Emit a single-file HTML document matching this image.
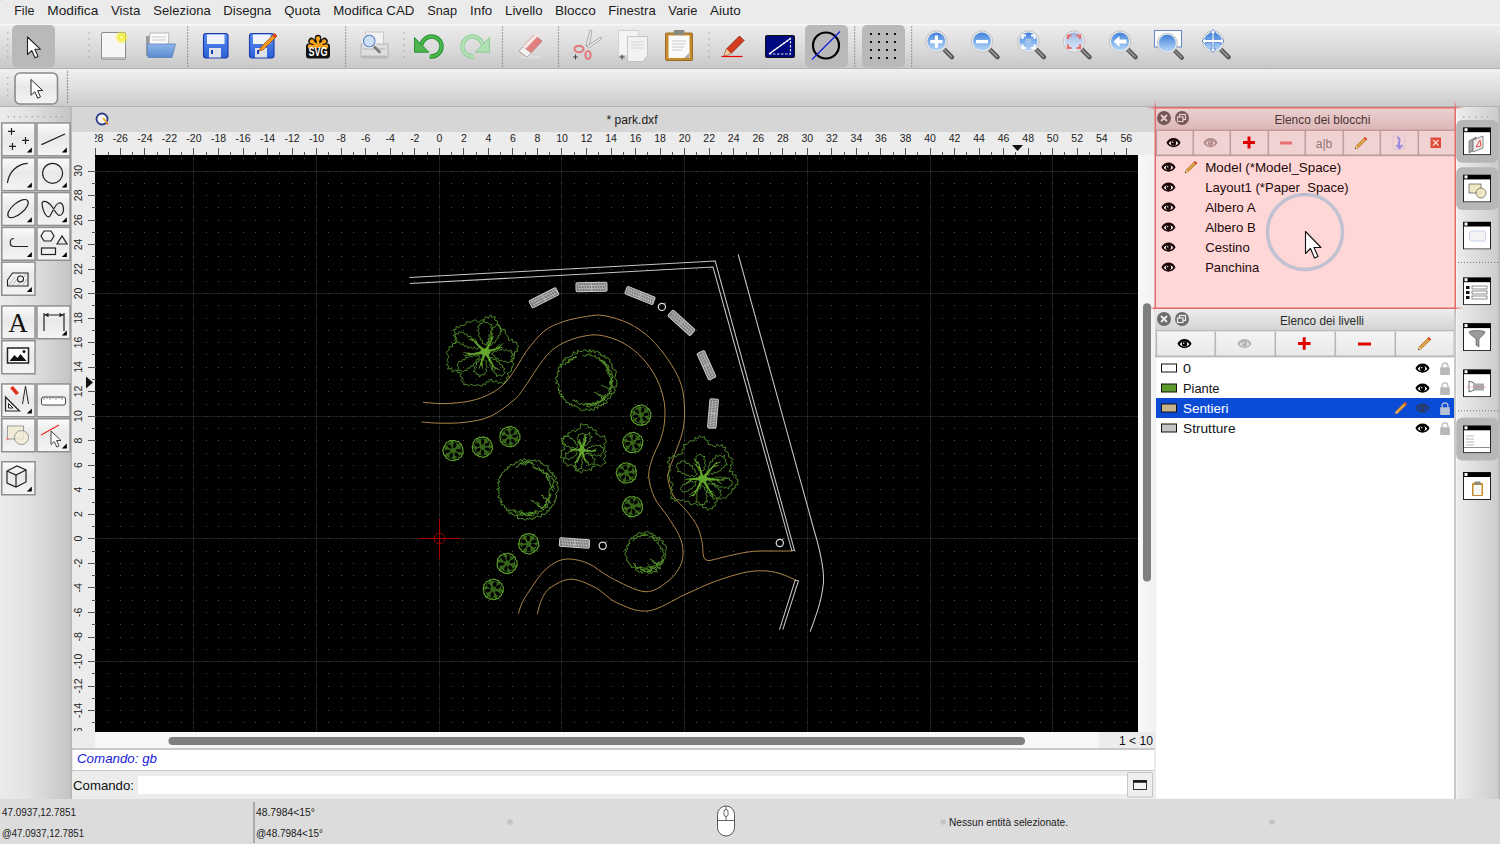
<!DOCTYPE html><html><head><meta charset="utf-8"><title>LibreCAD - park.dxf</title><style>
html,body{margin:0;padding:0;}
body{width:1500px;height:844px;position:relative;overflow:hidden;background:#ececec;font-family:"Liberation Sans",sans-serif;}
.abs{position:absolute;}
svg{position:absolute;left:0;top:0;overflow:visible}
</style></head><body>

<div class="abs" style="left:0;top:0;width:1500px;height:24px;background:#ebebeb"></div>
<div class="abs" style="left:0;top:24px;width:1500px;height:44.5px;background:linear-gradient(#f7f7f7 0,#f7f7f7 1px,#ececec 2px,#d9d9d9 60%,#c8c8c8);border-bottom:1px solid #b4b4b4;box-sizing:border-box"></div>
<div class="abs" style="left:0;top:68.5px;width:1500px;height:38.5px;background:linear-gradient(#f0f0f0,#dcdcdc 60%,#cbcbcb);border-bottom:1.5px solid #b3b3b3;box-sizing:border-box"></div>
<div class="abs" style="left:0;top:107px;width:71px;height:692px;background:linear-gradient(90deg,#ececec,#e2e2e2 40%,#c4c4c4)"></div>
<div class="abs" style="left:70px;top:107px;width:2px;height:692px;background:#b9b9b9"></div>
<div class="abs" style="left:72px;top:107px;width:1083px;height:25px;background:#d6d6d6"></div>
<div class="abs" style="left:72px;top:132px;width:1083px;height:23px;background:#ececec"></div>
<div class="abs" style="left:72px;top:155px;width:23px;height:593px;background:#ececec"></div>
<div class="abs" style="left:95px;top:155px;width:1043px;height:577px;background:#000"></div>
<div class="abs" style="left:1138px;top:155px;width:17px;height:577px;background:linear-gradient(90deg,#f8f8f8,#f2f2f2)"></div>
<div class="abs" style="left:95px;top:732px;width:1060px;height:16px;background:#f7f7f7"></div>
<div class="abs" style="left:1099px;top:732px;width:56px;height:16px;background:#ececec"></div>
<div class="abs" style="left:72px;top:748px;width:1083px;height:2px;background:#c9c9c9"></div>
<div class="abs" style="left:73px;top:750px;width:1081px;height:20px;background:#fff"></div>
<div class="abs" style="left:72px;top:770px;width:1083px;height:1px;background:#c9c9c9"></div>
<div class="abs" style="left:72px;top:771px;width:1083px;height:28px;background:#ececec"></div>
<div class="abs" style="left:138px;top:776px;width:989px;height:18px;background:#fff"></div>
<div class="abs" style="left:1155px;top:107px;width:300px;height:692px;background:#ececec"></div>
<div class="abs" style="left:1455px;top:107px;width:45px;height:692px;background:linear-gradient(90deg,#c9c9c9 0,#c9c9c9 1px,#f6f6f6 1px,#ebebeb 3px,#dcdcdc 50%,#cdcdcd 95%,#bcbcbc 95%)"></div>
<div class="abs" style="left:0;top:799px;width:1500px;height:45px;background:#dcdcdc"></div>
<svg width="1500" height="844" viewBox="0 0 1500 844" font-family='"Liberation Sans", sans-serif'>
<text x="14.3" y="10" font-size="13.5" fill="#1c1c1c" text-anchor="start" dominant-baseline="central" font-weight="normal"  textLength="20.0" lengthAdjust="spacingAndGlyphs">File</text>
<text x="47.3" y="10" font-size="13.5" fill="#1c1c1c" text-anchor="start" dominant-baseline="central" font-weight="normal"  textLength="51.0" lengthAdjust="spacingAndGlyphs">Modifica</text>
<text x="111" y="10" font-size="13.5" fill="#1c1c1c" text-anchor="start" dominant-baseline="central" font-weight="normal"  textLength="29.3" lengthAdjust="spacingAndGlyphs">Vista</text>
<text x="153.3" y="10" font-size="13.5" fill="#1c1c1c" text-anchor="start" dominant-baseline="central" font-weight="normal"  textLength="57.4" lengthAdjust="spacingAndGlyphs">Seleziona</text>
<text x="223.3" y="10" font-size="13.5" fill="#1c1c1c" text-anchor="start" dominant-baseline="central" font-weight="normal"  textLength="48.0" lengthAdjust="spacingAndGlyphs">Disegna</text>
<text x="284.3" y="10" font-size="13.5" fill="#1c1c1c" text-anchor="start" dominant-baseline="central" font-weight="normal"  textLength="36.0" lengthAdjust="spacingAndGlyphs">Quota</text>
<text x="333.3" y="10" font-size="13.5" fill="#1c1c1c" text-anchor="start" dominant-baseline="central" font-weight="normal"  textLength="81.0" lengthAdjust="spacingAndGlyphs">Modifica CAD</text>
<text x="427.3" y="10" font-size="13.5" fill="#1c1c1c" text-anchor="start" dominant-baseline="central" font-weight="normal"  textLength="29.7" lengthAdjust="spacingAndGlyphs">Snap</text>
<text x="470" y="10" font-size="13.5" fill="#1c1c1c" text-anchor="start" dominant-baseline="central" font-weight="normal"  textLength="22.3" lengthAdjust="spacingAndGlyphs">Info</text>
<text x="505" y="10" font-size="13.5" fill="#1c1c1c" text-anchor="start" dominant-baseline="central" font-weight="normal"  textLength="37.7" lengthAdjust="spacingAndGlyphs">Livello</text>
<text x="555" y="10" font-size="13.5" fill="#1c1c1c" text-anchor="start" dominant-baseline="central" font-weight="normal"  textLength="40.7" lengthAdjust="spacingAndGlyphs">Blocco</text>
<text x="608.3" y="10" font-size="13.5" fill="#1c1c1c" text-anchor="start" dominant-baseline="central" font-weight="normal"  textLength="47.4" lengthAdjust="spacingAndGlyphs">Finestra</text>
<text x="668.3" y="10" font-size="13.5" fill="#1c1c1c" text-anchor="start" dominant-baseline="central" font-weight="normal"  textLength="29.0" lengthAdjust="spacingAndGlyphs">Varie</text>
<text x="710" y="10" font-size="13.5" fill="#1c1c1c" text-anchor="start" dominant-baseline="central" font-weight="normal"  textLength="30.7" lengthAdjust="spacingAndGlyphs">Aiuto</text>
<path d="M95.5 148V155M108.5 152V155M120.5 148V155M132.5 152V155M144.5 148V155M157.5 152V155M169.5 148V155M181.5 152V155M193.5 148V155M206.5 152V155M218.5 148V155M230.5 152V155M243.5 148V155M255.5 152V155M267.5 148V155M279.5 152V155M292.5 148V155M304.5 152V155M316.5 148V155M328.5 152V155M341.5 148V155M353.5 152V155M365.5 148V155M377.5 152V155M390.5 148V155M402.5 152V155M414.5 148V155M427.5 152V155M439.5 148V155M451.5 152V155M463.5 148V155M476.5 152V155M488.5 148V155M500.5 152V155M512.5 148V155M525.5 152V155M537.5 148V155M549.5 152V155M561.5 148V155M574.5 152V155M586.5 148V155M598.5 152V155M611.5 148V155M623.5 152V155M635.5 148V155M647.5 152V155M660.5 148V155M672.5 152V155M684.5 148V155M696.5 152V155M709.5 148V155M721.5 152V155M733.5 148V155M746.5 152V155M758.5 148V155M770.5 152V155M782.5 148V155M795.5 152V155M807.5 148V155M819.5 152V155M831.5 148V155M844.5 152V155M856.5 148V155M868.5 152V155M880.5 148V155M893.5 152V155M905.5 148V155M917.5 152V155M930.5 148V155M942.5 152V155M954.5 148V155M966.5 152V155M979.5 148V155M991.5 152V155M1003.5 148V155M1015.5 152V155M1028.5 148V155M1040.5 152V155M1052.5 148V155M1064.5 152V155M1077.5 148V155M1089.5 152V155M1101.5 148V155M1114.5 152V155M1126.5 148V155M92 722.5H95M88 710.5H95M92 698.5H95M88 686.5H95M92 673.5H95M88 661.5H95M92 649.5H95M88 637.5H95M92 624.5H95M88 612.5H95M92 600.5H95M88 587.5H95M92 575.5H95M88 563.5H95M92 551.5H95M88 538.5H95M92 526.5H95M88 514.5H95M92 502.5H95M88 489.5H95M92 477.5H95M88 465.5H95M92 453.5H95M88 440.5H95M92 428.5H95M88 416.5H95M92 404.5H95M88 391.5H95M92 379.5H95M88 367.5H95M92 354.5H95M88 342.5H95M92 330.5H95M88 318.5H95M92 305.5H95M88 293.5H95M92 281.5H95M88 269.5H95M92 256.5H95M88 244.5H95M92 232.5H95M88 220.5H95M92 207.5H95M88 195.5H95M92 183.5H95M88 171.5H95" stroke="#555" stroke-width="1" fill="none"/>
<svg x="95" y="132" width="1043" height="16" viewBox="95 132 1043 16" style="position:static;overflow:hidden">
<text x="95.8" y="138" font-size="10.5" fill="#222" text-anchor="middle" dominant-baseline="central" font-weight="normal" >-28</text>
<text x="120.3" y="138" font-size="10.5" fill="#222" text-anchor="middle" dominant-baseline="central" font-weight="normal" >-26</text>
<text x="144.9" y="138" font-size="10.5" fill="#222" text-anchor="middle" dominant-baseline="central" font-weight="normal" >-24</text>
<text x="169.4" y="138" font-size="10.5" fill="#222" text-anchor="middle" dominant-baseline="central" font-weight="normal" >-22</text>
<text x="193.9" y="138" font-size="10.5" fill="#222" text-anchor="middle" dominant-baseline="central" font-weight="normal" >-20</text>
<text x="218.5" y="138" font-size="10.5" fill="#222" text-anchor="middle" dominant-baseline="central" font-weight="normal" >-18</text>
<text x="243.0" y="138" font-size="10.5" fill="#222" text-anchor="middle" dominant-baseline="central" font-weight="normal" >-16</text>
<text x="267.5" y="138" font-size="10.5" fill="#222" text-anchor="middle" dominant-baseline="central" font-weight="normal" >-14</text>
<text x="292.1" y="138" font-size="10.5" fill="#222" text-anchor="middle" dominant-baseline="central" font-weight="normal" >-12</text>
<text x="316.6" y="138" font-size="10.5" fill="#222" text-anchor="middle" dominant-baseline="central" font-weight="normal" >-10</text>
<text x="341.2" y="138" font-size="10.5" fill="#222" text-anchor="middle" dominant-baseline="central" font-weight="normal" >-8</text>
<text x="365.7" y="138" font-size="10.5" fill="#222" text-anchor="middle" dominant-baseline="central" font-weight="normal" >-6</text>
<text x="390.2" y="138" font-size="10.5" fill="#222" text-anchor="middle" dominant-baseline="central" font-weight="normal" >-4</text>
<text x="414.8" y="138" font-size="10.5" fill="#222" text-anchor="middle" dominant-baseline="central" font-weight="normal" >-2</text>
<text x="439.3" y="138" font-size="10.5" fill="#222" text-anchor="middle" dominant-baseline="central" font-weight="normal" >0</text>
<text x="463.8" y="138" font-size="10.5" fill="#222" text-anchor="middle" dominant-baseline="central" font-weight="normal" >2</text>
<text x="488.4" y="138" font-size="10.5" fill="#222" text-anchor="middle" dominant-baseline="central" font-weight="normal" >4</text>
<text x="512.9" y="138" font-size="10.5" fill="#222" text-anchor="middle" dominant-baseline="central" font-weight="normal" >6</text>
<text x="537.4" y="138" font-size="10.5" fill="#222" text-anchor="middle" dominant-baseline="central" font-weight="normal" >8</text>
<text x="562.0" y="138" font-size="10.5" fill="#222" text-anchor="middle" dominant-baseline="central" font-weight="normal" >10</text>
<text x="586.5" y="138" font-size="10.5" fill="#222" text-anchor="middle" dominant-baseline="central" font-weight="normal" >12</text>
<text x="611.1" y="138" font-size="10.5" fill="#222" text-anchor="middle" dominant-baseline="central" font-weight="normal" >14</text>
<text x="635.6" y="138" font-size="10.5" fill="#222" text-anchor="middle" dominant-baseline="central" font-weight="normal" >16</text>
<text x="660.1" y="138" font-size="10.5" fill="#222" text-anchor="middle" dominant-baseline="central" font-weight="normal" >18</text>
<text x="684.7" y="138" font-size="10.5" fill="#222" text-anchor="middle" dominant-baseline="central" font-weight="normal" >20</text>
<text x="709.2" y="138" font-size="10.5" fill="#222" text-anchor="middle" dominant-baseline="central" font-weight="normal" >22</text>
<text x="733.7" y="138" font-size="10.5" fill="#222" text-anchor="middle" dominant-baseline="central" font-weight="normal" >24</text>
<text x="758.3" y="138" font-size="10.5" fill="#222" text-anchor="middle" dominant-baseline="central" font-weight="normal" >26</text>
<text x="782.8" y="138" font-size="10.5" fill="#222" text-anchor="middle" dominant-baseline="central" font-weight="normal" >28</text>
<text x="807.3" y="138" font-size="10.5" fill="#222" text-anchor="middle" dominant-baseline="central" font-weight="normal" >30</text>
<text x="831.9" y="138" font-size="10.5" fill="#222" text-anchor="middle" dominant-baseline="central" font-weight="normal" >32</text>
<text x="856.4" y="138" font-size="10.5" fill="#222" text-anchor="middle" dominant-baseline="central" font-weight="normal" >34</text>
<text x="880.9" y="138" font-size="10.5" fill="#222" text-anchor="middle" dominant-baseline="central" font-weight="normal" >36</text>
<text x="905.5" y="138" font-size="10.5" fill="#222" text-anchor="middle" dominant-baseline="central" font-weight="normal" >38</text>
<text x="930.0" y="138" font-size="10.5" fill="#222" text-anchor="middle" dominant-baseline="central" font-weight="normal" >40</text>
<text x="954.6" y="138" font-size="10.5" fill="#222" text-anchor="middle" dominant-baseline="central" font-weight="normal" >42</text>
<text x="979.1" y="138" font-size="10.5" fill="#222" text-anchor="middle" dominant-baseline="central" font-weight="normal" >44</text>
<text x="1003.6" y="138" font-size="10.5" fill="#222" text-anchor="middle" dominant-baseline="central" font-weight="normal" >46</text>
<text x="1028.2" y="138" font-size="10.5" fill="#222" text-anchor="middle" dominant-baseline="central" font-weight="normal" >48</text>
<text x="1052.7" y="138" font-size="10.5" fill="#222" text-anchor="middle" dominant-baseline="central" font-weight="normal" >50</text>
<text x="1077.2" y="138" font-size="10.5" fill="#222" text-anchor="middle" dominant-baseline="central" font-weight="normal" >52</text>
<text x="1101.8" y="138" font-size="10.5" fill="#222" text-anchor="middle" dominant-baseline="central" font-weight="normal" >54</text>
<text x="1126.3" y="138" font-size="10.5" fill="#222" text-anchor="middle" dominant-baseline="central" font-weight="normal" >56</text>
</svg>
<svg x="72" y="155" width="23" height="576" viewBox="72 155 23 576" style="position:static;overflow:hidden">
<text x="0" y="0" font-size="10.5" fill="#222" text-anchor="middle" dominant-baseline="central" transform="translate(78.1 734.9) rotate(-90)">-16</text>
<text x="0" y="0" font-size="10.5" fill="#222" text-anchor="middle" dominant-baseline="central" transform="translate(78.1 710.4) rotate(-90)">-14</text>
<text x="0" y="0" font-size="10.5" fill="#222" text-anchor="middle" dominant-baseline="central" transform="translate(78.1 685.9) rotate(-90)">-12</text>
<text x="0" y="0" font-size="10.5" fill="#222" text-anchor="middle" dominant-baseline="central" transform="translate(78.1 661.3) rotate(-90)">-10</text>
<text x="0" y="0" font-size="10.5" fill="#222" text-anchor="middle" dominant-baseline="central" transform="translate(78.1 636.8) rotate(-90)">-8</text>
<text x="0" y="0" font-size="10.5" fill="#222" text-anchor="middle" dominant-baseline="central" transform="translate(78.1 612.3) rotate(-90)">-6</text>
<text x="0" y="0" font-size="10.5" fill="#222" text-anchor="middle" dominant-baseline="central" transform="translate(78.1 587.8) rotate(-90)">-4</text>
<text x="0" y="0" font-size="10.5" fill="#222" text-anchor="middle" dominant-baseline="central" transform="translate(78.1 563.2) rotate(-90)">-2</text>
<text x="0" y="0" font-size="10.5" fill="#222" text-anchor="middle" dominant-baseline="central" transform="translate(78.1 538.7) rotate(-90)">0</text>
<text x="0" y="0" font-size="10.5" fill="#222" text-anchor="middle" dominant-baseline="central" transform="translate(78.1 514.2) rotate(-90)">2</text>
<text x="0" y="0" font-size="10.5" fill="#222" text-anchor="middle" dominant-baseline="central" transform="translate(78.1 489.6) rotate(-90)">4</text>
<text x="0" y="0" font-size="10.5" fill="#222" text-anchor="middle" dominant-baseline="central" transform="translate(78.1 465.1) rotate(-90)">6</text>
<text x="0" y="0" font-size="10.5" fill="#222" text-anchor="middle" dominant-baseline="central" transform="translate(78.1 440.6) rotate(-90)">8</text>
<text x="0" y="0" font-size="10.5" fill="#222" text-anchor="middle" dominant-baseline="central" transform="translate(78.1 416.1) rotate(-90)">10</text>
<text x="0" y="0" font-size="10.5" fill="#222" text-anchor="middle" dominant-baseline="central" transform="translate(78.1 391.5) rotate(-90)">12</text>
<text x="0" y="0" font-size="10.5" fill="#222" text-anchor="middle" dominant-baseline="central" transform="translate(78.1 367.0) rotate(-90)">14</text>
<text x="0" y="0" font-size="10.5" fill="#222" text-anchor="middle" dominant-baseline="central" transform="translate(78.1 342.5) rotate(-90)">16</text>
<text x="0" y="0" font-size="10.5" fill="#222" text-anchor="middle" dominant-baseline="central" transform="translate(78.1 318.0) rotate(-90)">18</text>
<text x="0" y="0" font-size="10.5" fill="#222" text-anchor="middle" dominant-baseline="central" transform="translate(78.1 293.4) rotate(-90)">20</text>
<text x="0" y="0" font-size="10.5" fill="#222" text-anchor="middle" dominant-baseline="central" transform="translate(78.1 268.9) rotate(-90)">22</text>
<text x="0" y="0" font-size="10.5" fill="#222" text-anchor="middle" dominant-baseline="central" transform="translate(78.1 244.4) rotate(-90)">24</text>
<text x="0" y="0" font-size="10.5" fill="#222" text-anchor="middle" dominant-baseline="central" transform="translate(78.1 219.9) rotate(-90)">26</text>
<text x="0" y="0" font-size="10.5" fill="#222" text-anchor="middle" dominant-baseline="central" transform="translate(78.1 195.3) rotate(-90)">28</text>
<text x="0" y="0" font-size="10.5" fill="#222" text-anchor="middle" dominant-baseline="central" transform="translate(78.1 170.8) rotate(-90)">30</text>
</svg>
<path d="M1012 145h11l-5.5 6z" fill="#111"/>
<path d="M86 376.5v12l7-6z" fill="#111"/>
<path d="M193.5 155V732M316.5 155V732M439.5 155V732M561.5 155V732M684.5 155V732M807.5 155V732M930.5 155V732M1052.5 155V732M95 661.5H1138M95 538.5H1138M95 416.5H1138M95 293.5H1138M95 171.5H1138" stroke="#1b1b1b" stroke-width="1" fill="none" shape-rendering="crispEdges"/>
<path d="M95 722h1v1h-1zM95 710h1v1h-1zM95 698h1v1h-1zM95 686h1v1h-1zM95 673h1v1h-1zM95 661h1v1h-1zM95 649h1v1h-1zM95 637h1v1h-1zM95 624h1v1h-1zM95 612h1v1h-1zM95 600h1v1h-1zM95 587h1v1h-1zM95 575h1v1h-1zM95 563h1v1h-1zM95 551h1v1h-1zM95 538h1v1h-1zM95 526h1v1h-1zM95 514h1v1h-1zM95 502h1v1h-1zM95 489h1v1h-1zM95 477h1v1h-1zM95 465h1v1h-1zM95 453h1v1h-1zM95 440h1v1h-1zM95 428h1v1h-1zM95 416h1v1h-1zM95 404h1v1h-1zM95 391h1v1h-1zM95 379h1v1h-1zM95 367h1v1h-1zM95 354h1v1h-1zM95 342h1v1h-1zM95 330h1v1h-1zM95 318h1v1h-1zM95 305h1v1h-1zM95 293h1v1h-1zM95 281h1v1h-1zM95 269h1v1h-1zM95 256h1v1h-1zM95 244h1v1h-1zM95 232h1v1h-1zM95 220h1v1h-1zM95 207h1v1h-1zM95 195h1v1h-1zM95 183h1v1h-1zM95 171h1v1h-1zM95 158h1v1h-1zM108 722h1v1h-1zM108 710h1v1h-1zM108 698h1v1h-1zM108 686h1v1h-1zM108 673h1v1h-1zM108 661h1v1h-1zM108 649h1v1h-1zM108 637h1v1h-1zM108 624h1v1h-1zM108 612h1v1h-1zM108 600h1v1h-1zM108 587h1v1h-1zM108 575h1v1h-1zM108 563h1v1h-1zM108 551h1v1h-1zM108 538h1v1h-1zM108 526h1v1h-1zM108 514h1v1h-1zM108 502h1v1h-1zM108 489h1v1h-1zM108 477h1v1h-1zM108 465h1v1h-1zM108 453h1v1h-1zM108 440h1v1h-1zM108 428h1v1h-1zM108 416h1v1h-1zM108 404h1v1h-1zM108 391h1v1h-1zM108 379h1v1h-1zM108 367h1v1h-1zM108 354h1v1h-1zM108 342h1v1h-1zM108 330h1v1h-1zM108 318h1v1h-1zM108 305h1v1h-1zM108 293h1v1h-1zM108 281h1v1h-1zM108 269h1v1h-1zM108 256h1v1h-1zM108 244h1v1h-1zM108 232h1v1h-1zM108 220h1v1h-1zM108 207h1v1h-1zM108 195h1v1h-1zM108 183h1v1h-1zM108 171h1v1h-1zM108 158h1v1h-1zM120 722h1v1h-1zM120 710h1v1h-1zM120 698h1v1h-1zM120 686h1v1h-1zM120 673h1v1h-1zM120 661h1v1h-1zM120 649h1v1h-1zM120 637h1v1h-1zM120 624h1v1h-1zM120 612h1v1h-1zM120 600h1v1h-1zM120 587h1v1h-1zM120 575h1v1h-1zM120 563h1v1h-1zM120 551h1v1h-1zM120 538h1v1h-1zM120 526h1v1h-1zM120 514h1v1h-1zM120 502h1v1h-1zM120 489h1v1h-1zM120 477h1v1h-1zM120 465h1v1h-1zM120 453h1v1h-1zM120 440h1v1h-1zM120 428h1v1h-1zM120 416h1v1h-1zM120 404h1v1h-1zM120 391h1v1h-1zM120 379h1v1h-1zM120 367h1v1h-1zM120 354h1v1h-1zM120 342h1v1h-1zM120 330h1v1h-1zM120 318h1v1h-1zM120 305h1v1h-1zM120 293h1v1h-1zM120 281h1v1h-1zM120 269h1v1h-1zM120 256h1v1h-1zM120 244h1v1h-1zM120 232h1v1h-1zM120 220h1v1h-1zM120 207h1v1h-1zM120 195h1v1h-1zM120 183h1v1h-1zM120 171h1v1h-1zM120 158h1v1h-1zM132 722h1v1h-1zM132 710h1v1h-1zM132 698h1v1h-1zM132 686h1v1h-1zM132 673h1v1h-1zM132 661h1v1h-1zM132 649h1v1h-1zM132 637h1v1h-1zM132 624h1v1h-1zM132 612h1v1h-1zM132 600h1v1h-1zM132 587h1v1h-1zM132 575h1v1h-1zM132 563h1v1h-1zM132 551h1v1h-1zM132 538h1v1h-1zM132 526h1v1h-1zM132 514h1v1h-1zM132 502h1v1h-1zM132 489h1v1h-1zM132 477h1v1h-1zM132 465h1v1h-1zM132 453h1v1h-1zM132 440h1v1h-1zM132 428h1v1h-1zM132 416h1v1h-1zM132 404h1v1h-1zM132 391h1v1h-1zM132 379h1v1h-1zM132 367h1v1h-1zM132 354h1v1h-1zM132 342h1v1h-1zM132 330h1v1h-1zM132 318h1v1h-1zM132 305h1v1h-1zM132 293h1v1h-1zM132 281h1v1h-1zM132 269h1v1h-1zM132 256h1v1h-1zM132 244h1v1h-1zM132 232h1v1h-1zM132 220h1v1h-1zM132 207h1v1h-1zM132 195h1v1h-1zM132 183h1v1h-1zM132 171h1v1h-1zM132 158h1v1h-1zM144 722h1v1h-1zM144 710h1v1h-1zM144 698h1v1h-1zM144 686h1v1h-1zM144 673h1v1h-1zM144 661h1v1h-1zM144 649h1v1h-1zM144 637h1v1h-1zM144 624h1v1h-1zM144 612h1v1h-1zM144 600h1v1h-1zM144 587h1v1h-1zM144 575h1v1h-1zM144 563h1v1h-1zM144 551h1v1h-1zM144 538h1v1h-1zM144 526h1v1h-1zM144 514h1v1h-1zM144 502h1v1h-1zM144 489h1v1h-1zM144 477h1v1h-1zM144 465h1v1h-1zM144 453h1v1h-1zM144 440h1v1h-1zM144 428h1v1h-1zM144 416h1v1h-1zM144 404h1v1h-1zM144 391h1v1h-1zM144 379h1v1h-1zM144 367h1v1h-1zM144 354h1v1h-1zM144 342h1v1h-1zM144 330h1v1h-1zM144 318h1v1h-1zM144 305h1v1h-1zM144 293h1v1h-1zM144 281h1v1h-1zM144 269h1v1h-1zM144 256h1v1h-1zM144 244h1v1h-1zM144 232h1v1h-1zM144 220h1v1h-1zM144 207h1v1h-1zM144 195h1v1h-1zM144 183h1v1h-1zM144 171h1v1h-1zM144 158h1v1h-1zM157 722h1v1h-1zM157 710h1v1h-1zM157 698h1v1h-1zM157 686h1v1h-1zM157 673h1v1h-1zM157 661h1v1h-1zM157 649h1v1h-1zM157 637h1v1h-1zM157 624h1v1h-1zM157 612h1v1h-1zM157 600h1v1h-1zM157 587h1v1h-1zM157 575h1v1h-1zM157 563h1v1h-1zM157 551h1v1h-1zM157 538h1v1h-1zM157 526h1v1h-1zM157 514h1v1h-1zM157 502h1v1h-1zM157 489h1v1h-1zM157 477h1v1h-1zM157 465h1v1h-1zM157 453h1v1h-1zM157 440h1v1h-1zM157 428h1v1h-1zM157 416h1v1h-1zM157 404h1v1h-1zM157 391h1v1h-1zM157 379h1v1h-1zM157 367h1v1h-1zM157 354h1v1h-1zM157 342h1v1h-1zM157 330h1v1h-1zM157 318h1v1h-1zM157 305h1v1h-1zM157 293h1v1h-1zM157 281h1v1h-1zM157 269h1v1h-1zM157 256h1v1h-1zM157 244h1v1h-1zM157 232h1v1h-1zM157 220h1v1h-1zM157 207h1v1h-1zM157 195h1v1h-1zM157 183h1v1h-1zM157 171h1v1h-1zM157 158h1v1h-1zM169 722h1v1h-1zM169 710h1v1h-1zM169 698h1v1h-1zM169 686h1v1h-1zM169 673h1v1h-1zM169 661h1v1h-1zM169 649h1v1h-1zM169 637h1v1h-1zM169 624h1v1h-1zM169 612h1v1h-1zM169 600h1v1h-1zM169 587h1v1h-1zM169 575h1v1h-1zM169 563h1v1h-1zM169 551h1v1h-1zM169 538h1v1h-1zM169 526h1v1h-1zM169 514h1v1h-1zM169 502h1v1h-1zM169 489h1v1h-1zM169 477h1v1h-1zM169 465h1v1h-1zM169 453h1v1h-1zM169 440h1v1h-1zM169 428h1v1h-1zM169 416h1v1h-1zM169 404h1v1h-1zM169 391h1v1h-1zM169 379h1v1h-1zM169 367h1v1h-1zM169 354h1v1h-1zM169 342h1v1h-1zM169 330h1v1h-1zM169 318h1v1h-1zM169 305h1v1h-1zM169 293h1v1h-1zM169 281h1v1h-1zM169 269h1v1h-1zM169 256h1v1h-1zM169 244h1v1h-1zM169 232h1v1h-1zM169 220h1v1h-1zM169 207h1v1h-1zM169 195h1v1h-1zM169 183h1v1h-1zM169 171h1v1h-1zM169 158h1v1h-1zM181 722h1v1h-1zM181 710h1v1h-1zM181 698h1v1h-1zM181 686h1v1h-1zM181 673h1v1h-1zM181 661h1v1h-1zM181 649h1v1h-1zM181 637h1v1h-1zM181 624h1v1h-1zM181 612h1v1h-1zM181 600h1v1h-1zM181 587h1v1h-1zM181 575h1v1h-1zM181 563h1v1h-1zM181 551h1v1h-1zM181 538h1v1h-1zM181 526h1v1h-1zM181 514h1v1h-1zM181 502h1v1h-1zM181 489h1v1h-1zM181 477h1v1h-1zM181 465h1v1h-1zM181 453h1v1h-1zM181 440h1v1h-1zM181 428h1v1h-1zM181 416h1v1h-1zM181 404h1v1h-1zM181 391h1v1h-1zM181 379h1v1h-1zM181 367h1v1h-1zM181 354h1v1h-1zM181 342h1v1h-1zM181 330h1v1h-1zM181 318h1v1h-1zM181 305h1v1h-1zM181 293h1v1h-1zM181 281h1v1h-1zM181 269h1v1h-1zM181 256h1v1h-1zM181 244h1v1h-1zM181 232h1v1h-1zM181 220h1v1h-1zM181 207h1v1h-1zM181 195h1v1h-1zM181 183h1v1h-1zM181 171h1v1h-1zM181 158h1v1h-1zM193 722h1v1h-1zM193 710h1v1h-1zM193 698h1v1h-1zM193 686h1v1h-1zM193 673h1v1h-1zM193 661h1v1h-1zM193 649h1v1h-1zM193 637h1v1h-1zM193 624h1v1h-1zM193 612h1v1h-1zM193 600h1v1h-1zM193 587h1v1h-1zM193 575h1v1h-1zM193 563h1v1h-1zM193 551h1v1h-1zM193 538h1v1h-1zM193 526h1v1h-1zM193 514h1v1h-1zM193 502h1v1h-1zM193 489h1v1h-1zM193 477h1v1h-1zM193 465h1v1h-1zM193 453h1v1h-1zM193 440h1v1h-1zM193 428h1v1h-1zM193 416h1v1h-1zM193 404h1v1h-1zM193 391h1v1h-1zM193 379h1v1h-1zM193 367h1v1h-1zM193 354h1v1h-1zM193 342h1v1h-1zM193 330h1v1h-1zM193 318h1v1h-1zM193 305h1v1h-1zM193 293h1v1h-1zM193 281h1v1h-1zM193 269h1v1h-1zM193 256h1v1h-1zM193 244h1v1h-1zM193 232h1v1h-1zM193 220h1v1h-1zM193 207h1v1h-1zM193 195h1v1h-1zM193 183h1v1h-1zM193 171h1v1h-1zM193 158h1v1h-1zM206 722h1v1h-1zM206 710h1v1h-1zM206 698h1v1h-1zM206 686h1v1h-1zM206 673h1v1h-1zM206 661h1v1h-1zM206 649h1v1h-1zM206 637h1v1h-1zM206 624h1v1h-1zM206 612h1v1h-1zM206 600h1v1h-1zM206 587h1v1h-1zM206 575h1v1h-1zM206 563h1v1h-1zM206 551h1v1h-1zM206 538h1v1h-1zM206 526h1v1h-1zM206 514h1v1h-1zM206 502h1v1h-1zM206 489h1v1h-1zM206 477h1v1h-1zM206 465h1v1h-1zM206 453h1v1h-1zM206 440h1v1h-1zM206 428h1v1h-1zM206 416h1v1h-1zM206 404h1v1h-1zM206 391h1v1h-1zM206 379h1v1h-1zM206 367h1v1h-1zM206 354h1v1h-1zM206 342h1v1h-1zM206 330h1v1h-1zM206 318h1v1h-1zM206 305h1v1h-1zM206 293h1v1h-1zM206 281h1v1h-1zM206 269h1v1h-1zM206 256h1v1h-1zM206 244h1v1h-1zM206 232h1v1h-1zM206 220h1v1h-1zM206 207h1v1h-1zM206 195h1v1h-1zM206 183h1v1h-1zM206 171h1v1h-1zM206 158h1v1h-1zM218 722h1v1h-1zM218 710h1v1h-1zM218 698h1v1h-1zM218 686h1v1h-1zM218 673h1v1h-1zM218 661h1v1h-1zM218 649h1v1h-1zM218 637h1v1h-1zM218 624h1v1h-1zM218 612h1v1h-1zM218 600h1v1h-1zM218 587h1v1h-1zM218 575h1v1h-1zM218 563h1v1h-1zM218 551h1v1h-1zM218 538h1v1h-1zM218 526h1v1h-1zM218 514h1v1h-1zM218 502h1v1h-1zM218 489h1v1h-1zM218 477h1v1h-1zM218 465h1v1h-1zM218 453h1v1h-1zM218 440h1v1h-1zM218 428h1v1h-1zM218 416h1v1h-1zM218 404h1v1h-1zM218 391h1v1h-1zM218 379h1v1h-1zM218 367h1v1h-1zM218 354h1v1h-1zM218 342h1v1h-1zM218 330h1v1h-1zM218 318h1v1h-1zM218 305h1v1h-1zM218 293h1v1h-1zM218 281h1v1h-1zM218 269h1v1h-1zM218 256h1v1h-1zM218 244h1v1h-1zM218 232h1v1h-1zM218 220h1v1h-1zM218 207h1v1h-1zM218 195h1v1h-1zM218 183h1v1h-1zM218 171h1v1h-1zM218 158h1v1h-1zM230 722h1v1h-1zM230 710h1v1h-1zM230 698h1v1h-1zM230 686h1v1h-1zM230 673h1v1h-1zM230 661h1v1h-1zM230 649h1v1h-1zM230 637h1v1h-1zM230 624h1v1h-1zM230 612h1v1h-1zM230 600h1v1h-1zM230 587h1v1h-1zM230 575h1v1h-1zM230 563h1v1h-1zM230 551h1v1h-1zM230 538h1v1h-1zM230 526h1v1h-1zM230 514h1v1h-1zM230 502h1v1h-1zM230 489h1v1h-1zM230 477h1v1h-1zM230 465h1v1h-1zM230 453h1v1h-1zM230 440h1v1h-1zM230 428h1v1h-1zM230 416h1v1h-1zM230 404h1v1h-1zM230 391h1v1h-1zM230 379h1v1h-1zM230 367h1v1h-1zM230 354h1v1h-1zM230 342h1v1h-1zM230 330h1v1h-1zM230 318h1v1h-1zM230 305h1v1h-1zM230 293h1v1h-1zM230 281h1v1h-1zM230 269h1v1h-1zM230 256h1v1h-1zM230 244h1v1h-1zM230 232h1v1h-1zM230 220h1v1h-1zM230 207h1v1h-1zM230 195h1v1h-1zM230 183h1v1h-1zM230 171h1v1h-1zM230 158h1v1h-1zM243 722h1v1h-1zM243 710h1v1h-1zM243 698h1v1h-1zM243 686h1v1h-1zM243 673h1v1h-1zM243 661h1v1h-1zM243 649h1v1h-1zM243 637h1v1h-1zM243 624h1v1h-1zM243 612h1v1h-1zM243 600h1v1h-1zM243 587h1v1h-1zM243 575h1v1h-1zM243 563h1v1h-1zM243 551h1v1h-1zM243 538h1v1h-1zM243 526h1v1h-1zM243 514h1v1h-1zM243 502h1v1h-1zM243 489h1v1h-1zM243 477h1v1h-1zM243 465h1v1h-1zM243 453h1v1h-1zM243 440h1v1h-1zM243 428h1v1h-1zM243 416h1v1h-1zM243 404h1v1h-1zM243 391h1v1h-1zM243 379h1v1h-1zM243 367h1v1h-1zM243 354h1v1h-1zM243 342h1v1h-1zM243 330h1v1h-1zM243 318h1v1h-1zM243 305h1v1h-1zM243 293h1v1h-1zM243 281h1v1h-1zM243 269h1v1h-1zM243 256h1v1h-1zM243 244h1v1h-1zM243 232h1v1h-1zM243 220h1v1h-1zM243 207h1v1h-1zM243 195h1v1h-1zM243 183h1v1h-1zM243 171h1v1h-1zM243 158h1v1h-1zM255 722h1v1h-1zM255 710h1v1h-1zM255 698h1v1h-1zM255 686h1v1h-1zM255 673h1v1h-1zM255 661h1v1h-1zM255 649h1v1h-1zM255 637h1v1h-1zM255 624h1v1h-1zM255 612h1v1h-1zM255 600h1v1h-1zM255 587h1v1h-1zM255 575h1v1h-1zM255 563h1v1h-1zM255 551h1v1h-1zM255 538h1v1h-1zM255 526h1v1h-1zM255 514h1v1h-1zM255 502h1v1h-1zM255 489h1v1h-1zM255 477h1v1h-1zM255 465h1v1h-1zM255 453h1v1h-1zM255 440h1v1h-1zM255 428h1v1h-1zM255 416h1v1h-1zM255 404h1v1h-1zM255 391h1v1h-1zM255 379h1v1h-1zM255 367h1v1h-1zM255 354h1v1h-1zM255 342h1v1h-1zM255 330h1v1h-1zM255 318h1v1h-1zM255 305h1v1h-1zM255 293h1v1h-1zM255 281h1v1h-1zM255 269h1v1h-1zM255 256h1v1h-1zM255 244h1v1h-1zM255 232h1v1h-1zM255 220h1v1h-1zM255 207h1v1h-1zM255 195h1v1h-1zM255 183h1v1h-1zM255 171h1v1h-1zM255 158h1v1h-1zM267 722h1v1h-1zM267 710h1v1h-1zM267 698h1v1h-1zM267 686h1v1h-1zM267 673h1v1h-1zM267 661h1v1h-1zM267 649h1v1h-1zM267 637h1v1h-1zM267 624h1v1h-1zM267 612h1v1h-1zM267 600h1v1h-1zM267 587h1v1h-1zM267 575h1v1h-1zM267 563h1v1h-1zM267 551h1v1h-1zM267 538h1v1h-1zM267 526h1v1h-1zM267 514h1v1h-1zM267 502h1v1h-1zM267 489h1v1h-1zM267 477h1v1h-1zM267 465h1v1h-1zM267 453h1v1h-1zM267 440h1v1h-1zM267 428h1v1h-1zM267 416h1v1h-1zM267 404h1v1h-1zM267 391h1v1h-1zM267 379h1v1h-1zM267 367h1v1h-1zM267 354h1v1h-1zM267 342h1v1h-1zM267 330h1v1h-1zM267 318h1v1h-1zM267 305h1v1h-1zM267 293h1v1h-1zM267 281h1v1h-1zM267 269h1v1h-1zM267 256h1v1h-1zM267 244h1v1h-1zM267 232h1v1h-1zM267 220h1v1h-1zM267 207h1v1h-1zM267 195h1v1h-1zM267 183h1v1h-1zM267 171h1v1h-1zM267 158h1v1h-1zM279 722h1v1h-1zM279 710h1v1h-1zM279 698h1v1h-1zM279 686h1v1h-1zM279 673h1v1h-1zM279 661h1v1h-1zM279 649h1v1h-1zM279 637h1v1h-1zM279 624h1v1h-1zM279 612h1v1h-1zM279 600h1v1h-1zM279 587h1v1h-1zM279 575h1v1h-1zM279 563h1v1h-1zM279 551h1v1h-1zM279 538h1v1h-1zM279 526h1v1h-1zM279 514h1v1h-1zM279 502h1v1h-1zM279 489h1v1h-1zM279 477h1v1h-1zM279 465h1v1h-1zM279 453h1v1h-1zM279 440h1v1h-1zM279 428h1v1h-1zM279 416h1v1h-1zM279 404h1v1h-1zM279 391h1v1h-1zM279 379h1v1h-1zM279 367h1v1h-1zM279 354h1v1h-1zM279 342h1v1h-1zM279 330h1v1h-1zM279 318h1v1h-1zM279 305h1v1h-1zM279 293h1v1h-1zM279 281h1v1h-1zM279 269h1v1h-1zM279 256h1v1h-1zM279 244h1v1h-1zM279 232h1v1h-1zM279 220h1v1h-1zM279 207h1v1h-1zM279 195h1v1h-1zM279 183h1v1h-1zM279 171h1v1h-1zM279 158h1v1h-1zM292 722h1v1h-1zM292 710h1v1h-1zM292 698h1v1h-1zM292 686h1v1h-1zM292 673h1v1h-1zM292 661h1v1h-1zM292 649h1v1h-1zM292 637h1v1h-1zM292 624h1v1h-1zM292 612h1v1h-1zM292 600h1v1h-1zM292 587h1v1h-1zM292 575h1v1h-1zM292 563h1v1h-1zM292 551h1v1h-1zM292 538h1v1h-1zM292 526h1v1h-1zM292 514h1v1h-1zM292 502h1v1h-1zM292 489h1v1h-1zM292 477h1v1h-1zM292 465h1v1h-1zM292 453h1v1h-1zM292 440h1v1h-1zM292 428h1v1h-1zM292 416h1v1h-1zM292 404h1v1h-1zM292 391h1v1h-1zM292 379h1v1h-1zM292 367h1v1h-1zM292 354h1v1h-1zM292 342h1v1h-1zM292 330h1v1h-1zM292 318h1v1h-1zM292 305h1v1h-1zM292 293h1v1h-1zM292 281h1v1h-1zM292 269h1v1h-1zM292 256h1v1h-1zM292 244h1v1h-1zM292 232h1v1h-1zM292 220h1v1h-1zM292 207h1v1h-1zM292 195h1v1h-1zM292 183h1v1h-1zM292 171h1v1h-1zM292 158h1v1h-1zM304 722h1v1h-1zM304 710h1v1h-1zM304 698h1v1h-1zM304 686h1v1h-1zM304 673h1v1h-1zM304 661h1v1h-1zM304 649h1v1h-1zM304 637h1v1h-1zM304 624h1v1h-1zM304 612h1v1h-1zM304 600h1v1h-1zM304 587h1v1h-1zM304 575h1v1h-1zM304 563h1v1h-1zM304 551h1v1h-1zM304 538h1v1h-1zM304 526h1v1h-1zM304 514h1v1h-1zM304 502h1v1h-1zM304 489h1v1h-1zM304 477h1v1h-1zM304 465h1v1h-1zM304 453h1v1h-1zM304 440h1v1h-1zM304 428h1v1h-1zM304 416h1v1h-1zM304 404h1v1h-1zM304 391h1v1h-1zM304 379h1v1h-1zM304 367h1v1h-1zM304 354h1v1h-1zM304 342h1v1h-1zM304 330h1v1h-1zM304 318h1v1h-1zM304 305h1v1h-1zM304 293h1v1h-1zM304 281h1v1h-1zM304 269h1v1h-1zM304 256h1v1h-1zM304 244h1v1h-1zM304 232h1v1h-1zM304 220h1v1h-1zM304 207h1v1h-1zM304 195h1v1h-1zM304 183h1v1h-1zM304 171h1v1h-1zM304 158h1v1h-1zM316 722h1v1h-1zM316 710h1v1h-1zM316 698h1v1h-1zM316 686h1v1h-1zM316 673h1v1h-1zM316 661h1v1h-1zM316 649h1v1h-1zM316 637h1v1h-1zM316 624h1v1h-1zM316 612h1v1h-1zM316 600h1v1h-1zM316 587h1v1h-1zM316 575h1v1h-1zM316 563h1v1h-1zM316 551h1v1h-1zM316 538h1v1h-1zM316 526h1v1h-1zM316 514h1v1h-1zM316 502h1v1h-1zM316 489h1v1h-1zM316 477h1v1h-1zM316 465h1v1h-1zM316 453h1v1h-1zM316 440h1v1h-1zM316 428h1v1h-1zM316 416h1v1h-1zM316 404h1v1h-1zM316 391h1v1h-1zM316 379h1v1h-1zM316 367h1v1h-1zM316 354h1v1h-1zM316 342h1v1h-1zM316 330h1v1h-1zM316 318h1v1h-1zM316 305h1v1h-1zM316 293h1v1h-1zM316 281h1v1h-1zM316 269h1v1h-1zM316 256h1v1h-1zM316 244h1v1h-1zM316 232h1v1h-1zM316 220h1v1h-1zM316 207h1v1h-1zM316 195h1v1h-1zM316 183h1v1h-1zM316 171h1v1h-1zM316 158h1v1h-1zM328 722h1v1h-1zM328 710h1v1h-1zM328 698h1v1h-1zM328 686h1v1h-1zM328 673h1v1h-1zM328 661h1v1h-1zM328 649h1v1h-1zM328 637h1v1h-1zM328 624h1v1h-1zM328 612h1v1h-1zM328 600h1v1h-1zM328 587h1v1h-1zM328 575h1v1h-1zM328 563h1v1h-1zM328 551h1v1h-1zM328 538h1v1h-1zM328 526h1v1h-1zM328 514h1v1h-1zM328 502h1v1h-1zM328 489h1v1h-1zM328 477h1v1h-1zM328 465h1v1h-1zM328 453h1v1h-1zM328 440h1v1h-1zM328 428h1v1h-1zM328 416h1v1h-1zM328 404h1v1h-1zM328 391h1v1h-1zM328 379h1v1h-1zM328 367h1v1h-1zM328 354h1v1h-1zM328 342h1v1h-1zM328 330h1v1h-1zM328 318h1v1h-1zM328 305h1v1h-1zM328 293h1v1h-1zM328 281h1v1h-1zM328 269h1v1h-1zM328 256h1v1h-1zM328 244h1v1h-1zM328 232h1v1h-1zM328 220h1v1h-1zM328 207h1v1h-1zM328 195h1v1h-1zM328 183h1v1h-1zM328 171h1v1h-1zM328 158h1v1h-1zM341 722h1v1h-1zM341 710h1v1h-1zM341 698h1v1h-1zM341 686h1v1h-1zM341 673h1v1h-1zM341 661h1v1h-1zM341 649h1v1h-1zM341 637h1v1h-1zM341 624h1v1h-1zM341 612h1v1h-1zM341 600h1v1h-1zM341 587h1v1h-1zM341 575h1v1h-1zM341 563h1v1h-1zM341 551h1v1h-1zM341 538h1v1h-1zM341 526h1v1h-1zM341 514h1v1h-1zM341 502h1v1h-1zM341 489h1v1h-1zM341 477h1v1h-1zM341 465h1v1h-1zM341 453h1v1h-1zM341 440h1v1h-1zM341 428h1v1h-1zM341 416h1v1h-1zM341 404h1v1h-1zM341 391h1v1h-1zM341 379h1v1h-1zM341 367h1v1h-1zM341 354h1v1h-1zM341 342h1v1h-1zM341 330h1v1h-1zM341 318h1v1h-1zM341 305h1v1h-1zM341 293h1v1h-1zM341 281h1v1h-1zM341 269h1v1h-1zM341 256h1v1h-1zM341 244h1v1h-1zM341 232h1v1h-1zM341 220h1v1h-1zM341 207h1v1h-1zM341 195h1v1h-1zM341 183h1v1h-1zM341 171h1v1h-1zM341 158h1v1h-1zM353 722h1v1h-1zM353 710h1v1h-1zM353 698h1v1h-1zM353 686h1v1h-1zM353 673h1v1h-1zM353 661h1v1h-1zM353 649h1v1h-1zM353 637h1v1h-1zM353 624h1v1h-1zM353 612h1v1h-1zM353 600h1v1h-1zM353 587h1v1h-1zM353 575h1v1h-1zM353 563h1v1h-1zM353 551h1v1h-1zM353 538h1v1h-1zM353 526h1v1h-1zM353 514h1v1h-1zM353 502h1v1h-1zM353 489h1v1h-1zM353 477h1v1h-1zM353 465h1v1h-1zM353 453h1v1h-1zM353 440h1v1h-1zM353 428h1v1h-1zM353 416h1v1h-1zM353 404h1v1h-1zM353 391h1v1h-1zM353 379h1v1h-1zM353 367h1v1h-1zM353 354h1v1h-1zM353 342h1v1h-1zM353 330h1v1h-1zM353 318h1v1h-1zM353 305h1v1h-1zM353 293h1v1h-1zM353 281h1v1h-1zM353 269h1v1h-1zM353 256h1v1h-1zM353 244h1v1h-1zM353 232h1v1h-1zM353 220h1v1h-1zM353 207h1v1h-1zM353 195h1v1h-1zM353 183h1v1h-1zM353 171h1v1h-1zM353 158h1v1h-1zM365 722h1v1h-1zM365 710h1v1h-1zM365 698h1v1h-1zM365 686h1v1h-1zM365 673h1v1h-1zM365 661h1v1h-1zM365 649h1v1h-1zM365 637h1v1h-1zM365 624h1v1h-1zM365 612h1v1h-1zM365 600h1v1h-1zM365 587h1v1h-1zM365 575h1v1h-1zM365 563h1v1h-1zM365 551h1v1h-1zM365 538h1v1h-1zM365 526h1v1h-1zM365 514h1v1h-1zM365 502h1v1h-1zM365 489h1v1h-1zM365 477h1v1h-1zM365 465h1v1h-1zM365 453h1v1h-1zM365 440h1v1h-1zM365 428h1v1h-1zM365 416h1v1h-1zM365 404h1v1h-1zM365 391h1v1h-1zM365 379h1v1h-1zM365 367h1v1h-1zM365 354h1v1h-1zM365 342h1v1h-1zM365 330h1v1h-1zM365 318h1v1h-1zM365 305h1v1h-1zM365 293h1v1h-1zM365 281h1v1h-1zM365 269h1v1h-1zM365 256h1v1h-1zM365 244h1v1h-1zM365 232h1v1h-1zM365 220h1v1h-1zM365 207h1v1h-1zM365 195h1v1h-1zM365 183h1v1h-1zM365 171h1v1h-1zM365 158h1v1h-1zM377 722h1v1h-1zM377 710h1v1h-1zM377 698h1v1h-1zM377 686h1v1h-1zM377 673h1v1h-1zM377 661h1v1h-1zM377 649h1v1h-1zM377 637h1v1h-1zM377 624h1v1h-1zM377 612h1v1h-1zM377 600h1v1h-1zM377 587h1v1h-1zM377 575h1v1h-1zM377 563h1v1h-1zM377 551h1v1h-1zM377 538h1v1h-1zM377 526h1v1h-1zM377 514h1v1h-1zM377 502h1v1h-1zM377 489h1v1h-1zM377 477h1v1h-1zM377 465h1v1h-1zM377 453h1v1h-1zM377 440h1v1h-1zM377 428h1v1h-1zM377 416h1v1h-1zM377 404h1v1h-1zM377 391h1v1h-1zM377 379h1v1h-1zM377 367h1v1h-1zM377 354h1v1h-1zM377 342h1v1h-1zM377 330h1v1h-1zM377 318h1v1h-1zM377 305h1v1h-1zM377 293h1v1h-1zM377 281h1v1h-1zM377 269h1v1h-1zM377 256h1v1h-1zM377 244h1v1h-1zM377 232h1v1h-1zM377 220h1v1h-1zM377 207h1v1h-1zM377 195h1v1h-1zM377 183h1v1h-1zM377 171h1v1h-1zM377 158h1v1h-1zM390 722h1v1h-1zM390 710h1v1h-1zM390 698h1v1h-1zM390 686h1v1h-1zM390 673h1v1h-1zM390 661h1v1h-1zM390 649h1v1h-1zM390 637h1v1h-1zM390 624h1v1h-1zM390 612h1v1h-1zM390 600h1v1h-1zM390 587h1v1h-1zM390 575h1v1h-1zM390 563h1v1h-1zM390 551h1v1h-1zM390 538h1v1h-1zM390 526h1v1h-1zM390 514h1v1h-1zM390 502h1v1h-1zM390 489h1v1h-1zM390 477h1v1h-1zM390 465h1v1h-1zM390 453h1v1h-1zM390 440h1v1h-1zM390 428h1v1h-1zM390 416h1v1h-1zM390 404h1v1h-1zM390 391h1v1h-1zM390 379h1v1h-1zM390 367h1v1h-1zM390 354h1v1h-1zM390 342h1v1h-1zM390 330h1v1h-1zM390 318h1v1h-1zM390 305h1v1h-1zM390 293h1v1h-1zM390 281h1v1h-1zM390 269h1v1h-1zM390 256h1v1h-1zM390 244h1v1h-1zM390 232h1v1h-1zM390 220h1v1h-1zM390 207h1v1h-1zM390 195h1v1h-1zM390 183h1v1h-1zM390 171h1v1h-1zM390 158h1v1h-1zM402 722h1v1h-1zM402 710h1v1h-1zM402 698h1v1h-1zM402 686h1v1h-1zM402 673h1v1h-1zM402 661h1v1h-1zM402 649h1v1h-1zM402 637h1v1h-1zM402 624h1v1h-1zM402 612h1v1h-1zM402 600h1v1h-1zM402 587h1v1h-1zM402 575h1v1h-1zM402 563h1v1h-1zM402 551h1v1h-1zM402 538h1v1h-1zM402 526h1v1h-1zM402 514h1v1h-1zM402 502h1v1h-1zM402 489h1v1h-1zM402 477h1v1h-1zM402 465h1v1h-1zM402 453h1v1h-1zM402 440h1v1h-1zM402 428h1v1h-1zM402 416h1v1h-1zM402 404h1v1h-1zM402 391h1v1h-1zM402 379h1v1h-1zM402 367h1v1h-1zM402 354h1v1h-1zM402 342h1v1h-1zM402 330h1v1h-1zM402 318h1v1h-1zM402 305h1v1h-1zM402 293h1v1h-1zM402 281h1v1h-1zM402 269h1v1h-1zM402 256h1v1h-1zM402 244h1v1h-1zM402 232h1v1h-1zM402 220h1v1h-1zM402 207h1v1h-1zM402 195h1v1h-1zM402 183h1v1h-1zM402 171h1v1h-1zM402 158h1v1h-1zM414 722h1v1h-1zM414 710h1v1h-1zM414 698h1v1h-1zM414 686h1v1h-1zM414 673h1v1h-1zM414 661h1v1h-1zM414 649h1v1h-1zM414 637h1v1h-1zM414 624h1v1h-1zM414 612h1v1h-1zM414 600h1v1h-1zM414 587h1v1h-1zM414 575h1v1h-1zM414 563h1v1h-1zM414 551h1v1h-1zM414 538h1v1h-1zM414 526h1v1h-1zM414 514h1v1h-1zM414 502h1v1h-1zM414 489h1v1h-1zM414 477h1v1h-1zM414 465h1v1h-1zM414 453h1v1h-1zM414 440h1v1h-1zM414 428h1v1h-1zM414 416h1v1h-1zM414 404h1v1h-1zM414 391h1v1h-1zM414 379h1v1h-1zM414 367h1v1h-1zM414 354h1v1h-1zM414 342h1v1h-1zM414 330h1v1h-1zM414 318h1v1h-1zM414 305h1v1h-1zM414 293h1v1h-1zM414 281h1v1h-1zM414 269h1v1h-1zM414 256h1v1h-1zM414 244h1v1h-1zM414 232h1v1h-1zM414 220h1v1h-1zM414 207h1v1h-1zM414 195h1v1h-1zM414 183h1v1h-1zM414 171h1v1h-1zM414 158h1v1h-1zM427 722h1v1h-1zM427 710h1v1h-1zM427 698h1v1h-1zM427 686h1v1h-1zM427 673h1v1h-1zM427 661h1v1h-1zM427 649h1v1h-1zM427 637h1v1h-1zM427 624h1v1h-1zM427 612h1v1h-1zM427 600h1v1h-1zM427 587h1v1h-1zM427 575h1v1h-1zM427 563h1v1h-1zM427 551h1v1h-1zM427 538h1v1h-1zM427 526h1v1h-1zM427 514h1v1h-1zM427 502h1v1h-1zM427 489h1v1h-1zM427 477h1v1h-1zM427 465h1v1h-1zM427 453h1v1h-1zM427 440h1v1h-1zM427 428h1v1h-1zM427 416h1v1h-1zM427 404h1v1h-1zM427 391h1v1h-1zM427 379h1v1h-1zM427 367h1v1h-1zM427 354h1v1h-1zM427 342h1v1h-1zM427 330h1v1h-1zM427 318h1v1h-1zM427 305h1v1h-1zM427 293h1v1h-1zM427 281h1v1h-1zM427 269h1v1h-1zM427 256h1v1h-1zM427 244h1v1h-1zM427 232h1v1h-1zM427 220h1v1h-1zM427 207h1v1h-1zM427 195h1v1h-1zM427 183h1v1h-1zM427 171h1v1h-1zM427 158h1v1h-1zM439 722h1v1h-1zM439 710h1v1h-1zM439 698h1v1h-1zM439 686h1v1h-1zM439 673h1v1h-1zM439 661h1v1h-1zM439 649h1v1h-1zM439 637h1v1h-1zM439 624h1v1h-1zM439 612h1v1h-1zM439 600h1v1h-1zM439 587h1v1h-1zM439 575h1v1h-1zM439 563h1v1h-1zM439 551h1v1h-1zM439 538h1v1h-1zM439 526h1v1h-1zM439 514h1v1h-1zM439 502h1v1h-1zM439 489h1v1h-1zM439 477h1v1h-1zM439 465h1v1h-1zM439 453h1v1h-1zM439 440h1v1h-1zM439 428h1v1h-1zM439 416h1v1h-1zM439 404h1v1h-1zM439 391h1v1h-1zM439 379h1v1h-1zM439 367h1v1h-1zM439 354h1v1h-1zM439 342h1v1h-1zM439 330h1v1h-1zM439 318h1v1h-1zM439 305h1v1h-1zM439 293h1v1h-1zM439 281h1v1h-1zM439 269h1v1h-1zM439 256h1v1h-1zM439 244h1v1h-1zM439 232h1v1h-1zM439 220h1v1h-1zM439 207h1v1h-1zM439 195h1v1h-1zM439 183h1v1h-1zM439 171h1v1h-1zM439 158h1v1h-1zM451 722h1v1h-1zM451 710h1v1h-1zM451 698h1v1h-1zM451 686h1v1h-1zM451 673h1v1h-1zM451 661h1v1h-1zM451 649h1v1h-1zM451 637h1v1h-1zM451 624h1v1h-1zM451 612h1v1h-1zM451 600h1v1h-1zM451 587h1v1h-1zM451 575h1v1h-1zM451 563h1v1h-1zM451 551h1v1h-1zM451 538h1v1h-1zM451 526h1v1h-1zM451 514h1v1h-1zM451 502h1v1h-1zM451 489h1v1h-1zM451 477h1v1h-1zM451 465h1v1h-1zM451 453h1v1h-1zM451 440h1v1h-1zM451 428h1v1h-1zM451 416h1v1h-1zM451 404h1v1h-1zM451 391h1v1h-1zM451 379h1v1h-1zM451 367h1v1h-1zM451 354h1v1h-1zM451 342h1v1h-1zM451 330h1v1h-1zM451 318h1v1h-1zM451 305h1v1h-1zM451 293h1v1h-1zM451 281h1v1h-1zM451 269h1v1h-1zM451 256h1v1h-1zM451 244h1v1h-1zM451 232h1v1h-1zM451 220h1v1h-1zM451 207h1v1h-1zM451 195h1v1h-1zM451 183h1v1h-1zM451 171h1v1h-1zM451 158h1v1h-1zM463 722h1v1h-1zM463 710h1v1h-1zM463 698h1v1h-1zM463 686h1v1h-1zM463 673h1v1h-1zM463 661h1v1h-1zM463 649h1v1h-1zM463 637h1v1h-1zM463 624h1v1h-1zM463 612h1v1h-1zM463 600h1v1h-1zM463 587h1v1h-1zM463 575h1v1h-1zM463 563h1v1h-1zM463 551h1v1h-1zM463 538h1v1h-1zM463 526h1v1h-1zM463 514h1v1h-1zM463 502h1v1h-1zM463 489h1v1h-1zM463 477h1v1h-1zM463 465h1v1h-1zM463 453h1v1h-1zM463 440h1v1h-1zM463 428h1v1h-1zM463 416h1v1h-1zM463 404h1v1h-1zM463 391h1v1h-1zM463 379h1v1h-1zM463 367h1v1h-1zM463 354h1v1h-1zM463 342h1v1h-1zM463 330h1v1h-1zM463 318h1v1h-1zM463 305h1v1h-1zM463 293h1v1h-1zM463 281h1v1h-1zM463 269h1v1h-1zM463 256h1v1h-1zM463 244h1v1h-1zM463 232h1v1h-1zM463 220h1v1h-1zM463 207h1v1h-1zM463 195h1v1h-1zM463 183h1v1h-1zM463 171h1v1h-1zM463 158h1v1h-1zM476 722h1v1h-1zM476 710h1v1h-1zM476 698h1v1h-1zM476 686h1v1h-1zM476 673h1v1h-1zM476 661h1v1h-1zM476 649h1v1h-1zM476 637h1v1h-1zM476 624h1v1h-1zM476 612h1v1h-1zM476 600h1v1h-1zM476 587h1v1h-1zM476 575h1v1h-1zM476 563h1v1h-1zM476 551h1v1h-1zM476 538h1v1h-1zM476 526h1v1h-1zM476 514h1v1h-1zM476 502h1v1h-1zM476 489h1v1h-1zM476 477h1v1h-1zM476 465h1v1h-1zM476 453h1v1h-1zM476 440h1v1h-1zM476 428h1v1h-1zM476 416h1v1h-1zM476 404h1v1h-1zM476 391h1v1h-1zM476 379h1v1h-1zM476 367h1v1h-1zM476 354h1v1h-1zM476 342h1v1h-1zM476 330h1v1h-1zM476 318h1v1h-1zM476 305h1v1h-1zM476 293h1v1h-1zM476 281h1v1h-1zM476 269h1v1h-1zM476 256h1v1h-1zM476 244h1v1h-1zM476 232h1v1h-1zM476 220h1v1h-1zM476 207h1v1h-1zM476 195h1v1h-1zM476 183h1v1h-1zM476 171h1v1h-1zM476 158h1v1h-1zM488 722h1v1h-1zM488 710h1v1h-1zM488 698h1v1h-1zM488 686h1v1h-1zM488 673h1v1h-1zM488 661h1v1h-1zM488 649h1v1h-1zM488 637h1v1h-1zM488 624h1v1h-1zM488 612h1v1h-1zM488 600h1v1h-1zM488 587h1v1h-1zM488 575h1v1h-1zM488 563h1v1h-1zM488 551h1v1h-1zM488 538h1v1h-1zM488 526h1v1h-1zM488 514h1v1h-1zM488 502h1v1h-1zM488 489h1v1h-1zM488 477h1v1h-1zM488 465h1v1h-1zM488 453h1v1h-1zM488 440h1v1h-1zM488 428h1v1h-1zM488 416h1v1h-1zM488 404h1v1h-1zM488 391h1v1h-1zM488 379h1v1h-1zM488 367h1v1h-1zM488 354h1v1h-1zM488 342h1v1h-1zM488 330h1v1h-1zM488 318h1v1h-1zM488 305h1v1h-1zM488 293h1v1h-1zM488 281h1v1h-1zM488 269h1v1h-1zM488 256h1v1h-1zM488 244h1v1h-1zM488 232h1v1h-1zM488 220h1v1h-1zM488 207h1v1h-1zM488 195h1v1h-1zM488 183h1v1h-1zM488 171h1v1h-1zM488 158h1v1h-1zM500 722h1v1h-1zM500 710h1v1h-1zM500 698h1v1h-1zM500 686h1v1h-1zM500 673h1v1h-1zM500 661h1v1h-1zM500 649h1v1h-1zM500 637h1v1h-1zM500 624h1v1h-1zM500 612h1v1h-1zM500 600h1v1h-1zM500 587h1v1h-1zM500 575h1v1h-1zM500 563h1v1h-1zM500 551h1v1h-1zM500 538h1v1h-1zM500 526h1v1h-1zM500 514h1v1h-1zM500 502h1v1h-1zM500 489h1v1h-1zM500 477h1v1h-1zM500 465h1v1h-1zM500 453h1v1h-1zM500 440h1v1h-1zM500 428h1v1h-1zM500 416h1v1h-1zM500 404h1v1h-1zM500 391h1v1h-1zM500 379h1v1h-1zM500 367h1v1h-1zM500 354h1v1h-1zM500 342h1v1h-1zM500 330h1v1h-1zM500 318h1v1h-1zM500 305h1v1h-1zM500 293h1v1h-1zM500 281h1v1h-1zM500 269h1v1h-1zM500 256h1v1h-1zM500 244h1v1h-1zM500 232h1v1h-1zM500 220h1v1h-1zM500 207h1v1h-1zM500 195h1v1h-1zM500 183h1v1h-1zM500 171h1v1h-1zM500 158h1v1h-1zM512 722h1v1h-1zM512 710h1v1h-1zM512 698h1v1h-1zM512 686h1v1h-1zM512 673h1v1h-1zM512 661h1v1h-1zM512 649h1v1h-1zM512 637h1v1h-1zM512 624h1v1h-1zM512 612h1v1h-1zM512 600h1v1h-1zM512 587h1v1h-1zM512 575h1v1h-1zM512 563h1v1h-1zM512 551h1v1h-1zM512 538h1v1h-1zM512 526h1v1h-1zM512 514h1v1h-1zM512 502h1v1h-1zM512 489h1v1h-1zM512 477h1v1h-1zM512 465h1v1h-1zM512 453h1v1h-1zM512 440h1v1h-1zM512 428h1v1h-1zM512 416h1v1h-1zM512 404h1v1h-1zM512 391h1v1h-1zM512 379h1v1h-1zM512 367h1v1h-1zM512 354h1v1h-1zM512 342h1v1h-1zM512 330h1v1h-1zM512 318h1v1h-1zM512 305h1v1h-1zM512 293h1v1h-1zM512 281h1v1h-1zM512 269h1v1h-1zM512 256h1v1h-1zM512 244h1v1h-1zM512 232h1v1h-1zM512 220h1v1h-1zM512 207h1v1h-1zM512 195h1v1h-1zM512 183h1v1h-1zM512 171h1v1h-1zM512 158h1v1h-1zM525 722h1v1h-1zM525 710h1v1h-1zM525 698h1v1h-1zM525 686h1v1h-1zM525 673h1v1h-1zM525 661h1v1h-1zM525 649h1v1h-1zM525 637h1v1h-1zM525 624h1v1h-1zM525 612h1v1h-1zM525 600h1v1h-1zM525 587h1v1h-1zM525 575h1v1h-1zM525 563h1v1h-1zM525 551h1v1h-1zM525 538h1v1h-1zM525 526h1v1h-1zM525 514h1v1h-1zM525 502h1v1h-1zM525 489h1v1h-1zM525 477h1v1h-1zM525 465h1v1h-1zM525 453h1v1h-1zM525 440h1v1h-1zM525 428h1v1h-1zM525 416h1v1h-1zM525 404h1v1h-1zM525 391h1v1h-1zM525 379h1v1h-1zM525 367h1v1h-1zM525 354h1v1h-1zM525 342h1v1h-1zM525 330h1v1h-1zM525 318h1v1h-1zM525 305h1v1h-1zM525 293h1v1h-1zM525 281h1v1h-1zM525 269h1v1h-1zM525 256h1v1h-1zM525 244h1v1h-1zM525 232h1v1h-1zM525 220h1v1h-1zM525 207h1v1h-1zM525 195h1v1h-1zM525 183h1v1h-1zM525 171h1v1h-1zM525 158h1v1h-1zM537 722h1v1h-1zM537 710h1v1h-1zM537 698h1v1h-1zM537 686h1v1h-1zM537 673h1v1h-1zM537 661h1v1h-1zM537 649h1v1h-1zM537 637h1v1h-1zM537 624h1v1h-1zM537 612h1v1h-1zM537 600h1v1h-1zM537 587h1v1h-1zM537 575h1v1h-1zM537 563h1v1h-1zM537 551h1v1h-1zM537 538h1v1h-1zM537 526h1v1h-1zM537 514h1v1h-1zM537 502h1v1h-1zM537 489h1v1h-1zM537 477h1v1h-1zM537 465h1v1h-1zM537 453h1v1h-1zM537 440h1v1h-1zM537 428h1v1h-1zM537 416h1v1h-1zM537 404h1v1h-1zM537 391h1v1h-1zM537 379h1v1h-1zM537 367h1v1h-1zM537 354h1v1h-1zM537 342h1v1h-1zM537 330h1v1h-1zM537 318h1v1h-1zM537 305h1v1h-1zM537 293h1v1h-1zM537 281h1v1h-1zM537 269h1v1h-1zM537 256h1v1h-1zM537 244h1v1h-1zM537 232h1v1h-1zM537 220h1v1h-1zM537 207h1v1h-1zM537 195h1v1h-1zM537 183h1v1h-1zM537 171h1v1h-1zM537 158h1v1h-1zM549 722h1v1h-1zM549 710h1v1h-1zM549 698h1v1h-1zM549 686h1v1h-1zM549 673h1v1h-1zM549 661h1v1h-1zM549 649h1v1h-1zM549 637h1v1h-1zM549 624h1v1h-1zM549 612h1v1h-1zM549 600h1v1h-1zM549 587h1v1h-1zM549 575h1v1h-1zM549 563h1v1h-1zM549 551h1v1h-1zM549 538h1v1h-1zM549 526h1v1h-1zM549 514h1v1h-1zM549 502h1v1h-1zM549 489h1v1h-1zM549 477h1v1h-1zM549 465h1v1h-1zM549 453h1v1h-1zM549 440h1v1h-1zM549 428h1v1h-1zM549 416h1v1h-1zM549 404h1v1h-1zM549 391h1v1h-1zM549 379h1v1h-1zM549 367h1v1h-1zM549 354h1v1h-1zM549 342h1v1h-1zM549 330h1v1h-1zM549 318h1v1h-1zM549 305h1v1h-1zM549 293h1v1h-1zM549 281h1v1h-1zM549 269h1v1h-1zM549 256h1v1h-1zM549 244h1v1h-1zM549 232h1v1h-1zM549 220h1v1h-1zM549 207h1v1h-1zM549 195h1v1h-1zM549 183h1v1h-1zM549 171h1v1h-1zM549 158h1v1h-1zM561 722h1v1h-1zM561 710h1v1h-1zM561 698h1v1h-1zM561 686h1v1h-1zM561 673h1v1h-1zM561 661h1v1h-1zM561 649h1v1h-1zM561 637h1v1h-1zM561 624h1v1h-1zM561 612h1v1h-1zM561 600h1v1h-1zM561 587h1v1h-1zM561 575h1v1h-1zM561 563h1v1h-1zM561 551h1v1h-1zM561 538h1v1h-1zM561 526h1v1h-1zM561 514h1v1h-1zM561 502h1v1h-1zM561 489h1v1h-1zM561 477h1v1h-1zM561 465h1v1h-1zM561 453h1v1h-1zM561 440h1v1h-1zM561 428h1v1h-1zM561 416h1v1h-1zM561 404h1v1h-1zM561 391h1v1h-1zM561 379h1v1h-1zM561 367h1v1h-1zM561 354h1v1h-1zM561 342h1v1h-1zM561 330h1v1h-1zM561 318h1v1h-1zM561 305h1v1h-1zM561 293h1v1h-1zM561 281h1v1h-1zM561 269h1v1h-1zM561 256h1v1h-1zM561 244h1v1h-1zM561 232h1v1h-1zM561 220h1v1h-1zM561 207h1v1h-1zM561 195h1v1h-1zM561 183h1v1h-1zM561 171h1v1h-1zM561 158h1v1h-1zM574 722h1v1h-1zM574 710h1v1h-1zM574 698h1v1h-1zM574 686h1v1h-1zM574 673h1v1h-1zM574 661h1v1h-1zM574 649h1v1h-1zM574 637h1v1h-1zM574 624h1v1h-1zM574 612h1v1h-1zM574 600h1v1h-1zM574 587h1v1h-1zM574 575h1v1h-1zM574 563h1v1h-1zM574 551h1v1h-1zM574 538h1v1h-1zM574 526h1v1h-1zM574 514h1v1h-1zM574 502h1v1h-1zM574 489h1v1h-1zM574 477h1v1h-1zM574 465h1v1h-1zM574 453h1v1h-1zM574 440h1v1h-1zM574 428h1v1h-1zM574 416h1v1h-1zM574 404h1v1h-1zM574 391h1v1h-1zM574 379h1v1h-1zM574 367h1v1h-1zM574 354h1v1h-1zM574 342h1v1h-1zM574 330h1v1h-1zM574 318h1v1h-1zM574 305h1v1h-1zM574 293h1v1h-1zM574 281h1v1h-1zM574 269h1v1h-1zM574 256h1v1h-1zM574 244h1v1h-1zM574 232h1v1h-1zM574 220h1v1h-1zM574 207h1v1h-1zM574 195h1v1h-1zM574 183h1v1h-1zM574 171h1v1h-1zM574 158h1v1h-1zM586 722h1v1h-1zM586 710h1v1h-1zM586 698h1v1h-1zM586 686h1v1h-1zM586 673h1v1h-1zM586 661h1v1h-1zM586 649h1v1h-1zM586 637h1v1h-1zM586 624h1v1h-1zM586 612h1v1h-1zM586 600h1v1h-1zM586 587h1v1h-1zM586 575h1v1h-1zM586 563h1v1h-1zM586 551h1v1h-1zM586 538h1v1h-1zM586 526h1v1h-1zM586 514h1v1h-1zM586 502h1v1h-1zM586 489h1v1h-1zM586 477h1v1h-1zM586 465h1v1h-1zM586 453h1v1h-1zM586 440h1v1h-1zM586 428h1v1h-1zM586 416h1v1h-1zM586 404h1v1h-1zM586 391h1v1h-1zM586 379h1v1h-1zM586 367h1v1h-1zM586 354h1v1h-1zM586 342h1v1h-1zM586 330h1v1h-1zM586 318h1v1h-1zM586 305h1v1h-1zM586 293h1v1h-1zM586 281h1v1h-1zM586 269h1v1h-1zM586 256h1v1h-1zM586 244h1v1h-1zM586 232h1v1h-1zM586 220h1v1h-1zM586 207h1v1h-1zM586 195h1v1h-1zM586 183h1v1h-1zM586 171h1v1h-1zM586 158h1v1h-1zM598 722h1v1h-1zM598 710h1v1h-1zM598 698h1v1h-1zM598 686h1v1h-1zM598 673h1v1h-1zM598 661h1v1h-1zM598 649h1v1h-1zM598 637h1v1h-1zM598 624h1v1h-1zM598 612h1v1h-1zM598 600h1v1h-1zM598 587h1v1h-1zM598 575h1v1h-1zM598 563h1v1h-1zM598 551h1v1h-1zM598 538h1v1h-1zM598 526h1v1h-1zM598 514h1v1h-1zM598 502h1v1h-1zM598 489h1v1h-1zM598 477h1v1h-1zM598 465h1v1h-1zM598 453h1v1h-1zM598 440h1v1h-1zM598 428h1v1h-1zM598 416h1v1h-1zM598 404h1v1h-1zM598 391h1v1h-1zM598 379h1v1h-1zM598 367h1v1h-1zM598 354h1v1h-1zM598 342h1v1h-1zM598 330h1v1h-1zM598 318h1v1h-1zM598 305h1v1h-1zM598 293h1v1h-1zM598 281h1v1h-1zM598 269h1v1h-1zM598 256h1v1h-1zM598 244h1v1h-1zM598 232h1v1h-1zM598 220h1v1h-1zM598 207h1v1h-1zM598 195h1v1h-1zM598 183h1v1h-1zM598 171h1v1h-1zM598 158h1v1h-1zM611 722h1v1h-1zM611 710h1v1h-1zM611 698h1v1h-1zM611 686h1v1h-1zM611 673h1v1h-1zM611 661h1v1h-1zM611 649h1v1h-1zM611 637h1v1h-1zM611 624h1v1h-1zM611 612h1v1h-1zM611 600h1v1h-1zM611 587h1v1h-1zM611 575h1v1h-1zM611 563h1v1h-1zM611 551h1v1h-1zM611 538h1v1h-1zM611 526h1v1h-1zM611 514h1v1h-1zM611 502h1v1h-1zM611 489h1v1h-1zM611 477h1v1h-1zM611 465h1v1h-1zM611 453h1v1h-1zM611 440h1v1h-1zM611 428h1v1h-1zM611 416h1v1h-1zM611 404h1v1h-1zM611 391h1v1h-1zM611 379h1v1h-1zM611 367h1v1h-1zM611 354h1v1h-1zM611 342h1v1h-1zM611 330h1v1h-1zM611 318h1v1h-1zM611 305h1v1h-1zM611 293h1v1h-1zM611 281h1v1h-1zM611 269h1v1h-1zM611 256h1v1h-1zM611 244h1v1h-1zM611 232h1v1h-1zM611 220h1v1h-1zM611 207h1v1h-1zM611 195h1v1h-1zM611 183h1v1h-1zM611 171h1v1h-1zM611 158h1v1h-1zM623 722h1v1h-1zM623 710h1v1h-1zM623 698h1v1h-1zM623 686h1v1h-1zM623 673h1v1h-1zM623 661h1v1h-1zM623 649h1v1h-1zM623 637h1v1h-1zM623 624h1v1h-1zM623 612h1v1h-1zM623 600h1v1h-1zM623 587h1v1h-1zM623 575h1v1h-1zM623 563h1v1h-1zM623 551h1v1h-1zM623 538h1v1h-1zM623 526h1v1h-1zM623 514h1v1h-1zM623 502h1v1h-1zM623 489h1v1h-1zM623 477h1v1h-1zM623 465h1v1h-1zM623 453h1v1h-1zM623 440h1v1h-1zM623 428h1v1h-1zM623 416h1v1h-1zM623 404h1v1h-1zM623 391h1v1h-1zM623 379h1v1h-1zM623 367h1v1h-1zM623 354h1v1h-1zM623 342h1v1h-1zM623 330h1v1h-1zM623 318h1v1h-1zM623 305h1v1h-1zM623 293h1v1h-1zM623 281h1v1h-1zM623 269h1v1h-1zM623 256h1v1h-1zM623 244h1v1h-1zM623 232h1v1h-1zM623 220h1v1h-1zM623 207h1v1h-1zM623 195h1v1h-1zM623 183h1v1h-1zM623 171h1v1h-1zM623 158h1v1h-1zM635 722h1v1h-1zM635 710h1v1h-1zM635 698h1v1h-1zM635 686h1v1h-1zM635 673h1v1h-1zM635 661h1v1h-1zM635 649h1v1h-1zM635 637h1v1h-1zM635 624h1v1h-1zM635 612h1v1h-1zM635 600h1v1h-1zM635 587h1v1h-1zM635 575h1v1h-1zM635 563h1v1h-1zM635 551h1v1h-1zM635 538h1v1h-1zM635 526h1v1h-1zM635 514h1v1h-1zM635 502h1v1h-1zM635 489h1v1h-1zM635 477h1v1h-1zM635 465h1v1h-1zM635 453h1v1h-1zM635 440h1v1h-1zM635 428h1v1h-1zM635 416h1v1h-1zM635 404h1v1h-1zM635 391h1v1h-1zM635 379h1v1h-1zM635 367h1v1h-1zM635 354h1v1h-1zM635 342h1v1h-1zM635 330h1v1h-1zM635 318h1v1h-1zM635 305h1v1h-1zM635 293h1v1h-1zM635 281h1v1h-1zM635 269h1v1h-1zM635 256h1v1h-1zM635 244h1v1h-1zM635 232h1v1h-1zM635 220h1v1h-1zM635 207h1v1h-1zM635 195h1v1h-1zM635 183h1v1h-1zM635 171h1v1h-1zM635 158h1v1h-1zM647 722h1v1h-1zM647 710h1v1h-1zM647 698h1v1h-1zM647 686h1v1h-1zM647 673h1v1h-1zM647 661h1v1h-1zM647 649h1v1h-1zM647 637h1v1h-1zM647 624h1v1h-1zM647 612h1v1h-1zM647 600h1v1h-1zM647 587h1v1h-1zM647 575h1v1h-1zM647 563h1v1h-1zM647 551h1v1h-1zM647 538h1v1h-1zM647 526h1v1h-1zM647 514h1v1h-1zM647 502h1v1h-1zM647 489h1v1h-1zM647 477h1v1h-1zM647 465h1v1h-1zM647 453h1v1h-1zM647 440h1v1h-1zM647 428h1v1h-1zM647 416h1v1h-1zM647 404h1v1h-1zM647 391h1v1h-1zM647 379h1v1h-1zM647 367h1v1h-1zM647 354h1v1h-1zM647 342h1v1h-1zM647 330h1v1h-1zM647 318h1v1h-1zM647 305h1v1h-1zM647 293h1v1h-1zM647 281h1v1h-1zM647 269h1v1h-1zM647 256h1v1h-1zM647 244h1v1h-1zM647 232h1v1h-1zM647 220h1v1h-1zM647 207h1v1h-1zM647 195h1v1h-1zM647 183h1v1h-1zM647 171h1v1h-1zM647 158h1v1h-1zM660 722h1v1h-1zM660 710h1v1h-1zM660 698h1v1h-1zM660 686h1v1h-1zM660 673h1v1h-1zM660 661h1v1h-1zM660 649h1v1h-1zM660 637h1v1h-1zM660 624h1v1h-1zM660 612h1v1h-1zM660 600h1v1h-1zM660 587h1v1h-1zM660 575h1v1h-1zM660 563h1v1h-1zM660 551h1v1h-1zM660 538h1v1h-1zM660 526h1v1h-1zM660 514h1v1h-1zM660 502h1v1h-1zM660 489h1v1h-1zM660 477h1v1h-1zM660 465h1v1h-1zM660 453h1v1h-1zM660 440h1v1h-1zM660 428h1v1h-1zM660 416h1v1h-1zM660 404h1v1h-1zM660 391h1v1h-1zM660 379h1v1h-1zM660 367h1v1h-1zM660 354h1v1h-1zM660 342h1v1h-1zM660 330h1v1h-1zM660 318h1v1h-1zM660 305h1v1h-1zM660 293h1v1h-1zM660 281h1v1h-1zM660 269h1v1h-1zM660 256h1v1h-1zM660 244h1v1h-1zM660 232h1v1h-1zM660 220h1v1h-1zM660 207h1v1h-1zM660 195h1v1h-1zM660 183h1v1h-1zM660 171h1v1h-1zM660 158h1v1h-1zM672 722h1v1h-1zM672 710h1v1h-1zM672 698h1v1h-1zM672 686h1v1h-1zM672 673h1v1h-1zM672 661h1v1h-1zM672 649h1v1h-1zM672 637h1v1h-1zM672 624h1v1h-1zM672 612h1v1h-1zM672 600h1v1h-1zM672 587h1v1h-1zM672 575h1v1h-1zM672 563h1v1h-1zM672 551h1v1h-1zM672 538h1v1h-1zM672 526h1v1h-1zM672 514h1v1h-1zM672 502h1v1h-1zM672 489h1v1h-1zM672 477h1v1h-1zM672 465h1v1h-1zM672 453h1v1h-1zM672 440h1v1h-1zM672 428h1v1h-1zM672 416h1v1h-1zM672 404h1v1h-1zM672 391h1v1h-1zM672 379h1v1h-1zM672 367h1v1h-1zM672 354h1v1h-1zM672 342h1v1h-1zM672 330h1v1h-1zM672 318h1v1h-1zM672 305h1v1h-1zM672 293h1v1h-1zM672 281h1v1h-1zM672 269h1v1h-1zM672 256h1v1h-1zM672 244h1v1h-1zM672 232h1v1h-1zM672 220h1v1h-1zM672 207h1v1h-1zM672 195h1v1h-1zM672 183h1v1h-1zM672 171h1v1h-1zM672 158h1v1h-1zM684 722h1v1h-1zM684 710h1v1h-1zM684 698h1v1h-1zM684 686h1v1h-1zM684 673h1v1h-1zM684 661h1v1h-1zM684 649h1v1h-1zM684 637h1v1h-1zM684 624h1v1h-1zM684 612h1v1h-1zM684 600h1v1h-1zM684 587h1v1h-1zM684 575h1v1h-1zM684 563h1v1h-1zM684 551h1v1h-1zM684 538h1v1h-1zM684 526h1v1h-1zM684 514h1v1h-1zM684 502h1v1h-1zM684 489h1v1h-1zM684 477h1v1h-1zM684 465h1v1h-1zM684 453h1v1h-1zM684 440h1v1h-1zM684 428h1v1h-1zM684 416h1v1h-1zM684 404h1v1h-1zM684 391h1v1h-1zM684 379h1v1h-1zM684 367h1v1h-1zM684 354h1v1h-1zM684 342h1v1h-1zM684 330h1v1h-1zM684 318h1v1h-1zM684 305h1v1h-1zM684 293h1v1h-1zM684 281h1v1h-1zM684 269h1v1h-1zM684 256h1v1h-1zM684 244h1v1h-1zM684 232h1v1h-1zM684 220h1v1h-1zM684 207h1v1h-1zM684 195h1v1h-1zM684 183h1v1h-1zM684 171h1v1h-1zM684 158h1v1h-1zM696 722h1v1h-1zM696 710h1v1h-1zM696 698h1v1h-1zM696 686h1v1h-1zM696 673h1v1h-1zM696 661h1v1h-1zM696 649h1v1h-1zM696 637h1v1h-1zM696 624h1v1h-1zM696 612h1v1h-1zM696 600h1v1h-1zM696 587h1v1h-1zM696 575h1v1h-1zM696 563h1v1h-1zM696 551h1v1h-1zM696 538h1v1h-1zM696 526h1v1h-1zM696 514h1v1h-1zM696 502h1v1h-1zM696 489h1v1h-1zM696 477h1v1h-1zM696 465h1v1h-1zM696 453h1v1h-1zM696 440h1v1h-1zM696 428h1v1h-1zM696 416h1v1h-1zM696 404h1v1h-1zM696 391h1v1h-1zM696 379h1v1h-1zM696 367h1v1h-1zM696 354h1v1h-1zM696 342h1v1h-1zM696 330h1v1h-1zM696 318h1v1h-1zM696 305h1v1h-1zM696 293h1v1h-1zM696 281h1v1h-1zM696 269h1v1h-1zM696 256h1v1h-1zM696 244h1v1h-1zM696 232h1v1h-1zM696 220h1v1h-1zM696 207h1v1h-1zM696 195h1v1h-1zM696 183h1v1h-1zM696 171h1v1h-1zM696 158h1v1h-1zM709 722h1v1h-1zM709 710h1v1h-1zM709 698h1v1h-1zM709 686h1v1h-1zM709 673h1v1h-1zM709 661h1v1h-1zM709 649h1v1h-1zM709 637h1v1h-1zM709 624h1v1h-1zM709 612h1v1h-1zM709 600h1v1h-1zM709 587h1v1h-1zM709 575h1v1h-1zM709 563h1v1h-1zM709 551h1v1h-1zM709 538h1v1h-1zM709 526h1v1h-1zM709 514h1v1h-1zM709 502h1v1h-1zM709 489h1v1h-1zM709 477h1v1h-1zM709 465h1v1h-1zM709 453h1v1h-1zM709 440h1v1h-1zM709 428h1v1h-1zM709 416h1v1h-1zM709 404h1v1h-1zM709 391h1v1h-1zM709 379h1v1h-1zM709 367h1v1h-1zM709 354h1v1h-1zM709 342h1v1h-1zM709 330h1v1h-1zM709 318h1v1h-1zM709 305h1v1h-1zM709 293h1v1h-1zM709 281h1v1h-1zM709 269h1v1h-1zM709 256h1v1h-1zM709 244h1v1h-1zM709 232h1v1h-1zM709 220h1v1h-1zM709 207h1v1h-1zM709 195h1v1h-1zM709 183h1v1h-1zM709 171h1v1h-1zM709 158h1v1h-1zM721 722h1v1h-1zM721 710h1v1h-1zM721 698h1v1h-1zM721 686h1v1h-1zM721 673h1v1h-1zM721 661h1v1h-1zM721 649h1v1h-1zM721 637h1v1h-1zM721 624h1v1h-1zM721 612h1v1h-1zM721 600h1v1h-1zM721 587h1v1h-1zM721 575h1v1h-1zM721 563h1v1h-1zM721 551h1v1h-1zM721 538h1v1h-1zM721 526h1v1h-1zM721 514h1v1h-1zM721 502h1v1h-1zM721 489h1v1h-1zM721 477h1v1h-1zM721 465h1v1h-1zM721 453h1v1h-1zM721 440h1v1h-1zM721 428h1v1h-1zM721 416h1v1h-1zM721 404h1v1h-1zM721 391h1v1h-1zM721 379h1v1h-1zM721 367h1v1h-1zM721 354h1v1h-1zM721 342h1v1h-1zM721 330h1v1h-1zM721 318h1v1h-1zM721 305h1v1h-1zM721 293h1v1h-1zM721 281h1v1h-1zM721 269h1v1h-1zM721 256h1v1h-1zM721 244h1v1h-1zM721 232h1v1h-1zM721 220h1v1h-1zM721 207h1v1h-1zM721 195h1v1h-1zM721 183h1v1h-1zM721 171h1v1h-1zM721 158h1v1h-1zM733 722h1v1h-1zM733 710h1v1h-1zM733 698h1v1h-1zM733 686h1v1h-1zM733 673h1v1h-1zM733 661h1v1h-1zM733 649h1v1h-1zM733 637h1v1h-1zM733 624h1v1h-1zM733 612h1v1h-1zM733 600h1v1h-1zM733 587h1v1h-1zM733 575h1v1h-1zM733 563h1v1h-1zM733 551h1v1h-1zM733 538h1v1h-1zM733 526h1v1h-1zM733 514h1v1h-1zM733 502h1v1h-1zM733 489h1v1h-1zM733 477h1v1h-1zM733 465h1v1h-1zM733 453h1v1h-1zM733 440h1v1h-1zM733 428h1v1h-1zM733 416h1v1h-1zM733 404h1v1h-1zM733 391h1v1h-1zM733 379h1v1h-1zM733 367h1v1h-1zM733 354h1v1h-1zM733 342h1v1h-1zM733 330h1v1h-1zM733 318h1v1h-1zM733 305h1v1h-1zM733 293h1v1h-1zM733 281h1v1h-1zM733 269h1v1h-1zM733 256h1v1h-1zM733 244h1v1h-1zM733 232h1v1h-1zM733 220h1v1h-1zM733 207h1v1h-1zM733 195h1v1h-1zM733 183h1v1h-1zM733 171h1v1h-1zM733 158h1v1h-1zM746 722h1v1h-1zM746 710h1v1h-1zM746 698h1v1h-1zM746 686h1v1h-1zM746 673h1v1h-1zM746 661h1v1h-1zM746 649h1v1h-1zM746 637h1v1h-1zM746 624h1v1h-1zM746 612h1v1h-1zM746 600h1v1h-1zM746 587h1v1h-1zM746 575h1v1h-1zM746 563h1v1h-1zM746 551h1v1h-1zM746 538h1v1h-1zM746 526h1v1h-1zM746 514h1v1h-1zM746 502h1v1h-1zM746 489h1v1h-1zM746 477h1v1h-1zM746 465h1v1h-1zM746 453h1v1h-1zM746 440h1v1h-1zM746 428h1v1h-1zM746 416h1v1h-1zM746 404h1v1h-1zM746 391h1v1h-1zM746 379h1v1h-1zM746 367h1v1h-1zM746 354h1v1h-1zM746 342h1v1h-1zM746 330h1v1h-1zM746 318h1v1h-1zM746 305h1v1h-1zM746 293h1v1h-1zM746 281h1v1h-1zM746 269h1v1h-1zM746 256h1v1h-1zM746 244h1v1h-1zM746 232h1v1h-1zM746 220h1v1h-1zM746 207h1v1h-1zM746 195h1v1h-1zM746 183h1v1h-1zM746 171h1v1h-1zM746 158h1v1h-1zM758 722h1v1h-1zM758 710h1v1h-1zM758 698h1v1h-1zM758 686h1v1h-1zM758 673h1v1h-1zM758 661h1v1h-1zM758 649h1v1h-1zM758 637h1v1h-1zM758 624h1v1h-1zM758 612h1v1h-1zM758 600h1v1h-1zM758 587h1v1h-1zM758 575h1v1h-1zM758 563h1v1h-1zM758 551h1v1h-1zM758 538h1v1h-1zM758 526h1v1h-1zM758 514h1v1h-1zM758 502h1v1h-1zM758 489h1v1h-1zM758 477h1v1h-1zM758 465h1v1h-1zM758 453h1v1h-1zM758 440h1v1h-1zM758 428h1v1h-1zM758 416h1v1h-1zM758 404h1v1h-1zM758 391h1v1h-1zM758 379h1v1h-1zM758 367h1v1h-1zM758 354h1v1h-1zM758 342h1v1h-1zM758 330h1v1h-1zM758 318h1v1h-1zM758 305h1v1h-1zM758 293h1v1h-1zM758 281h1v1h-1zM758 269h1v1h-1zM758 256h1v1h-1zM758 244h1v1h-1zM758 232h1v1h-1zM758 220h1v1h-1zM758 207h1v1h-1zM758 195h1v1h-1zM758 183h1v1h-1zM758 171h1v1h-1zM758 158h1v1h-1zM770 722h1v1h-1zM770 710h1v1h-1zM770 698h1v1h-1zM770 686h1v1h-1zM770 673h1v1h-1zM770 661h1v1h-1zM770 649h1v1h-1zM770 637h1v1h-1zM770 624h1v1h-1zM770 612h1v1h-1zM770 600h1v1h-1zM770 587h1v1h-1zM770 575h1v1h-1zM770 563h1v1h-1zM770 551h1v1h-1zM770 538h1v1h-1zM770 526h1v1h-1zM770 514h1v1h-1zM770 502h1v1h-1zM770 489h1v1h-1zM770 477h1v1h-1zM770 465h1v1h-1zM770 453h1v1h-1zM770 440h1v1h-1zM770 428h1v1h-1zM770 416h1v1h-1zM770 404h1v1h-1zM770 391h1v1h-1zM770 379h1v1h-1zM770 367h1v1h-1zM770 354h1v1h-1zM770 342h1v1h-1zM770 330h1v1h-1zM770 318h1v1h-1zM770 305h1v1h-1zM770 293h1v1h-1zM770 281h1v1h-1zM770 269h1v1h-1zM770 256h1v1h-1zM770 244h1v1h-1zM770 232h1v1h-1zM770 220h1v1h-1zM770 207h1v1h-1zM770 195h1v1h-1zM770 183h1v1h-1zM770 171h1v1h-1zM770 158h1v1h-1zM782 722h1v1h-1zM782 710h1v1h-1zM782 698h1v1h-1zM782 686h1v1h-1zM782 673h1v1h-1zM782 661h1v1h-1zM782 649h1v1h-1zM782 637h1v1h-1zM782 624h1v1h-1zM782 612h1v1h-1zM782 600h1v1h-1zM782 587h1v1h-1zM782 575h1v1h-1zM782 563h1v1h-1zM782 551h1v1h-1zM782 538h1v1h-1zM782 526h1v1h-1zM782 514h1v1h-1zM782 502h1v1h-1zM782 489h1v1h-1zM782 477h1v1h-1zM782 465h1v1h-1zM782 453h1v1h-1zM782 440h1v1h-1zM782 428h1v1h-1zM782 416h1v1h-1zM782 404h1v1h-1zM782 391h1v1h-1zM782 379h1v1h-1zM782 367h1v1h-1zM782 354h1v1h-1zM782 342h1v1h-1zM782 330h1v1h-1zM782 318h1v1h-1zM782 305h1v1h-1zM782 293h1v1h-1zM782 281h1v1h-1zM782 269h1v1h-1zM782 256h1v1h-1zM782 244h1v1h-1zM782 232h1v1h-1zM782 220h1v1h-1zM782 207h1v1h-1zM782 195h1v1h-1zM782 183h1v1h-1zM782 171h1v1h-1zM782 158h1v1h-1zM795 722h1v1h-1zM795 710h1v1h-1zM795 698h1v1h-1zM795 686h1v1h-1zM795 673h1v1h-1zM795 661h1v1h-1zM795 649h1v1h-1zM795 637h1v1h-1zM795 624h1v1h-1zM795 612h1v1h-1zM795 600h1v1h-1zM795 587h1v1h-1zM795 575h1v1h-1zM795 563h1v1h-1zM795 551h1v1h-1zM795 538h1v1h-1zM795 526h1v1h-1zM795 514h1v1h-1zM795 502h1v1h-1zM795 489h1v1h-1zM795 477h1v1h-1zM795 465h1v1h-1zM795 453h1v1h-1zM795 440h1v1h-1zM795 428h1v1h-1zM795 416h1v1h-1zM795 404h1v1h-1zM795 391h1v1h-1zM795 379h1v1h-1zM795 367h1v1h-1zM795 354h1v1h-1zM795 342h1v1h-1zM795 330h1v1h-1zM795 318h1v1h-1zM795 305h1v1h-1zM795 293h1v1h-1zM795 281h1v1h-1zM795 269h1v1h-1zM795 256h1v1h-1zM795 244h1v1h-1zM795 232h1v1h-1zM795 220h1v1h-1zM795 207h1v1h-1zM795 195h1v1h-1zM795 183h1v1h-1zM795 171h1v1h-1zM795 158h1v1h-1zM807 722h1v1h-1zM807 710h1v1h-1zM807 698h1v1h-1zM807 686h1v1h-1zM807 673h1v1h-1zM807 661h1v1h-1zM807 649h1v1h-1zM807 637h1v1h-1zM807 624h1v1h-1zM807 612h1v1h-1zM807 600h1v1h-1zM807 587h1v1h-1zM807 575h1v1h-1zM807 563h1v1h-1zM807 551h1v1h-1zM807 538h1v1h-1zM807 526h1v1h-1zM807 514h1v1h-1zM807 502h1v1h-1zM807 489h1v1h-1zM807 477h1v1h-1zM807 465h1v1h-1zM807 453h1v1h-1zM807 440h1v1h-1zM807 428h1v1h-1zM807 416h1v1h-1zM807 404h1v1h-1zM807 391h1v1h-1zM807 379h1v1h-1zM807 367h1v1h-1zM807 354h1v1h-1zM807 342h1v1h-1zM807 330h1v1h-1zM807 318h1v1h-1zM807 305h1v1h-1zM807 293h1v1h-1zM807 281h1v1h-1zM807 269h1v1h-1zM807 256h1v1h-1zM807 244h1v1h-1zM807 232h1v1h-1zM807 220h1v1h-1zM807 207h1v1h-1zM807 195h1v1h-1zM807 183h1v1h-1zM807 171h1v1h-1zM807 158h1v1h-1zM819 722h1v1h-1zM819 710h1v1h-1zM819 698h1v1h-1zM819 686h1v1h-1zM819 673h1v1h-1zM819 661h1v1h-1zM819 649h1v1h-1zM819 637h1v1h-1zM819 624h1v1h-1zM819 612h1v1h-1zM819 600h1v1h-1zM819 587h1v1h-1zM819 575h1v1h-1zM819 563h1v1h-1zM819 551h1v1h-1zM819 538h1v1h-1zM819 526h1v1h-1zM819 514h1v1h-1zM819 502h1v1h-1zM819 489h1v1h-1zM819 477h1v1h-1zM819 465h1v1h-1zM819 453h1v1h-1zM819 440h1v1h-1zM819 428h1v1h-1zM819 416h1v1h-1zM819 404h1v1h-1zM819 391h1v1h-1zM819 379h1v1h-1zM819 367h1v1h-1zM819 354h1v1h-1zM819 342h1v1h-1zM819 330h1v1h-1zM819 318h1v1h-1zM819 305h1v1h-1zM819 293h1v1h-1zM819 281h1v1h-1zM819 269h1v1h-1zM819 256h1v1h-1zM819 244h1v1h-1zM819 232h1v1h-1zM819 220h1v1h-1zM819 207h1v1h-1zM819 195h1v1h-1zM819 183h1v1h-1zM819 171h1v1h-1zM819 158h1v1h-1zM831 722h1v1h-1zM831 710h1v1h-1zM831 698h1v1h-1zM831 686h1v1h-1zM831 673h1v1h-1zM831 661h1v1h-1zM831 649h1v1h-1zM831 637h1v1h-1zM831 624h1v1h-1zM831 612h1v1h-1zM831 600h1v1h-1zM831 587h1v1h-1zM831 575h1v1h-1zM831 563h1v1h-1zM831 551h1v1h-1zM831 538h1v1h-1zM831 526h1v1h-1zM831 514h1v1h-1zM831 502h1v1h-1zM831 489h1v1h-1zM831 477h1v1h-1zM831 465h1v1h-1zM831 453h1v1h-1zM831 440h1v1h-1zM831 428h1v1h-1zM831 416h1v1h-1zM831 404h1v1h-1zM831 391h1v1h-1zM831 379h1v1h-1zM831 367h1v1h-1zM831 354h1v1h-1zM831 342h1v1h-1zM831 330h1v1h-1zM831 318h1v1h-1zM831 305h1v1h-1zM831 293h1v1h-1zM831 281h1v1h-1zM831 269h1v1h-1zM831 256h1v1h-1zM831 244h1v1h-1zM831 232h1v1h-1zM831 220h1v1h-1zM831 207h1v1h-1zM831 195h1v1h-1zM831 183h1v1h-1zM831 171h1v1h-1zM831 158h1v1h-1zM844 722h1v1h-1zM844 710h1v1h-1zM844 698h1v1h-1zM844 686h1v1h-1zM844 673h1v1h-1zM844 661h1v1h-1zM844 649h1v1h-1zM844 637h1v1h-1zM844 624h1v1h-1zM844 612h1v1h-1zM844 600h1v1h-1zM844 587h1v1h-1zM844 575h1v1h-1zM844 563h1v1h-1zM844 551h1v1h-1zM844 538h1v1h-1zM844 526h1v1h-1zM844 514h1v1h-1zM844 502h1v1h-1zM844 489h1v1h-1zM844 477h1v1h-1zM844 465h1v1h-1zM844 453h1v1h-1zM844 440h1v1h-1zM844 428h1v1h-1zM844 416h1v1h-1zM844 404h1v1h-1zM844 391h1v1h-1zM844 379h1v1h-1zM844 367h1v1h-1zM844 354h1v1h-1zM844 342h1v1h-1zM844 330h1v1h-1zM844 318h1v1h-1zM844 305h1v1h-1zM844 293h1v1h-1zM844 281h1v1h-1zM844 269h1v1h-1zM844 256h1v1h-1zM844 244h1v1h-1zM844 232h1v1h-1zM844 220h1v1h-1zM844 207h1v1h-1zM844 195h1v1h-1zM844 183h1v1h-1zM844 171h1v1h-1zM844 158h1v1h-1zM856 722h1v1h-1zM856 710h1v1h-1zM856 698h1v1h-1zM856 686h1v1h-1zM856 673h1v1h-1zM856 661h1v1h-1zM856 649h1v1h-1zM856 637h1v1h-1zM856 624h1v1h-1zM856 612h1v1h-1zM856 600h1v1h-1zM856 587h1v1h-1zM856 575h1v1h-1zM856 563h1v1h-1zM856 551h1v1h-1zM856 538h1v1h-1zM856 526h1v1h-1zM856 514h1v1h-1zM856 502h1v1h-1zM856 489h1v1h-1zM856 477h1v1h-1zM856 465h1v1h-1zM856 453h1v1h-1zM856 440h1v1h-1zM856 428h1v1h-1zM856 416h1v1h-1zM856 404h1v1h-1zM856 391h1v1h-1zM856 379h1v1h-1zM856 367h1v1h-1zM856 354h1v1h-1zM856 342h1v1h-1zM856 330h1v1h-1zM856 318h1v1h-1zM856 305h1v1h-1zM856 293h1v1h-1zM856 281h1v1h-1zM856 269h1v1h-1zM856 256h1v1h-1zM856 244h1v1h-1zM856 232h1v1h-1zM856 220h1v1h-1zM856 207h1v1h-1zM856 195h1v1h-1zM856 183h1v1h-1zM856 171h1v1h-1zM856 158h1v1h-1zM868 722h1v1h-1zM868 710h1v1h-1zM868 698h1v1h-1zM868 686h1v1h-1zM868 673h1v1h-1zM868 661h1v1h-1zM868 649h1v1h-1zM868 637h1v1h-1zM868 624h1v1h-1zM868 612h1v1h-1zM868 600h1v1h-1zM868 587h1v1h-1zM868 575h1v1h-1zM868 563h1v1h-1zM868 551h1v1h-1zM868 538h1v1h-1zM868 526h1v1h-1zM868 514h1v1h-1zM868 502h1v1h-1zM868 489h1v1h-1zM868 477h1v1h-1zM868 465h1v1h-1zM868 453h1v1h-1zM868 440h1v1h-1zM868 428h1v1h-1zM868 416h1v1h-1zM868 404h1v1h-1zM868 391h1v1h-1zM868 379h1v1h-1zM868 367h1v1h-1zM868 354h1v1h-1zM868 342h1v1h-1zM868 330h1v1h-1zM868 318h1v1h-1zM868 305h1v1h-1zM868 293h1v1h-1zM868 281h1v1h-1zM868 269h1v1h-1zM868 256h1v1h-1zM868 244h1v1h-1zM868 232h1v1h-1zM868 220h1v1h-1zM868 207h1v1h-1zM868 195h1v1h-1zM868 183h1v1h-1zM868 171h1v1h-1zM868 158h1v1h-1zM880 722h1v1h-1zM880 710h1v1h-1zM880 698h1v1h-1zM880 686h1v1h-1zM880 673h1v1h-1zM880 661h1v1h-1zM880 649h1v1h-1zM880 637h1v1h-1zM880 624h1v1h-1zM880 612h1v1h-1zM880 600h1v1h-1zM880 587h1v1h-1zM880 575h1v1h-1zM880 563h1v1h-1zM880 551h1v1h-1zM880 538h1v1h-1zM880 526h1v1h-1zM880 514h1v1h-1zM880 502h1v1h-1zM880 489h1v1h-1zM880 477h1v1h-1zM880 465h1v1h-1zM880 453h1v1h-1zM880 440h1v1h-1zM880 428h1v1h-1zM880 416h1v1h-1zM880 404h1v1h-1zM880 391h1v1h-1zM880 379h1v1h-1zM880 367h1v1h-1zM880 354h1v1h-1zM880 342h1v1h-1zM880 330h1v1h-1zM880 318h1v1h-1zM880 305h1v1h-1zM880 293h1v1h-1zM880 281h1v1h-1zM880 269h1v1h-1zM880 256h1v1h-1zM880 244h1v1h-1zM880 232h1v1h-1zM880 220h1v1h-1zM880 207h1v1h-1zM880 195h1v1h-1zM880 183h1v1h-1zM880 171h1v1h-1zM880 158h1v1h-1zM893 722h1v1h-1zM893 710h1v1h-1zM893 698h1v1h-1zM893 686h1v1h-1zM893 673h1v1h-1zM893 661h1v1h-1zM893 649h1v1h-1zM893 637h1v1h-1zM893 624h1v1h-1zM893 612h1v1h-1zM893 600h1v1h-1zM893 587h1v1h-1zM893 575h1v1h-1zM893 563h1v1h-1zM893 551h1v1h-1zM893 538h1v1h-1zM893 526h1v1h-1zM893 514h1v1h-1zM893 502h1v1h-1zM893 489h1v1h-1zM893 477h1v1h-1zM893 465h1v1h-1zM893 453h1v1h-1zM893 440h1v1h-1zM893 428h1v1h-1zM893 416h1v1h-1zM893 404h1v1h-1zM893 391h1v1h-1zM893 379h1v1h-1zM893 367h1v1h-1zM893 354h1v1h-1zM893 342h1v1h-1zM893 330h1v1h-1zM893 318h1v1h-1zM893 305h1v1h-1zM893 293h1v1h-1zM893 281h1v1h-1zM893 269h1v1h-1zM893 256h1v1h-1zM893 244h1v1h-1zM893 232h1v1h-1zM893 220h1v1h-1zM893 207h1v1h-1zM893 195h1v1h-1zM893 183h1v1h-1zM893 171h1v1h-1zM893 158h1v1h-1zM905 722h1v1h-1zM905 710h1v1h-1zM905 698h1v1h-1zM905 686h1v1h-1zM905 673h1v1h-1zM905 661h1v1h-1zM905 649h1v1h-1zM905 637h1v1h-1zM905 624h1v1h-1zM905 612h1v1h-1zM905 600h1v1h-1zM905 587h1v1h-1zM905 575h1v1h-1zM905 563h1v1h-1zM905 551h1v1h-1zM905 538h1v1h-1zM905 526h1v1h-1zM905 514h1v1h-1zM905 502h1v1h-1zM905 489h1v1h-1zM905 477h1v1h-1zM905 465h1v1h-1zM905 453h1v1h-1zM905 440h1v1h-1zM905 428h1v1h-1zM905 416h1v1h-1zM905 404h1v1h-1zM905 391h1v1h-1zM905 379h1v1h-1zM905 367h1v1h-1zM905 354h1v1h-1zM905 342h1v1h-1zM905 330h1v1h-1zM905 318h1v1h-1zM905 305h1v1h-1zM905 293h1v1h-1zM905 281h1v1h-1zM905 269h1v1h-1zM905 256h1v1h-1zM905 244h1v1h-1zM905 232h1v1h-1zM905 220h1v1h-1zM905 207h1v1h-1zM905 195h1v1h-1zM905 183h1v1h-1zM905 171h1v1h-1zM905 158h1v1h-1zM917 722h1v1h-1zM917 710h1v1h-1zM917 698h1v1h-1zM917 686h1v1h-1zM917 673h1v1h-1zM917 661h1v1h-1zM917 649h1v1h-1zM917 637h1v1h-1zM917 624h1v1h-1zM917 612h1v1h-1zM917 600h1v1h-1zM917 587h1v1h-1zM917 575h1v1h-1zM917 563h1v1h-1zM917 551h1v1h-1zM917 538h1v1h-1zM917 526h1v1h-1zM917 514h1v1h-1zM917 502h1v1h-1zM917 489h1v1h-1zM917 477h1v1h-1zM917 465h1v1h-1zM917 453h1v1h-1zM917 440h1v1h-1zM917 428h1v1h-1zM917 416h1v1h-1zM917 404h1v1h-1zM917 391h1v1h-1zM917 379h1v1h-1zM917 367h1v1h-1zM917 354h1v1h-1zM917 342h1v1h-1zM917 330h1v1h-1zM917 318h1v1h-1zM917 305h1v1h-1zM917 293h1v1h-1zM917 281h1v1h-1zM917 269h1v1h-1zM917 256h1v1h-1zM917 244h1v1h-1zM917 232h1v1h-1zM917 220h1v1h-1zM917 207h1v1h-1zM917 195h1v1h-1zM917 183h1v1h-1zM917 171h1v1h-1zM917 158h1v1h-1zM930 722h1v1h-1zM930 710h1v1h-1zM930 698h1v1h-1zM930 686h1v1h-1zM930 673h1v1h-1zM930 661h1v1h-1zM930 649h1v1h-1zM930 637h1v1h-1zM930 624h1v1h-1zM930 612h1v1h-1zM930 600h1v1h-1zM930 587h1v1h-1zM930 575h1v1h-1zM930 563h1v1h-1zM930 551h1v1h-1zM930 538h1v1h-1zM930 526h1v1h-1zM930 514h1v1h-1zM930 502h1v1h-1zM930 489h1v1h-1zM930 477h1v1h-1zM930 465h1v1h-1zM930 453h1v1h-1zM930 440h1v1h-1zM930 428h1v1h-1zM930 416h1v1h-1zM930 404h1v1h-1zM930 391h1v1h-1zM930 379h1v1h-1zM930 367h1v1h-1zM930 354h1v1h-1zM930 342h1v1h-1zM930 330h1v1h-1zM930 318h1v1h-1zM930 305h1v1h-1zM930 293h1v1h-1zM930 281h1v1h-1zM930 269h1v1h-1zM930 256h1v1h-1zM930 244h1v1h-1zM930 232h1v1h-1zM930 220h1v1h-1zM930 207h1v1h-1zM930 195h1v1h-1zM930 183h1v1h-1zM930 171h1v1h-1zM930 158h1v1h-1zM942 722h1v1h-1zM942 710h1v1h-1zM942 698h1v1h-1zM942 686h1v1h-1zM942 673h1v1h-1zM942 661h1v1h-1zM942 649h1v1h-1zM942 637h1v1h-1zM942 624h1v1h-1zM942 612h1v1h-1zM942 600h1v1h-1zM942 587h1v1h-1zM942 575h1v1h-1zM942 563h1v1h-1zM942 551h1v1h-1zM942 538h1v1h-1zM942 526h1v1h-1zM942 514h1v1h-1zM942 502h1v1h-1zM942 489h1v1h-1zM942 477h1v1h-1zM942 465h1v1h-1zM942 453h1v1h-1zM942 440h1v1h-1zM942 428h1v1h-1zM942 416h1v1h-1zM942 404h1v1h-1zM942 391h1v1h-1zM942 379h1v1h-1zM942 367h1v1h-1zM942 354h1v1h-1zM942 342h1v1h-1zM942 330h1v1h-1zM942 318h1v1h-1zM942 305h1v1h-1zM942 293h1v1h-1zM942 281h1v1h-1zM942 269h1v1h-1zM942 256h1v1h-1zM942 244h1v1h-1zM942 232h1v1h-1zM942 220h1v1h-1zM942 207h1v1h-1zM942 195h1v1h-1zM942 183h1v1h-1zM942 171h1v1h-1zM942 158h1v1h-1zM954 722h1v1h-1zM954 710h1v1h-1zM954 698h1v1h-1zM954 686h1v1h-1zM954 673h1v1h-1zM954 661h1v1h-1zM954 649h1v1h-1zM954 637h1v1h-1zM954 624h1v1h-1zM954 612h1v1h-1zM954 600h1v1h-1zM954 587h1v1h-1zM954 575h1v1h-1zM954 563h1v1h-1zM954 551h1v1h-1zM954 538h1v1h-1zM954 526h1v1h-1zM954 514h1v1h-1zM954 502h1v1h-1zM954 489h1v1h-1zM954 477h1v1h-1zM954 465h1v1h-1zM954 453h1v1h-1zM954 440h1v1h-1zM954 428h1v1h-1zM954 416h1v1h-1zM954 404h1v1h-1zM954 391h1v1h-1zM954 379h1v1h-1zM954 367h1v1h-1zM954 354h1v1h-1zM954 342h1v1h-1zM954 330h1v1h-1zM954 318h1v1h-1zM954 305h1v1h-1zM954 293h1v1h-1zM954 281h1v1h-1zM954 269h1v1h-1zM954 256h1v1h-1zM954 244h1v1h-1zM954 232h1v1h-1zM954 220h1v1h-1zM954 207h1v1h-1zM954 195h1v1h-1zM954 183h1v1h-1zM954 171h1v1h-1zM954 158h1v1h-1zM966 722h1v1h-1zM966 710h1v1h-1zM966 698h1v1h-1zM966 686h1v1h-1zM966 673h1v1h-1zM966 661h1v1h-1zM966 649h1v1h-1zM966 637h1v1h-1zM966 624h1v1h-1zM966 612h1v1h-1zM966 600h1v1h-1zM966 587h1v1h-1zM966 575h1v1h-1zM966 563h1v1h-1zM966 551h1v1h-1zM966 538h1v1h-1zM966 526h1v1h-1zM966 514h1v1h-1zM966 502h1v1h-1zM966 489h1v1h-1zM966 477h1v1h-1zM966 465h1v1h-1zM966 453h1v1h-1zM966 440h1v1h-1zM966 428h1v1h-1zM966 416h1v1h-1zM966 404h1v1h-1zM966 391h1v1h-1zM966 379h1v1h-1zM966 367h1v1h-1zM966 354h1v1h-1zM966 342h1v1h-1zM966 330h1v1h-1zM966 318h1v1h-1zM966 305h1v1h-1zM966 293h1v1h-1zM966 281h1v1h-1zM966 269h1v1h-1zM966 256h1v1h-1zM966 244h1v1h-1zM966 232h1v1h-1zM966 220h1v1h-1zM966 207h1v1h-1zM966 195h1v1h-1zM966 183h1v1h-1zM966 171h1v1h-1zM966 158h1v1h-1zM979 722h1v1h-1zM979 710h1v1h-1zM979 698h1v1h-1zM979 686h1v1h-1zM979 673h1v1h-1zM979 661h1v1h-1zM979 649h1v1h-1zM979 637h1v1h-1zM979 624h1v1h-1zM979 612h1v1h-1zM979 600h1v1h-1zM979 587h1v1h-1zM979 575h1v1h-1zM979 563h1v1h-1zM979 551h1v1h-1zM979 538h1v1h-1zM979 526h1v1h-1zM979 514h1v1h-1zM979 502h1v1h-1zM979 489h1v1h-1zM979 477h1v1h-1zM979 465h1v1h-1zM979 453h1v1h-1zM979 440h1v1h-1zM979 428h1v1h-1zM979 416h1v1h-1zM979 404h1v1h-1zM979 391h1v1h-1zM979 379h1v1h-1zM979 367h1v1h-1zM979 354h1v1h-1zM979 342h1v1h-1zM979 330h1v1h-1zM979 318h1v1h-1zM979 305h1v1h-1zM979 293h1v1h-1zM979 281h1v1h-1zM979 269h1v1h-1zM979 256h1v1h-1zM979 244h1v1h-1zM979 232h1v1h-1zM979 220h1v1h-1zM979 207h1v1h-1zM979 195h1v1h-1zM979 183h1v1h-1zM979 171h1v1h-1zM979 158h1v1h-1zM991 722h1v1h-1zM991 710h1v1h-1zM991 698h1v1h-1zM991 686h1v1h-1zM991 673h1v1h-1zM991 661h1v1h-1zM991 649h1v1h-1zM991 637h1v1h-1zM991 624h1v1h-1zM991 612h1v1h-1zM991 600h1v1h-1zM991 587h1v1h-1zM991 575h1v1h-1zM991 563h1v1h-1zM991 551h1v1h-1zM991 538h1v1h-1zM991 526h1v1h-1zM991 514h1v1h-1zM991 502h1v1h-1zM991 489h1v1h-1zM991 477h1v1h-1zM991 465h1v1h-1zM991 453h1v1h-1zM991 440h1v1h-1zM991 428h1v1h-1zM991 416h1v1h-1zM991 404h1v1h-1zM991 391h1v1h-1zM991 379h1v1h-1zM991 367h1v1h-1zM991 354h1v1h-1zM991 342h1v1h-1zM991 330h1v1h-1zM991 318h1v1h-1zM991 305h1v1h-1zM991 293h1v1h-1zM991 281h1v1h-1zM991 269h1v1h-1zM991 256h1v1h-1zM991 244h1v1h-1zM991 232h1v1h-1zM991 220h1v1h-1zM991 207h1v1h-1zM991 195h1v1h-1zM991 183h1v1h-1zM991 171h1v1h-1zM991 158h1v1h-1zM1003 722h1v1h-1zM1003 710h1v1h-1zM1003 698h1v1h-1zM1003 686h1v1h-1zM1003 673h1v1h-1zM1003 661h1v1h-1zM1003 649h1v1h-1zM1003 637h1v1h-1zM1003 624h1v1h-1zM1003 612h1v1h-1zM1003 600h1v1h-1zM1003 587h1v1h-1zM1003 575h1v1h-1zM1003 563h1v1h-1zM1003 551h1v1h-1zM1003 538h1v1h-1zM1003 526h1v1h-1zM1003 514h1v1h-1zM1003 502h1v1h-1zM1003 489h1v1h-1zM1003 477h1v1h-1zM1003 465h1v1h-1zM1003 453h1v1h-1zM1003 440h1v1h-1zM1003 428h1v1h-1zM1003 416h1v1h-1zM1003 404h1v1h-1zM1003 391h1v1h-1zM1003 379h1v1h-1zM1003 367h1v1h-1zM1003 354h1v1h-1zM1003 342h1v1h-1zM1003 330h1v1h-1zM1003 318h1v1h-1zM1003 305h1v1h-1zM1003 293h1v1h-1zM1003 281h1v1h-1zM1003 269h1v1h-1zM1003 256h1v1h-1zM1003 244h1v1h-1zM1003 232h1v1h-1zM1003 220h1v1h-1zM1003 207h1v1h-1zM1003 195h1v1h-1zM1003 183h1v1h-1zM1003 171h1v1h-1zM1003 158h1v1h-1zM1015 722h1v1h-1zM1015 710h1v1h-1zM1015 698h1v1h-1zM1015 686h1v1h-1zM1015 673h1v1h-1zM1015 661h1v1h-1zM1015 649h1v1h-1zM1015 637h1v1h-1zM1015 624h1v1h-1zM1015 612h1v1h-1zM1015 600h1v1h-1zM1015 587h1v1h-1zM1015 575h1v1h-1zM1015 563h1v1h-1zM1015 551h1v1h-1zM1015 538h1v1h-1zM1015 526h1v1h-1zM1015 514h1v1h-1zM1015 502h1v1h-1zM1015 489h1v1h-1zM1015 477h1v1h-1zM1015 465h1v1h-1zM1015 453h1v1h-1zM1015 440h1v1h-1zM1015 428h1v1h-1zM1015 416h1v1h-1zM1015 404h1v1h-1zM1015 391h1v1h-1zM1015 379h1v1h-1zM1015 367h1v1h-1zM1015 354h1v1h-1zM1015 342h1v1h-1zM1015 330h1v1h-1zM1015 318h1v1h-1zM1015 305h1v1h-1zM1015 293h1v1h-1zM1015 281h1v1h-1zM1015 269h1v1h-1zM1015 256h1v1h-1zM1015 244h1v1h-1zM1015 232h1v1h-1zM1015 220h1v1h-1zM1015 207h1v1h-1zM1015 195h1v1h-1zM1015 183h1v1h-1zM1015 171h1v1h-1zM1015 158h1v1h-1zM1028 722h1v1h-1zM1028 710h1v1h-1zM1028 698h1v1h-1zM1028 686h1v1h-1zM1028 673h1v1h-1zM1028 661h1v1h-1zM1028 649h1v1h-1zM1028 637h1v1h-1zM1028 624h1v1h-1zM1028 612h1v1h-1zM1028 600h1v1h-1zM1028 587h1v1h-1zM1028 575h1v1h-1zM1028 563h1v1h-1zM1028 551h1v1h-1zM1028 538h1v1h-1zM1028 526h1v1h-1zM1028 514h1v1h-1zM1028 502h1v1h-1zM1028 489h1v1h-1zM1028 477h1v1h-1zM1028 465h1v1h-1zM1028 453h1v1h-1zM1028 440h1v1h-1zM1028 428h1v1h-1zM1028 416h1v1h-1zM1028 404h1v1h-1zM1028 391h1v1h-1zM1028 379h1v1h-1zM1028 367h1v1h-1zM1028 354h1v1h-1zM1028 342h1v1h-1zM1028 330h1v1h-1zM1028 318h1v1h-1zM1028 305h1v1h-1zM1028 293h1v1h-1zM1028 281h1v1h-1zM1028 269h1v1h-1zM1028 256h1v1h-1zM1028 244h1v1h-1zM1028 232h1v1h-1zM1028 220h1v1h-1zM1028 207h1v1h-1zM1028 195h1v1h-1zM1028 183h1v1h-1zM1028 171h1v1h-1zM1028 158h1v1h-1zM1040 722h1v1h-1zM1040 710h1v1h-1zM1040 698h1v1h-1zM1040 686h1v1h-1zM1040 673h1v1h-1zM1040 661h1v1h-1zM1040 649h1v1h-1zM1040 637h1v1h-1zM1040 624h1v1h-1zM1040 612h1v1h-1zM1040 600h1v1h-1zM1040 587h1v1h-1zM1040 575h1v1h-1zM1040 563h1v1h-1zM1040 551h1v1h-1zM1040 538h1v1h-1zM1040 526h1v1h-1zM1040 514h1v1h-1zM1040 502h1v1h-1zM1040 489h1v1h-1zM1040 477h1v1h-1zM1040 465h1v1h-1zM1040 453h1v1h-1zM1040 440h1v1h-1zM1040 428h1v1h-1zM1040 416h1v1h-1zM1040 404h1v1h-1zM1040 391h1v1h-1zM1040 379h1v1h-1zM1040 367h1v1h-1zM1040 354h1v1h-1zM1040 342h1v1h-1zM1040 330h1v1h-1zM1040 318h1v1h-1zM1040 305h1v1h-1zM1040 293h1v1h-1zM1040 281h1v1h-1zM1040 269h1v1h-1zM1040 256h1v1h-1zM1040 244h1v1h-1zM1040 232h1v1h-1zM1040 220h1v1h-1zM1040 207h1v1h-1zM1040 195h1v1h-1zM1040 183h1v1h-1zM1040 171h1v1h-1zM1040 158h1v1h-1zM1052 722h1v1h-1zM1052 710h1v1h-1zM1052 698h1v1h-1zM1052 686h1v1h-1zM1052 673h1v1h-1zM1052 661h1v1h-1zM1052 649h1v1h-1zM1052 637h1v1h-1zM1052 624h1v1h-1zM1052 612h1v1h-1zM1052 600h1v1h-1zM1052 587h1v1h-1zM1052 575h1v1h-1zM1052 563h1v1h-1zM1052 551h1v1h-1zM1052 538h1v1h-1zM1052 526h1v1h-1zM1052 514h1v1h-1zM1052 502h1v1h-1zM1052 489h1v1h-1zM1052 477h1v1h-1zM1052 465h1v1h-1zM1052 453h1v1h-1zM1052 440h1v1h-1zM1052 428h1v1h-1zM1052 416h1v1h-1zM1052 404h1v1h-1zM1052 391h1v1h-1zM1052 379h1v1h-1zM1052 367h1v1h-1zM1052 354h1v1h-1zM1052 342h1v1h-1zM1052 330h1v1h-1zM1052 318h1v1h-1zM1052 305h1v1h-1zM1052 293h1v1h-1zM1052 281h1v1h-1zM1052 269h1v1h-1zM1052 256h1v1h-1zM1052 244h1v1h-1zM1052 232h1v1h-1zM1052 220h1v1h-1zM1052 207h1v1h-1zM1052 195h1v1h-1zM1052 183h1v1h-1zM1052 171h1v1h-1zM1052 158h1v1h-1zM1064 722h1v1h-1zM1064 710h1v1h-1zM1064 698h1v1h-1zM1064 686h1v1h-1zM1064 673h1v1h-1zM1064 661h1v1h-1zM1064 649h1v1h-1zM1064 637h1v1h-1zM1064 624h1v1h-1zM1064 612h1v1h-1zM1064 600h1v1h-1zM1064 587h1v1h-1zM1064 575h1v1h-1zM1064 563h1v1h-1zM1064 551h1v1h-1zM1064 538h1v1h-1zM1064 526h1v1h-1zM1064 514h1v1h-1zM1064 502h1v1h-1zM1064 489h1v1h-1zM1064 477h1v1h-1zM1064 465h1v1h-1zM1064 453h1v1h-1zM1064 440h1v1h-1zM1064 428h1v1h-1zM1064 416h1v1h-1zM1064 404h1v1h-1zM1064 391h1v1h-1zM1064 379h1v1h-1zM1064 367h1v1h-1zM1064 354h1v1h-1zM1064 342h1v1h-1zM1064 330h1v1h-1zM1064 318h1v1h-1zM1064 305h1v1h-1zM1064 293h1v1h-1zM1064 281h1v1h-1zM1064 269h1v1h-1zM1064 256h1v1h-1zM1064 244h1v1h-1zM1064 232h1v1h-1zM1064 220h1v1h-1zM1064 207h1v1h-1zM1064 195h1v1h-1zM1064 183h1v1h-1zM1064 171h1v1h-1zM1064 158h1v1h-1zM1077 722h1v1h-1zM1077 710h1v1h-1zM1077 698h1v1h-1zM1077 686h1v1h-1zM1077 673h1v1h-1zM1077 661h1v1h-1zM1077 649h1v1h-1zM1077 637h1v1h-1zM1077 624h1v1h-1zM1077 612h1v1h-1zM1077 600h1v1h-1zM1077 587h1v1h-1zM1077 575h1v1h-1zM1077 563h1v1h-1zM1077 551h1v1h-1zM1077 538h1v1h-1zM1077 526h1v1h-1zM1077 514h1v1h-1zM1077 502h1v1h-1zM1077 489h1v1h-1zM1077 477h1v1h-1zM1077 465h1v1h-1zM1077 453h1v1h-1zM1077 440h1v1h-1zM1077 428h1v1h-1zM1077 416h1v1h-1zM1077 404h1v1h-1zM1077 391h1v1h-1zM1077 379h1v1h-1zM1077 367h1v1h-1zM1077 354h1v1h-1zM1077 342h1v1h-1zM1077 330h1v1h-1zM1077 318h1v1h-1zM1077 305h1v1h-1zM1077 293h1v1h-1zM1077 281h1v1h-1zM1077 269h1v1h-1zM1077 256h1v1h-1zM1077 244h1v1h-1zM1077 232h1v1h-1zM1077 220h1v1h-1zM1077 207h1v1h-1zM1077 195h1v1h-1zM1077 183h1v1h-1zM1077 171h1v1h-1zM1077 158h1v1h-1zM1089 722h1v1h-1zM1089 710h1v1h-1zM1089 698h1v1h-1zM1089 686h1v1h-1zM1089 673h1v1h-1zM1089 661h1v1h-1zM1089 649h1v1h-1zM1089 637h1v1h-1zM1089 624h1v1h-1zM1089 612h1v1h-1zM1089 600h1v1h-1zM1089 587h1v1h-1zM1089 575h1v1h-1zM1089 563h1v1h-1zM1089 551h1v1h-1zM1089 538h1v1h-1zM1089 526h1v1h-1zM1089 514h1v1h-1zM1089 502h1v1h-1zM1089 489h1v1h-1zM1089 477h1v1h-1zM1089 465h1v1h-1zM1089 453h1v1h-1zM1089 440h1v1h-1zM1089 428h1v1h-1zM1089 416h1v1h-1zM1089 404h1v1h-1zM1089 391h1v1h-1zM1089 379h1v1h-1zM1089 367h1v1h-1zM1089 354h1v1h-1zM1089 342h1v1h-1zM1089 330h1v1h-1zM1089 318h1v1h-1zM1089 305h1v1h-1zM1089 293h1v1h-1zM1089 281h1v1h-1zM1089 269h1v1h-1zM1089 256h1v1h-1zM1089 244h1v1h-1zM1089 232h1v1h-1zM1089 220h1v1h-1zM1089 207h1v1h-1zM1089 195h1v1h-1zM1089 183h1v1h-1zM1089 171h1v1h-1zM1089 158h1v1h-1zM1101 722h1v1h-1zM1101 710h1v1h-1zM1101 698h1v1h-1zM1101 686h1v1h-1zM1101 673h1v1h-1zM1101 661h1v1h-1zM1101 649h1v1h-1zM1101 637h1v1h-1zM1101 624h1v1h-1zM1101 612h1v1h-1zM1101 600h1v1h-1zM1101 587h1v1h-1zM1101 575h1v1h-1zM1101 563h1v1h-1zM1101 551h1v1h-1zM1101 538h1v1h-1zM1101 526h1v1h-1zM1101 514h1v1h-1zM1101 502h1v1h-1zM1101 489h1v1h-1zM1101 477h1v1h-1zM1101 465h1v1h-1zM1101 453h1v1h-1zM1101 440h1v1h-1zM1101 428h1v1h-1zM1101 416h1v1h-1zM1101 404h1v1h-1zM1101 391h1v1h-1zM1101 379h1v1h-1zM1101 367h1v1h-1zM1101 354h1v1h-1zM1101 342h1v1h-1zM1101 330h1v1h-1zM1101 318h1v1h-1zM1101 305h1v1h-1zM1101 293h1v1h-1zM1101 281h1v1h-1zM1101 269h1v1h-1zM1101 256h1v1h-1zM1101 244h1v1h-1zM1101 232h1v1h-1zM1101 220h1v1h-1zM1101 207h1v1h-1zM1101 195h1v1h-1zM1101 183h1v1h-1zM1101 171h1v1h-1zM1101 158h1v1h-1zM1114 722h1v1h-1zM1114 710h1v1h-1zM1114 698h1v1h-1zM1114 686h1v1h-1zM1114 673h1v1h-1zM1114 661h1v1h-1zM1114 649h1v1h-1zM1114 637h1v1h-1zM1114 624h1v1h-1zM1114 612h1v1h-1zM1114 600h1v1h-1zM1114 587h1v1h-1zM1114 575h1v1h-1zM1114 563h1v1h-1zM1114 551h1v1h-1zM1114 538h1v1h-1zM1114 526h1v1h-1zM1114 514h1v1h-1zM1114 502h1v1h-1zM1114 489h1v1h-1zM1114 477h1v1h-1zM1114 465h1v1h-1zM1114 453h1v1h-1zM1114 440h1v1h-1zM1114 428h1v1h-1zM1114 416h1v1h-1zM1114 404h1v1h-1zM1114 391h1v1h-1zM1114 379h1v1h-1zM1114 367h1v1h-1zM1114 354h1v1h-1zM1114 342h1v1h-1zM1114 330h1v1h-1zM1114 318h1v1h-1zM1114 305h1v1h-1zM1114 293h1v1h-1zM1114 281h1v1h-1zM1114 269h1v1h-1zM1114 256h1v1h-1zM1114 244h1v1h-1zM1114 232h1v1h-1zM1114 220h1v1h-1zM1114 207h1v1h-1zM1114 195h1v1h-1zM1114 183h1v1h-1zM1114 171h1v1h-1zM1114 158h1v1h-1zM1126 722h1v1h-1zM1126 710h1v1h-1zM1126 698h1v1h-1zM1126 686h1v1h-1zM1126 673h1v1h-1zM1126 661h1v1h-1zM1126 649h1v1h-1zM1126 637h1v1h-1zM1126 624h1v1h-1zM1126 612h1v1h-1zM1126 600h1v1h-1zM1126 587h1v1h-1zM1126 575h1v1h-1zM1126 563h1v1h-1zM1126 551h1v1h-1zM1126 538h1v1h-1zM1126 526h1v1h-1zM1126 514h1v1h-1zM1126 502h1v1h-1zM1126 489h1v1h-1zM1126 477h1v1h-1zM1126 465h1v1h-1zM1126 453h1v1h-1zM1126 440h1v1h-1zM1126 428h1v1h-1zM1126 416h1v1h-1zM1126 404h1v1h-1zM1126 391h1v1h-1zM1126 379h1v1h-1zM1126 367h1v1h-1zM1126 354h1v1h-1zM1126 342h1v1h-1zM1126 330h1v1h-1zM1126 318h1v1h-1zM1126 305h1v1h-1zM1126 293h1v1h-1zM1126 281h1v1h-1zM1126 269h1v1h-1zM1126 256h1v1h-1zM1126 244h1v1h-1zM1126 232h1v1h-1zM1126 220h1v1h-1zM1126 207h1v1h-1zM1126 195h1v1h-1zM1126 183h1v1h-1zM1126 171h1v1h-1zM1126 158h1v1h-1z" fill="#4a4a4a" shape-rendering="crispEdges"/>
<defs>
<symbol id="eye" viewBox="0 0 16 12"><path d="M0.3 6.4C2.8 -0.6 13.2 -0.6 15.7 6.4C13.2 12.6 2.8 12.6 0.3 6.4z" fill="currentColor"/><path d="M2.9 6.7C5 2.9 11 2.9 13.1 6.7C11 10.2 5 10.2 2.9 6.7z" style="fill:var(--in,#fff)"/><circle cx="8" cy="6.5" r="2.9" fill="currentColor"/><circle cx="7.1" cy="5.6" r="0.8" style="fill:var(--in,#fff)"/></symbol>
<symbol id="pencil" viewBox="0 0 14 14"><path d="M1 13L2 10L11 1.2L13 3.2L4 12z" fill="#e0a040" stroke="#9a6a2a" stroke-width="0.6"/><path d="M10 2.2L11 1.2L13 3.2L12 4.2z" fill="#e03030"/><path d="M1 13L2 10L4 12z" fill="#f0d0a0"/><path d="M1 13L1.5 11.6L2.4 12.5z" fill="#333"/></symbol>
<symbol id="lock" viewBox="0 0 10 14"><path d="M2 6.5V4.5A3 3 0 0 1 8 4.5V6.5" fill="none" stroke="currentColor" stroke-width="1.3"/><rect x="0" y="6" width="10" height="8" fill="currentColor"/></symbol>
</defs>
<rect x="1155" y="108" width="300" height="23" fill="url(#ttlp)"/>
<rect x="1155" y="129.5" width="300" height="1.5" fill="#c09c9c"/>
<rect x="1155" y="131" width="300" height="25" fill="#f1d2d2"/>
<rect x="1155.5" y="131" width="1.6" height="25" fill="#c29e9e"/>
<rect x="1192.5" y="131" width="1.6" height="25" fill="#c29e9e"/>
<rect x="1229.5" y="131" width="1.6" height="25" fill="#c29e9e"/>
<rect x="1267.5" y="131" width="1.6" height="25" fill="#c29e9e"/>
<rect x="1304.5" y="131" width="1.6" height="25" fill="#c29e9e"/>
<rect x="1342.5" y="131" width="1.6" height="25" fill="#c29e9e"/>
<rect x="1379.5" y="131" width="1.6" height="25" fill="#c29e9e"/>
<rect x="1417.5" y="131" width="1.6" height="25" fill="#c29e9e"/>
<rect x="1155" y="154.5" width="300" height="2" fill="#bd9999"/>
<rect x="1155" y="156.5" width="300" height="152" fill="#ffd7d7"/>
<defs><linearGradient id="rh" x1="0" y1="0" x2="1" y2="0"><stop offset="0" stop-color="#e46a6a" stop-opacity="0"/><stop offset="0.03" stop-color="#e46a6a"/><stop offset="0.97" stop-color="#e46a6a"/><stop offset="1" stop-color="#e46a6a" stop-opacity="0"/></linearGradient><linearGradient id="rv" x1="0" y1="0" x2="0" y2="1"><stop offset="0" stop-color="#e46a6a" stop-opacity="0"/><stop offset="0.04" stop-color="#e46a6a"/><stop offset="0.96" stop-color="#e46a6a"/><stop offset="1" stop-color="#e46a6a" stop-opacity="0"/></linearGradient></defs>
<rect x="1146" y="107" width="318" height="1.5" fill="url(#rh)"/>
<rect x="1146" y="307.5" width="318" height="1.5" fill="url(#rh)"/>
<rect x="1154.5" y="100" width="1.5" height="216" fill="url(#rv)"/>
<rect x="1454.5" y="100" width="1.5" height="216" fill="url(#rv)"/>
<circle cx="1164" cy="118" r="7" fill="#745656"/><path d="M1161 115l6 6M1167 115l-6 6" stroke="#e8cccc" stroke-width="1.8"/>
<circle cx="1182" cy="118" r="7" fill="#745656"/><rect x="1179.5" y="114.5" width="6" height="5" fill="none" stroke="#e8cccc" stroke-width="1.2"/><rect x="1177.5" y="117" width="5.5" height="4.5" fill="#745656" stroke="#e8cccc" stroke-width="1.2"/>
<text x="1274.4" y="119.5" font-size="12.5" fill="#4d3434" text-anchor="start" dominant-baseline="central" font-weight="normal"  textLength="96" lengthAdjust="spacingAndGlyphs">Elenco dei blocchi</text>
<use href="#eye" x="1166" y="137" width="15" height="11" style="color:#1e0606"/>
<use href="#eye" x="1203" y="137" width="15" height="11" style="color:#b38b8b;--in:#f1d2d2"/>
<path d="M1243 142.5h12M1249 136.5v12" stroke="#e00000" stroke-width="3"/>
<path d="M1280 143h12" stroke="#e87070" stroke-width="3"/>
<text x="1324" y="143.5" font-size="12" fill="#8d7575" text-anchor="middle" dominant-baseline="central" font-weight="normal" >a|b</text>
<use href="#pencil" x="1354" y="136" width="14" height="14"/>
<rect x="1393" y="136" width="12" height="13" fill="none" stroke="#dcc0d0" stroke-width="0.8"/><path d="M1397 137.5c3 0 3 3 2 5v5M1396.5 145l3 3 3-3" stroke="#9a8ae0" stroke-width="2" fill="none"/>
<rect x="1430.5" y="137.5" width="10.5" height="10.5" fill="#e04a3a"/><path d="M1433 140l5.5 5.5M1438.5 140l-5.5 5.5" stroke="#ffe0d0" stroke-width="1.3"/>
<use href="#eye" x="1161" y="161.5" width="15" height="11" style="color:#1e0606"/>
<text x="1205.2" y="167.5" font-size="13.2" fill="#1e0a0a" text-anchor="start" dominant-baseline="central" font-weight="normal"  textLength="136" lengthAdjust="spacingAndGlyphs">Model (*Model_Space)</text>
<use href="#eye" x="1161" y="181.5" width="15" height="11" style="color:#1e0606"/>
<text x="1205.2" y="187.5" font-size="13.2" fill="#1e0a0a" text-anchor="start" dominant-baseline="central" font-weight="normal"  textLength="143.5" lengthAdjust="spacingAndGlyphs">Layout1 (*Paper_Space)</text>
<use href="#eye" x="1161" y="201.5" width="15" height="11" style="color:#1e0606"/>
<text x="1205.2" y="207.5" font-size="13.2" fill="#1e0a0a" text-anchor="start" dominant-baseline="central" font-weight="normal"  textLength="50.5" lengthAdjust="spacingAndGlyphs">Albero A</text>
<use href="#eye" x="1161" y="221.5" width="15" height="11" style="color:#1e0606"/>
<text x="1205.2" y="227.5" font-size="13.2" fill="#1e0a0a" text-anchor="start" dominant-baseline="central" font-weight="normal"  textLength="50.5" lengthAdjust="spacingAndGlyphs">Albero B</text>
<use href="#eye" x="1161" y="241.5" width="15" height="11" style="color:#1e0606"/>
<text x="1205.2" y="247.5" font-size="13.2" fill="#1e0a0a" text-anchor="start" dominant-baseline="central" font-weight="normal"  textLength="44.5" lengthAdjust="spacingAndGlyphs">Cestino</text>
<use href="#eye" x="1161" y="261.5" width="15" height="11" style="color:#1e0606"/>
<text x="1205.2" y="267.5" font-size="13.2" fill="#1e0a0a" text-anchor="start" dominant-baseline="central" font-weight="normal"  textLength="54" lengthAdjust="spacingAndGlyphs">Panchina</text>
<use href="#pencil" x="1184" y="160" width="14" height="14"/>
<circle cx="1305" cy="232" r="37.5" fill="none" stroke="#b9bfd0" stroke-width="3.5" opacity="0.9"/>
<path d="M1305.5 231.5V253.5L1310.5 248.5L1314.5 258L1318 256.5L1314 247.5H1321z" fill="#fff" stroke="#111" stroke-width="1.1" stroke-linejoin="round"/>
<defs><linearGradient id="ttl" x1="0" y1="0" x2="0" y2="1"><stop offset="0" stop-color="#ededed"/><stop offset="1" stop-color="#d3d3d3"/></linearGradient><linearGradient id="ttlp" x1="0" y1="0" x2="0" y2="1"><stop offset="0" stop-color="#ecd0d0"/><stop offset="1" stop-color="#dbb6b6"/></linearGradient><linearGradient id="tbg" x1="0" y1="0" x2="0" y2="1"><stop offset="0" stop-color="#f5f5f5"/><stop offset="1" stop-color="#e9e9e9"/></linearGradient></defs>
<rect x="1155" y="309" width="300" height="22" fill="url(#ttl)"/>
<rect x="1155" y="330" width="300" height="1.5" fill="#b9b9b9"/>
<rect x="1155" y="331.5" width="300" height="25" fill="url(#tbg)"/>
<rect x="1155.5" y="331.5" width="1.6" height="25" fill="#b7b7b7"/>
<rect x="1214.5" y="331.5" width="1.6" height="25" fill="#b7b7b7"/>
<rect x="1274.5" y="331.5" width="1.6" height="25" fill="#b7b7b7"/>
<rect x="1334.5" y="331.5" width="1.6" height="25" fill="#b7b7b7"/>
<rect x="1394.5" y="331.5" width="1.6" height="25" fill="#b7b7b7"/>
<rect x="1453.5" y="331.5" width="1.6" height="25" fill="#b7b7b7"/>
<rect x="1155" y="355.5" width="300" height="2" fill="#b5b5b5"/>
<rect x="1156" y="357.5" width="298" height="441" fill="#fff"/>
<rect x="1454" y="309" width="1.5" height="490" fill="#c9c9c9"/>
<circle cx="1164" cy="319" r="7" fill="#6c6c6c"/><path d="M1161 316l6 6M1167 316l-6 6" stroke="#eee" stroke-width="1.8"/>
<circle cx="1182" cy="319" r="7" fill="#6c6c6c"/><rect x="1179.5" y="315.5" width="6" height="5" fill="none" stroke="#eee" stroke-width="1.2"/><rect x="1177.5" y="318" width="5.5" height="4.5" fill="#6c6c6c" stroke="#eee" stroke-width="1.2"/>
<text x="1280" y="320.5" font-size="12.5" fill="#2a2a2a" text-anchor="start" dominant-baseline="central" font-weight="normal"  textLength="84" lengthAdjust="spacingAndGlyphs">Elenco dei livelli</text>
<use href="#eye" x="1177" y="338" width="15" height="11" style="color:#000"/>
<use href="#eye" x="1237" y="338" width="15" height="11" style="color:#b5b5b5;--in:#f0f0f0"/>
<path d="M1298 343.5h12.5M1304.2 337.3v12.5" stroke="#e00000" stroke-width="3"/>
<path d="M1358 344h13" stroke="#e00000" stroke-width="3"/>
<use href="#pencil" x="1417" y="336" width="15" height="15"/>
<rect x="1156" y="398" width="298" height="20" fill="#0b4cd6"/>
<rect x="1161.5" y="364" width="15" height="8" fill="#ffffff" stroke="#111" stroke-width="1"/>
<text x="1183" y="368.5" font-size="13.2" fill="#111" text-anchor="start" dominant-baseline="central" font-weight="normal"  textLength="8" lengthAdjust="spacingAndGlyphs">0</text>
<use href="#eye" x="1415" y="362.5" width="15" height="11" style="color:#000"/>
<use href="#lock" x="1440" y="361.5" width="10" height="13.5" style="color:#b8b8b8"/>
<rect x="1161.5" y="384" width="15" height="8" fill="#5c9a2c" stroke="#111" stroke-width="1"/>
<text x="1183" y="388.5" font-size="13.2" fill="#111" text-anchor="start" dominant-baseline="central" font-weight="normal"  textLength="36.5" lengthAdjust="spacingAndGlyphs">Piante</text>
<use href="#eye" x="1415" y="382.5" width="15" height="11" style="color:#000"/>
<use href="#lock" x="1440" y="381.5" width="10" height="13.5" style="color:#b8b8b8"/>
<rect x="1161.5" y="404" width="15" height="8" fill="#c8b48a" stroke="#111" stroke-width="1"/>
<text x="1183" y="408.5" font-size="13.2" fill="#fff" text-anchor="start" dominant-baseline="central" font-weight="normal"  textLength="45.5" lengthAdjust="spacingAndGlyphs">Sentieri</text>
<use href="#eye" x="1415" y="402.5" width="15" height="11" style="color:#2a3a66;--in:#0b4cd6"/>
<use href="#lock" x="1440" y="401.5" width="10" height="13.5" style="color:#b9c3d6"/>
<use href="#pencil" x="1394" y="401" width="14" height="14"/>
<rect x="1161.5" y="424" width="15" height="8" fill="#c4c4c4" stroke="#111" stroke-width="1"/>
<text x="1183" y="428.5" font-size="13.2" fill="#111" text-anchor="start" dominant-baseline="central" font-weight="normal"  textLength="52.5" lengthAdjust="spacingAndGlyphs">Strutture</text>
<use href="#eye" x="1415" y="422.5" width="15" height="11" style="color:#000"/>
<use href="#lock" x="1440" y="421.5" width="10" height="13.5" style="color:#b8b8b8"/>
<defs>
<linearGradient id="tbtn" x1="0" y1="0" x2="0" y2="1"><stop offset="0" stop-color="#fbfbfb"/><stop offset="0.45" stop-color="#e9e9e9"/><stop offset="1" stop-color="#f4f4f4"/></linearGradient>
<linearGradient id="mag" x1="0" y1="0" x2="0" y2="1"><stop offset="0" stop-color="#3f7fd8"/><stop offset="0.5" stop-color="#7fb0ec"/><stop offset="1" stop-color="#b8d6f6"/></linearGradient>
<linearGradient id="magr" x1="0" y1="0" x2="0" y2="1"><stop offset="0" stop-color="#9ab6e0"/><stop offset="0.5" stop-color="#c0d4ef"/><stop offset="1" stop-color="#dae6f6"/></linearGradient>
<linearGradient id="floppy" x1="0" y1="0" x2="0" y2="1"><stop offset="0" stop-color="#5a8ef0"/><stop offset="1" stop-color="#2a5ed8"/></linearGradient>
<linearGradient id="folder" x1="0" y1="0" x2="0" y2="1"><stop offset="0" stop-color="#8fb6e8"/><stop offset="1" stop-color="#5a8ad0"/></linearGradient>
<radialGradient id="glow"><stop offset="0" stop-color="#ffffe0"/><stop offset="0.35" stop-color="#f4ee30"/><stop offset="1" stop-color="#f4ee30" stop-opacity="0"/></radialGradient>
<symbol id="magh" viewBox="0 0 32 32"><path d="M19.5 19.5L27 27" stroke="#555" stroke-width="4.5" stroke-linecap="round"/><path d="M20 20L26.5 26.5" stroke="#999" stroke-width="1.5" stroke-linecap="round"/><circle cx="11.5" cy="11.5" r="10.8" fill="#e8e8e8" stroke="#c2c2c2" stroke-width="1"/></symbol>
<symbol id="win" viewBox="0 0 28 28"><rect x="0.5" y="0.5" width="27" height="27" fill="#fff" stroke="#222" stroke-width="1"/><rect x="0.5" y="0.5" width="27" height="4.5" fill="#000"/><rect x="1.5" y="1" width="3" height="3" fill="#fff"/></symbol>
</defs>
<rect x="7.2" y="32.4" width="1.2" height="1.2" fill="#9c9c9c"/><rect x="7.2" y="38.4" width="1.2" height="1.2" fill="#9c9c9c"/><rect x="7.2" y="44.4" width="1.2" height="1.2" fill="#9c9c9c"/><rect x="7.2" y="50.4" width="1.2" height="1.2" fill="#9c9c9c"/><rect x="7.2" y="56.4" width="1.2" height="1.2" fill="#9c9c9c"/>
<rect x="12" y="25" width="43" height="42.5" rx="5" fill="#b9b9b9"/>
<path d="M0 0V17.5L4.2 13.6L7.5 20.8L10.5 19.4L7.4 12.3H13z" transform="translate(27.5 37)" fill="#fff" stroke="#222" stroke-width="1.1" stroke-linejoin="round"/>
<rect x="187.0" y="26.4" width="1.2" height="1.2" fill="#777"/><rect x="187.0" y="29.4" width="1.2" height="1.2" fill="#777"/><rect x="187.0" y="32.4" width="1.2" height="1.2" fill="#777"/><rect x="187.0" y="35.4" width="1.2" height="1.2" fill="#777"/><rect x="187.0" y="38.4" width="1.2" height="1.2" fill="#777"/><rect x="187.0" y="41.4" width="1.2" height="1.2" fill="#777"/><rect x="187.0" y="44.4" width="1.2" height="1.2" fill="#777"/><rect x="187.0" y="47.4" width="1.2" height="1.2" fill="#777"/><rect x="187.0" y="50.4" width="1.2" height="1.2" fill="#777"/><rect x="187.0" y="53.4" width="1.2" height="1.2" fill="#777"/><rect x="187.0" y="56.4" width="1.2" height="1.2" fill="#777"/><rect x="187.0" y="59.4" width="1.2" height="1.2" fill="#777"/><rect x="187.0" y="62.4" width="1.2" height="1.2" fill="#777"/><rect x="187.0" y="65.4" width="1.2" height="1.2" fill="#777"/>
<rect x="345.0" y="26.4" width="1.2" height="1.2" fill="#777"/><rect x="345.0" y="29.4" width="1.2" height="1.2" fill="#777"/><rect x="345.0" y="32.4" width="1.2" height="1.2" fill="#777"/><rect x="345.0" y="35.4" width="1.2" height="1.2" fill="#777"/><rect x="345.0" y="38.4" width="1.2" height="1.2" fill="#777"/><rect x="345.0" y="41.4" width="1.2" height="1.2" fill="#777"/><rect x="345.0" y="44.4" width="1.2" height="1.2" fill="#777"/><rect x="345.0" y="47.4" width="1.2" height="1.2" fill="#777"/><rect x="345.0" y="50.4" width="1.2" height="1.2" fill="#777"/><rect x="345.0" y="53.4" width="1.2" height="1.2" fill="#777"/><rect x="345.0" y="56.4" width="1.2" height="1.2" fill="#777"/><rect x="345.0" y="59.4" width="1.2" height="1.2" fill="#777"/><rect x="345.0" y="62.4" width="1.2" height="1.2" fill="#777"/><rect x="345.0" y="65.4" width="1.2" height="1.2" fill="#777"/>
<rect x="854.0" y="26.4" width="1.2" height="1.2" fill="#777"/><rect x="854.0" y="29.4" width="1.2" height="1.2" fill="#777"/><rect x="854.0" y="32.4" width="1.2" height="1.2" fill="#777"/><rect x="854.0" y="35.4" width="1.2" height="1.2" fill="#777"/><rect x="854.0" y="38.4" width="1.2" height="1.2" fill="#777"/><rect x="854.0" y="41.4" width="1.2" height="1.2" fill="#777"/><rect x="854.0" y="44.4" width="1.2" height="1.2" fill="#777"/><rect x="854.0" y="47.4" width="1.2" height="1.2" fill="#777"/><rect x="854.0" y="50.4" width="1.2" height="1.2" fill="#777"/><rect x="854.0" y="53.4" width="1.2" height="1.2" fill="#777"/><rect x="854.0" y="56.4" width="1.2" height="1.2" fill="#777"/><rect x="854.0" y="59.4" width="1.2" height="1.2" fill="#777"/><rect x="854.0" y="62.4" width="1.2" height="1.2" fill="#777"/><rect x="854.0" y="65.4" width="1.2" height="1.2" fill="#777"/>
<rect x="911.0" y="26.4" width="1.2" height="1.2" fill="#777"/><rect x="911.0" y="29.4" width="1.2" height="1.2" fill="#777"/><rect x="911.0" y="32.4" width="1.2" height="1.2" fill="#777"/><rect x="911.0" y="35.4" width="1.2" height="1.2" fill="#777"/><rect x="911.0" y="38.4" width="1.2" height="1.2" fill="#777"/><rect x="911.0" y="41.4" width="1.2" height="1.2" fill="#777"/><rect x="911.0" y="44.4" width="1.2" height="1.2" fill="#777"/><rect x="911.0" y="47.4" width="1.2" height="1.2" fill="#777"/><rect x="911.0" y="50.4" width="1.2" height="1.2" fill="#777"/><rect x="911.0" y="53.4" width="1.2" height="1.2" fill="#777"/><rect x="911.0" y="56.4" width="1.2" height="1.2" fill="#777"/><rect x="911.0" y="59.4" width="1.2" height="1.2" fill="#777"/><rect x="911.0" y="62.4" width="1.2" height="1.2" fill="#777"/><rect x="911.0" y="65.4" width="1.2" height="1.2" fill="#777"/>
<rect x="501.9" y="26.4" width="1.2" height="1.2" fill="#777"/><rect x="501.9" y="29.4" width="1.2" height="1.2" fill="#777"/><rect x="501.9" y="32.4" width="1.2" height="1.2" fill="#777"/><rect x="501.9" y="35.4" width="1.2" height="1.2" fill="#777"/><rect x="501.9" y="38.4" width="1.2" height="1.2" fill="#777"/><rect x="501.9" y="41.4" width="1.2" height="1.2" fill="#777"/><rect x="501.9" y="44.4" width="1.2" height="1.2" fill="#777"/><rect x="501.9" y="47.4" width="1.2" height="1.2" fill="#777"/><rect x="501.9" y="50.4" width="1.2" height="1.2" fill="#777"/><rect x="501.9" y="53.4" width="1.2" height="1.2" fill="#777"/><rect x="501.9" y="56.4" width="1.2" height="1.2" fill="#777"/><rect x="501.9" y="59.4" width="1.2" height="1.2" fill="#777"/><rect x="501.9" y="62.4" width="1.2" height="1.2" fill="#777"/><rect x="501.9" y="65.4" width="1.2" height="1.2" fill="#777"/>
<rect x="557.9" y="26.4" width="1.2" height="1.2" fill="#777"/><rect x="557.9" y="29.4" width="1.2" height="1.2" fill="#777"/><rect x="557.9" y="32.4" width="1.2" height="1.2" fill="#777"/><rect x="557.9" y="35.4" width="1.2" height="1.2" fill="#777"/><rect x="557.9" y="38.4" width="1.2" height="1.2" fill="#777"/><rect x="557.9" y="41.4" width="1.2" height="1.2" fill="#777"/><rect x="557.9" y="44.4" width="1.2" height="1.2" fill="#777"/><rect x="557.9" y="47.4" width="1.2" height="1.2" fill="#777"/><rect x="557.9" y="50.4" width="1.2" height="1.2" fill="#777"/><rect x="557.9" y="53.4" width="1.2" height="1.2" fill="#777"/><rect x="557.9" y="56.4" width="1.2" height="1.2" fill="#777"/><rect x="557.9" y="59.4" width="1.2" height="1.2" fill="#777"/><rect x="557.9" y="62.4" width="1.2" height="1.2" fill="#777"/><rect x="557.9" y="65.4" width="1.2" height="1.2" fill="#777"/>
<rect x="88.4" y="32.4" width="1.2" height="1.2" fill="#9c9c9c"/><rect x="88.4" y="38.4" width="1.2" height="1.2" fill="#9c9c9c"/><rect x="88.4" y="44.4" width="1.2" height="1.2" fill="#9c9c9c"/><rect x="88.4" y="50.4" width="1.2" height="1.2" fill="#9c9c9c"/><rect x="88.4" y="56.4" width="1.2" height="1.2" fill="#9c9c9c"/>
<rect x="403.4" y="32.4" width="1.2" height="1.2" fill="#9c9c9c"/><rect x="403.4" y="38.4" width="1.2" height="1.2" fill="#9c9c9c"/><rect x="403.4" y="44.4" width="1.2" height="1.2" fill="#9c9c9c"/><rect x="403.4" y="50.4" width="1.2" height="1.2" fill="#9c9c9c"/><rect x="403.4" y="56.4" width="1.2" height="1.2" fill="#9c9c9c"/>
<rect x="708.4" y="32.4" width="1.2" height="1.2" fill="#9c9c9c"/><rect x="708.4" y="38.4" width="1.2" height="1.2" fill="#9c9c9c"/><rect x="708.4" y="44.4" width="1.2" height="1.2" fill="#9c9c9c"/><rect x="708.4" y="50.4" width="1.2" height="1.2" fill="#9c9c9c"/><rect x="708.4" y="56.4" width="1.2" height="1.2" fill="#9c9c9c"/>
<rect x="101.5" y="32.5" width="24" height="27" rx="1.5" fill="#f6f6f6" stroke="#8a8a8a" stroke-width="1"/><rect x="102" y="57" width="23" height="2.5" fill="#bdbdbd"/>
<circle cx="121.6" cy="37.3" r="7" fill="url(#glow)"/>
<path d="M146 36h8l2 2h12v18h-22z" fill="#9a9a9a"/><path d="M150 33h19l-1 16h-19z" fill="#fafafa" stroke="#aaa" stroke-width="0.8"/><path d="M152 37h14M152 40h14" stroke="#bbb" stroke-width="0.8"/><path d="M147 44h28.5l-3.5 13.5h-24z" fill="url(#folder)" stroke="#5b84c0" stroke-width="0.8"/>
<rect x="203.5" y="33.5" width="24.5" height="24.5" rx="2.5" fill="url(#floppy)" stroke="#1a3aa8" stroke-width="1.1"/><rect x="207" y="34.5" width="17.5" height="9.5" fill="#eef3fc"/><rect x="209" y="48" width="12" height="9.5" fill="#dde2ea"/><rect x="211" y="50" width="2" height="4" fill="#1a3ab0"/>
<rect x="249.5" y="33.5" width="24.5" height="24.5" rx="2.5" fill="url(#floppy)" stroke="#1a3aa8" stroke-width="1.1"/><rect x="253" y="34.5" width="17.5" height="9.5" fill="#eef3fc"/><rect x="255" y="48" width="12" height="9.5" fill="#dde2ea"/><rect x="257" y="50" width="2" height="4" fill="#1a3ab0"/>
<path d="M259 51l2-4 13.5-13.5 2.5 2.5-13.5 13.5z" fill="#f09a20" stroke="#9a4a10" stroke-width="0.8"/><path d="M272.5 35.5l2-2 2.5 2.5-2 2z" fill="#e03a20"/>
<path d="M318 46.5L309.5 46.5" stroke="#111" stroke-width="6.5" stroke-linecap="round"/><path d="M318 46.5L311.5 41.0" stroke="#111" stroke-width="6.5" stroke-linecap="round"/><path d="M318 46.5L318.0 38.0" stroke="#111" stroke-width="6.5" stroke-linecap="round"/><path d="M318 46.5L324.5 41.0" stroke="#111" stroke-width="6.5" stroke-linecap="round"/><path d="M318 46.5L326.5 46.5" stroke="#111" stroke-width="6.5" stroke-linecap="round"/><rect x="306" y="44" width="24" height="14.5" rx="3" fill="#111"/><path d="M318 46.5L310.0 46.5" stroke="#f6a21c" stroke-width="2.6" stroke-linecap="round"/><circle cx="310.0" cy="46.5" r="2.2" fill="#f6a21c"/><path d="M318 46.5L311.9 41.4" stroke="#f6a21c" stroke-width="2.6" stroke-linecap="round"/><circle cx="311.9" cy="41.4" r="2.2" fill="#f6a21c"/><path d="M318 46.5L318.0 38.5" stroke="#f6a21c" stroke-width="2.6" stroke-linecap="round"/><circle cx="318.0" cy="38.5" r="2.2" fill="#f6a21c"/><path d="M318 46.5L324.1 41.4" stroke="#f6a21c" stroke-width="2.6" stroke-linecap="round"/><circle cx="324.1" cy="41.4" r="2.2" fill="#f6a21c"/><path d="M318 46.5L326.0 46.5" stroke="#f6a21c" stroke-width="2.6" stroke-linecap="round"/><circle cx="326.0" cy="46.5" r="2.2" fill="#f6a21c"/><rect x="308" y="45" width="20" height="2" fill="#f6a21c"/>
<text x="318" y="52" font-size="12" font-weight="bold" fill="#fff" text-anchor="middle" dominant-baseline="central" textLength="19" lengthAdjust="spacingAndGlyphs">SVG</text>
<rect x="365.5" y="32" width="18" height="15" rx="1" fill="#f2f2f2" stroke="#bdbdbd" stroke-width="0.8"/><path d="M361 44h27v13h-27z" fill="#dedede" stroke="#a8a8a8" stroke-width="0.8"/><rect x="361.5" y="55.5" width="26" height="3" rx="1" fill="#b9b9b9"/><rect x="363" y="48" width="22" height="2" fill="#c8c8c8"/><path d="M372.5 45l7 7" stroke="#7a7a7a" stroke-width="2.6" stroke-linecap="round"/><circle cx="369.3" cy="41" r="5.8" fill="#cfe0f6" stroke="#5a82c8" stroke-width="1.2"/><circle cx="369.3" cy="41" r="7" fill="none" stroke="#eee" stroke-width="1"/>
<path d="M421.6 45A10 10 0 1 1 429.8 56.3" fill="none" stroke="#1f8f2f" stroke-width="4.4"/><path d="M421.6 45A10 10 0 1 1 429.8 56.3" fill="none" stroke="#4bb84b" stroke-width="2.4"/><path d="M414.5 37.5V52.2H428.8z" fill="#4cb64c" stroke="#1f8a2f" stroke-width="0.9" stroke-linejoin="round"/>
<path d="M482.4 45A10 10 0 1 0 474.2 56.3" fill="none" stroke="#8fcf98" stroke-width="4.4"/><path d="M482.4 45A10 10 0 1 0 474.2 56.3" fill="none" stroke="#b3e0b6" stroke-width="2.4"/><path d="M489.5 37.5V52.2H475.2z" fill="#b0dfb2" stroke="#8cc795" stroke-width="0.9" stroke-linejoin="round"/>
<ellipse cx="531" cy="57" rx="11" ry="1.5" fill="#ddd"/><path d="M519 51l15-16 8 6-15 16z" fill="#e28080" stroke="#b86060" stroke-width="0.8"/><path d="M522 47.5l14-14.5 3 2-14 14.5z" fill="#f6e6e6"/><path d="M519 51l4-4 8 6-4 4z" fill="#f4f4f4" stroke="#aaa" stroke-width="0.6"/>
<path d="M586 46l4-16 2 1-3 15z" fill="#eee" stroke="#999" stroke-width="0.8"/><path d="M587 46l14-9 0.5 2-13 9z" fill="#eee" stroke="#999" stroke-width="0.8"/><ellipse cx="579" cy="49" rx="4.5" ry="3.2" fill="none" stroke="#e08080" stroke-width="2.2"/><ellipse cx="588" cy="55" rx="2.6" ry="4" fill="none" stroke="#e08080" stroke-width="2.2"/><path d="M573 57h5M575.5 54.5v5" stroke="#333" stroke-width="0.9"/>
<rect x="618.5" y="30.5" width="20" height="25" fill="#f4f4f4" stroke="#ccc" stroke-width="0.8"/><path d="M627.5 36.5h20v19l-5 6h-15z" fill="#f2f2f2" stroke="#bbb" stroke-width="0.8"/><path d="M631 42h13M631 45h13M631 48h13" stroke="#ccc" stroke-width="0.8"/><path d="M619.5 57h5M622 54.5v5" stroke="#333" stroke-width="0.9"/>
<rect x="665.5" y="33" width="27" height="27.5" rx="1" fill="#c58a2a" stroke="#8a5a1a" stroke-width="0.8"/><rect x="668.5" y="35.5" width="21" height="22.5" fill="#fafafa"/><rect x="673.5" y="30" width="11" height="5" rx="1.5" fill="#8a8a80"/><path d="M672 41h14M672 44h14M672 47h12M672 50h10" stroke="#bbb" stroke-width="0.8"/><path d="M684 58l5-5v5z" fill="#aaa"/>
<path d="M724 56l2.5-7 13-13 4.5 4.5-13 13z" fill="#d83a20" stroke="#7a2a10" stroke-width="0.9"/><path d="M724 56l2.5-7 4.5 4.5z" fill="#f0d0a0"/><path d="M721.5 56.5h21" stroke="#e00" stroke-width="1.2"/>
<rect x="765.5" y="35.5" width="29" height="22" rx="1" fill="#000a80" stroke="#111" stroke-width="1"/><path d="M769 54h21.5V38.5z" fill="none" stroke="#ddd" stroke-width="1.2" stroke-dasharray="2.5 1.5"/><path d="M769 54L790.5 38.5" stroke="#fff" stroke-width="1.2"/>
<rect x="805" y="25" width="43" height="42.5" rx="5" fill="#b9b9b9"/><circle cx="826" cy="45.5" r="13" fill="none" stroke="#000" stroke-width="2.2"/><path d="M812 59.5L840 31.5" stroke="#1020e0" stroke-width="1.3"/>
<rect x="862" y="25" width="43" height="42.5" rx="5" fill="#b9b9b9"/>
<rect x="870" y="33" width="2" height="2" fill="#111"/><rect x="870" y="41" width="2" height="2" fill="#111"/><rect x="870" y="49" width="2" height="2" fill="#111"/><rect x="870" y="57" width="2" height="2" fill="#111"/><rect x="878" y="33" width="2" height="2" fill="#111"/><rect x="878" y="41" width="2" height="2" fill="#111"/><rect x="878" y="49" width="2" height="2" fill="#111"/><rect x="878" y="57" width="2" height="2" fill="#111"/><rect x="886" y="33" width="2" height="2" fill="#111"/><rect x="886" y="41" width="2" height="2" fill="#111"/><rect x="886" y="49" width="2" height="2" fill="#111"/><rect x="886" y="57" width="2" height="2" fill="#111"/><rect x="894" y="33" width="2" height="2" fill="#111"/><rect x="894" y="41" width="2" height="2" fill="#111"/><rect x="894" y="49" width="2" height="2" fill="#111"/><rect x="894" y="57" width="2" height="2" fill="#111"/>
<use href="#magh" x="924.9" y="30.1" width="32" height="32"/>
<circle cx="936.4" cy="41.6" r="9" fill="url(#mag)"/>
<use href="#magh" x="970.5" y="30.1" width="32" height="32"/>
<circle cx="982" cy="41.6" r="9" fill="url(#mag)"/>
<use href="#magh" x="1016.9000000000001" y="30.1" width="32" height="32"/>
<circle cx="1028.4" cy="41.6" r="9" fill="url(#mag)"/>
<use href="#magh" x="1062.5" y="30.1" width="32" height="32"/>
<circle cx="1074" cy="41.6" r="9" fill="url(#magr)"/>
<use href="#magh" x="1108.5" y="30.1" width="32" height="32"/>
<circle cx="1120" cy="41.6" r="9" fill="url(#mag)"/>
<path d="M936.4 35.5v12.2M930.3 41.6h12.2" stroke="#fff" stroke-width="3.2"/>
<path d="M976 41.6h12" stroke="#fff" stroke-width="3.2"/>
<path d="M1022.5 39v-3.5h3.5M1031 35.5h3.5V39M1034.5 44.5V48h-3.5M1026 48h-3.5v-3.5" fill="none" stroke="#fff" stroke-width="2.2"/><rect x="1025.5" y="38.5" width="6" height="6" fill="#9fc2ee"/>
<path d="M1068 39v-3.5h3.5M1076.5 35.5h3.5V39M1080 44.5V48h-3.5M1071.5 48h-3.5v-3.5" fill="none" stroke="#e86a6a" stroke-width="2.2"/>
<path d="M1113.5 41.6l6-5.5v3.5h7v4h-7v3.5z" fill="#fff"/>
<rect x="1154.5" y="30.5" width="27" height="16.5" fill="#fff" stroke="#6a8ac8" stroke-width="1.1"/>
<use href="#magh" x="1156.5" y="32.5" width="30" height="30"/><circle cx="1167.3" cy="43.3" r="8.5" fill="url(#mag)"/>
<use href="#magh" x="1201.5" y="30.1" width="32" height="32"/><circle cx="1213" cy="41.6" r="9" fill="url(#mag)"/>
<path d="M1213 29.5l3 3.5h-2v6.5h6.5v-2l3.5 3.5-3.5 3.5v-2h-6.5v6.5h2l-3 3.5-3-3.5h2v-6.5h-6.5v2l-3.5-3.5 3.5-3.5v2h6.5v-6.5h-2z" fill="#fff" stroke="#5a8ad8" stroke-width="0.9"/>
<rect x="7.2" y="77.0" width="1.2" height="1.2" fill="#9c9c9c"/><rect x="7.2" y="83.1" width="1.2" height="1.2" fill="#9c9c9c"/><rect x="7.2" y="89.19999999999999" width="1.2" height="1.2" fill="#9c9c9c"/><rect x="7.2" y="95.29999999999998" width="1.2" height="1.2" fill="#9c9c9c"/>
<rect x="15" y="73" width="42.5" height="31" rx="5" fill="url(#tbtn)" stroke="#8a8a8a" stroke-width="1.6"/>
<path d="M0 0V17.5L4.2 13.6L7.5 20.8L10.5 19.4L7.4 12.3H13z" transform="translate(31 79.5) scale(0.9)" fill="#fff" stroke="#222" stroke-width="1.1" stroke-linejoin="round"/>
<rect x="66.9" y="71.4" width="1.2" height="1.2" fill="#666"/><rect x="66.9" y="74.4" width="1.2" height="1.2" fill="#666"/><rect x="66.9" y="77.4" width="1.2" height="1.2" fill="#666"/><rect x="66.9" y="80.4" width="1.2" height="1.2" fill="#666"/><rect x="66.9" y="83.4" width="1.2" height="1.2" fill="#666"/><rect x="66.9" y="86.4" width="1.2" height="1.2" fill="#666"/><rect x="66.9" y="89.4" width="1.2" height="1.2" fill="#666"/><rect x="66.9" y="92.4" width="1.2" height="1.2" fill="#666"/><rect x="66.9" y="95.4" width="1.2" height="1.2" fill="#666"/><rect x="66.9" y="98.4" width="1.2" height="1.2" fill="#666"/><rect x="66.9" y="101.4" width="1.2" height="1.2" fill="#666"/>
<rect x="7.5" y="116" width="1.4" height="1.4" fill="#a8a8a8"/><rect x="13.5" y="116" width="1.4" height="1.4" fill="#a8a8a8"/><rect x="19.5" y="116" width="1.4" height="1.4" fill="#a8a8a8"/><rect x="25.5" y="116" width="1.4" height="1.4" fill="#a8a8a8"/><rect x="31.5" y="116" width="1.4" height="1.4" fill="#a8a8a8"/><rect x="37.5" y="116" width="1.4" height="1.4" fill="#a8a8a8"/><rect x="43.5" y="116" width="1.4" height="1.4" fill="#a8a8a8"/><rect x="49.5" y="116" width="1.4" height="1.4" fill="#a8a8a8"/><rect x="55.5" y="116" width="1.4" height="1.4" fill="#a8a8a8"/><rect x="61.5" y="116" width="1.4" height="1.4" fill="#a8a8a8"/>
<rect x="1.75" y="122.95" width="33.3" height="32.89999999999999" fill="url(#tbtn)" stroke="#8f8f8f" stroke-width="1.5"/>
<rect x="36.95" y="122.95" width="33.099999999999994" height="32.89999999999999" fill="url(#tbtn)" stroke="#8f8f8f" stroke-width="1.5"/>
<rect x="1.75" y="157.75" width="33.3" height="32.900000000000006" fill="url(#tbtn)" stroke="#8f8f8f" stroke-width="1.5"/>
<rect x="36.95" y="157.75" width="33.099999999999994" height="32.900000000000006" fill="url(#tbtn)" stroke="#8f8f8f" stroke-width="1.5"/>
<rect x="1.75" y="192.55" width="33.3" height="32.89999999999998" fill="url(#tbtn)" stroke="#8f8f8f" stroke-width="1.5"/>
<rect x="36.95" y="192.55" width="33.099999999999994" height="32.89999999999998" fill="url(#tbtn)" stroke="#8f8f8f" stroke-width="1.5"/>
<rect x="1.75" y="227.35" width="33.3" height="32.900000000000006" fill="url(#tbtn)" stroke="#8f8f8f" stroke-width="1.5"/>
<rect x="36.95" y="227.35" width="33.099999999999994" height="32.900000000000006" fill="url(#tbtn)" stroke="#8f8f8f" stroke-width="1.5"/>
<rect x="1.75" y="262.15" width="33.3" height="33.10000000000002" fill="url(#tbtn)" stroke="#8f8f8f" stroke-width="1.5"/>
<rect x="1.75" y="305.95" width="33.3" height="32.80000000000001" fill="url(#tbtn)" stroke="#8f8f8f" stroke-width="1.5"/>
<rect x="1.75" y="340.75" width="33.3" height="33.0" fill="url(#tbtn)" stroke="#8f8f8f" stroke-width="1.5"/>
<rect x="1.75" y="383.95" width="33.3" height="32.80000000000001" fill="url(#tbtn)" stroke="#8f8f8f" stroke-width="1.5"/>
<rect x="1.75" y="418.75" width="33.3" height="33.0" fill="url(#tbtn)" stroke="#8f8f8f" stroke-width="1.5"/>
<rect x="1.75" y="461.75" width="33.3" height="33.0" fill="url(#tbtn)" stroke="#8f8f8f" stroke-width="1.5"/>
<rect x="36.95" y="305.95" width="33.099999999999994" height="32.80000000000001" fill="url(#tbtn)" stroke="#8f8f8f" stroke-width="1.5"/>
<rect x="36.95" y="383.95" width="33.099999999999994" height="32.80000000000001" fill="url(#tbtn)" stroke="#8f8f8f" stroke-width="1.5"/>
<rect x="36.95" y="418.75" width="33.099999999999994" height="33.0" fill="url(#tbtn)" stroke="#8f8f8f" stroke-width="1.5"/>
<path d="M31.799999999999997 152.6V147.6L26.799999999999997 152.6z" fill="#000"/>
<path d="M66.8 152.6V147.6L61.8 152.6z" fill="#000"/>
<path d="M31.799999999999997 187.4V182.4L26.799999999999997 187.4z" fill="#000"/>
<path d="M66.8 187.4V182.4L61.8 187.4z" fill="#000"/>
<path d="M31.799999999999997 222.2V217.2L26.799999999999997 222.2z" fill="#000"/>
<path d="M66.8 222.2V217.2L61.8 222.2z" fill="#000"/>
<path d="M31.799999999999997 257V252L26.799999999999997 257z" fill="#000"/>
<path d="M66.8 257V252L61.8 257z" fill="#000"/>
<path d="M31.799999999999997 292V287L26.799999999999997 292z" fill="#000"/>
<path d="M66.8 335.5V330.5L61.8 335.5z" fill="#000"/>
<path d="M31.799999999999997 413.5V408.5L26.799999999999997 413.5z" fill="#000"/>
<path d="M66.8 448.5V443.5L61.8 448.5z" fill="#000"/>
<path d="M31.799999999999997 491.5V486.5L26.799999999999997 491.5z" fill="#000"/>
<path d="M8 131.4h7M11.5 128v7M22 140.4h7M25.5 137v7M9 146.4h7M12.5 143v7" fill="none" stroke="#222" stroke-width="1.2"/>
<path d="M41.5 144.6L65 134" fill="none" stroke="#222" stroke-width="1.2"/>
<path d="M7.4 183C9 172 17 164 27.7 163.4" fill="none" stroke="#222" stroke-width="1.2"/>
<circle cx="52.6" cy="173.3" r="10" fill="none" stroke="#222" stroke-width="1.2"/>
<ellipse cx="18" cy="208.6" rx="12.5" ry="5.5" transform="rotate(-40 18 208.6)" fill="none" stroke="#222" stroke-width="1.2"/>
<path d="M42 203c2-4 8 0 11 5s6 10 9 6 1-12-3-11-7 10-9 13-7-2-8-13z" fill="none" stroke="#222" stroke-width="1.2"/>
<path d="M14 238.5c-5 0-5 8 0 8H28" fill="none" stroke="#222" stroke-width="1.2"/>
<path d="M41 236l3-5h7l3 5-3 5h-7z" fill="none" stroke="#222" stroke-width="1.2"/><path d="M57 244l5-8 5 8z" fill="none" stroke="#222" stroke-width="1.2"/><rect x="41.5" y="248" width="14" height="6.5" fill="none" stroke="#222" stroke-width="1.2"/>
<path d="M7.5 280l5-7h15.5v13h-20.5z" fill="#f0f0f0" stroke="#222" stroke-width="1.1"/><path d="M9 285l6-8M12 286l8-11M17 286l9-12M22 286l6-8" stroke="#888" stroke-width="0.6"/><circle cx="20.5" cy="279" r="3" fill="#f4f4f4" stroke="#222" stroke-width="1.1"/>
<text x="18" y="323" font-family="Liberation Serif" font-size="27" fill="#111" text-anchor="middle" dominant-baseline="central">A</text>
<path d="M44 331v-18M64 331v-18M44.5 315h19" fill="none" stroke="#222" stroke-width="1.2"/><path d="M44.5 315l4-2.2v4.4zM63.5 315l-4-2.2v4.4z" fill="#222"/>
<rect x="7.5" y="348" width="21" height="15" fill="#fff" stroke="#222" stroke-width="1.5"/><path d="M9.5 361l5-6 3 3 3-4 6 7z" fill="#111"/><circle cx="24" cy="351.5" r="1.5" fill="#111"/>
<path d="M5.5 411v-14l14 14z" fill="none" stroke="#222" stroke-width="1.2"/><path d="M8.5 408v-4.5l4.5 4.5z" fill="none" stroke="#222" stroke-width="1"/><path d="M10 388l3-2 6 7-3 2z" fill="#e03020"/><path d="M25.5 386l-3 18M25.5 386l3 18" stroke="#222" stroke-width="1"/>
<rect x="41.5" y="397" width="24" height="8" rx="2" fill="#fff" stroke="#444" stroke-width="1"/><path d="M44 397v3M47 397v2M50 397v3M53 397v2M56 397v3M59 397v2M62 397v3" stroke="#444" stroke-width="0.6"/>
<rect x="7.5" y="426" width="16" height="13" fill="#f0ecd8" stroke="#888" stroke-width="0.8"/><circle cx="21.5" cy="437.5" r="7" fill="#f0ecd8" fill-opacity="0.8" stroke="#888" stroke-width="0.8"/><circle cx="7.5" cy="439" r="1.2" fill="#f08080"/>
<path d="M41 435L59 425" stroke="#e82a2a" stroke-width="1.3"/><path d="M0 0V13.5L3.2 10.5L5.8 16L8 15L5.6 9.5H10z" transform="translate(51 431)" fill="#fff" stroke="#333" stroke-width="0.9"/>
<path d="M7 471l10-5 9 4v12l-10 5-9-4z" fill="none" stroke="#222" stroke-width="1.2"/><path d="M7 471l9 4 10-5M16 475v12" fill="none" stroke="#222" stroke-width="1.2"/>
<rect x="1463" y="116.3" width="1.4" height="1.4" fill="#a8a8a8"/><rect x="1469" y="116.3" width="1.4" height="1.4" fill="#a8a8a8"/><rect x="1475" y="116.3" width="1.4" height="1.4" fill="#a8a8a8"/><rect x="1481" y="116.3" width="1.4" height="1.4" fill="#a8a8a8"/><rect x="1487" y="116.3" width="1.4" height="1.4" fill="#a8a8a8"/>
<rect x="-0.6" y="-0.6" width="1.2" height="1.2" fill="#9a9a9a"/>
<rect x="1456.2" y="120" width="42.2" height="42.80000000000001" rx="6" fill="#b7b7b7"/>
<rect x="1456.2" y="167.3" width="42.2" height="42.69999999999999" rx="6" fill="#b7b7b7"/>
<rect x="1456.2" y="417.8" width="42.2" height="42.69999999999999" rx="6" fill="#b7b7b7"/>
<rect x="1458" y="262" width="1" height="1" fill="#777"/><rect x="1458" y="410.3" width="1" height="1" fill="#777"/><rect x="1461" y="262" width="1" height="1" fill="#777"/><rect x="1461" y="410.3" width="1" height="1" fill="#777"/><rect x="1464" y="262" width="1" height="1" fill="#777"/><rect x="1464" y="410.3" width="1" height="1" fill="#777"/><rect x="1467" y="262" width="1" height="1" fill="#777"/><rect x="1467" y="410.3" width="1" height="1" fill="#777"/><rect x="1470" y="262" width="1" height="1" fill="#777"/><rect x="1470" y="410.3" width="1" height="1" fill="#777"/><rect x="1473" y="262" width="1" height="1" fill="#777"/><rect x="1473" y="410.3" width="1" height="1" fill="#777"/><rect x="1476" y="262" width="1" height="1" fill="#777"/><rect x="1476" y="410.3" width="1" height="1" fill="#777"/><rect x="1479" y="262" width="1" height="1" fill="#777"/><rect x="1479" y="410.3" width="1" height="1" fill="#777"/><rect x="1482" y="262" width="1" height="1" fill="#777"/><rect x="1482" y="410.3" width="1" height="1" fill="#777"/><rect x="1485" y="262" width="1" height="1" fill="#777"/><rect x="1485" y="410.3" width="1" height="1" fill="#777"/><rect x="1488" y="262" width="1" height="1" fill="#777"/><rect x="1488" y="410.3" width="1" height="1" fill="#777"/><rect x="1491" y="262" width="1" height="1" fill="#777"/><rect x="1491" y="410.3" width="1" height="1" fill="#777"/><rect x="1494" y="262" width="1" height="1" fill="#777"/><rect x="1494" y="410.3" width="1" height="1" fill="#777"/><rect x="1497" y="262" width="1" height="1" fill="#777"/><rect x="1497" y="410.3" width="1" height="1" fill="#777"/>
<use href="#win" x="1463" y="127.2" width="28" height="28"/>
<use href="#win" x="1463" y="174.4" width="28" height="28"/>
<use href="#win" x="1463" y="221.5" width="28" height="28"/>
<use href="#win" x="1463" y="277.2" width="28" height="28"/>
<use href="#win" x="1463" y="323.1" width="28" height="28"/>
<use href="#win" x="1463" y="369.2" width="28" height="28"/>
<use href="#win" x="1463" y="425.3" width="28" height="28"/>
<use href="#win" x="1463" y="472" width="28" height="28"/>
<path d="M1469 141l7-4v12l-7 4z" fill="#aaa" stroke="#555" stroke-width="0.6"/><path d="M1473 140l10-4v12l-10 4z" fill="#eee" stroke="#555" stroke-width="0.7"/><path d="M1476 147l4-7 1 6z" fill="none" stroke="#e33" stroke-width="0.9"/>
<rect x="1469" y="184" width="12" height="9" fill="#f0e8c0" stroke="#555" stroke-width="0.7"/><circle cx="1481" cy="193" r="5" fill="#f0e8c0" fill-opacity="0.85" stroke="#555" stroke-width="0.7"/>
<rect x="1469.5" y="231" width="16" height="10" rx="2" fill="#f4f4f4" stroke="#c8d4ea" stroke-width="1"/>
<rect x="1466" y="286" width="3.5" height="3" fill="#111"/><rect x="1466" y="291" width="3.5" height="3" fill="#111"/><rect x="1466" y="296" width="3.5" height="3" fill="#111"/><rect x="1472" y="286" width="15" height="3" fill="none" stroke="#444" stroke-width="0.6"/><rect x="1472" y="291" width="15" height="3" fill="none" stroke="#444" stroke-width="0.6"/><rect x="1472" y="296" width="15" height="3" fill="none" stroke="#444" stroke-width="0.6"/>
<path d="M1469 332c0-2 16-2 16 0 0 2-4 5-6 7v8l-3-2v-6c-2-2-7-5-7-7z" fill="#9a9a9a" stroke="#555" stroke-width="0.6"/>
<path d="M1469 381l5 2v7l-5 2z" fill="none" stroke="#444" stroke-width="0.8"/><rect x="1474" y="383.5" width="10" height="7" fill="#aaa"/><path d="M1466 387h20" stroke="#e88" stroke-width="0.5"/>
<path d="M1466 436h8M1466 439h8M1466 442h8M1466 445h8" stroke="#888" stroke-width="0.6"/><rect x="1463.5" y="447.5" width="27" height="5" fill="none" stroke="#444" stroke-width="0.6"/>
<rect x="1472" y="483" width="11" height="13" rx="1" fill="#c58a2a"/><rect x="1473.5" y="485" width="8" height="10" fill="#f8f8f8"/><rect x="1474.5" y="481.5" width="6" height="3" fill="#8a8a80"/>
<circle cx="102" cy="119" r="5.5" fill="#f4f4f4" stroke="#2a3a8a" stroke-width="1.8"/><path d="M103 118l4 5" stroke="#f0b020" stroke-width="2"/><circle cx="107.3" cy="123.4" r="1" fill="#e05030"/>
<text x="606.5" y="119.5" font-size="12.5" fill="#1a1a1a" text-anchor="start" dominant-baseline="central" font-weight="normal"  textLength="51" lengthAdjust="spacingAndGlyphs">* park.dxf</text>
<rect x="1143" y="303.3" width="8" height="278.2" rx="4" fill="#7f7f7f"/>
<rect x="168.5" y="737" width="856.5" height="8" rx="4" fill="#7f7f7f"/>
<text x="1119" y="740" font-size="13" fill="#111" text-anchor="start" dominant-baseline="central" font-weight="normal"  textLength="34" lengthAdjust="spacingAndGlyphs">1 &lt; 10</text>
<text x="77" y="758.5" font-size="13" fill="#1a22d8" font-style="italic" dominant-baseline="central" textLength="80" lengthAdjust="spacingAndGlyphs">Comando: gb</text>
<text x="73" y="785" font-size="13.5" fill="#111" text-anchor="start" dominant-baseline="central" font-weight="normal"  textLength="61" lengthAdjust="spacingAndGlyphs">Comando:</text>
<rect x="1127.5" y="772.5" width="25" height="24.5" rx="1" fill="#efefef" stroke="#c4c4c4" stroke-width="1"/><rect x="1133.5" y="780.5" width="13" height="9" fill="#f4f4f4" stroke="#222" stroke-width="0.9"/><rect x="1133.5" y="780.5" width="13" height="2.2" fill="#111"/>
<text x="2" y="811.8" font-size="10.5" fill="#1a1a1a" text-anchor="start" dominant-baseline="central" font-weight="normal"  textLength="74" lengthAdjust="spacingAndGlyphs">47.0937,12.7851</text>
<text x="2" y="832.5" font-size="10.5" fill="#1a1a1a" text-anchor="start" dominant-baseline="central" font-weight="normal"  textLength="82" lengthAdjust="spacingAndGlyphs">@47.0937,12.7851</text>
<rect x="253.5" y="802" width="1" height="41" fill="#777"/>
<text x="256" y="811.8" font-size="10.5" fill="#1a1a1a" text-anchor="start" dominant-baseline="central" font-weight="normal"  textLength="59" lengthAdjust="spacingAndGlyphs">48.7984&lt;15°</text>
<text x="256" y="832.5" font-size="10.5" fill="#1a1a1a" text-anchor="start" dominant-baseline="central" font-weight="normal"  textLength="67" lengthAdjust="spacingAndGlyphs">@48.7984&lt;15°</text>
<circle cx="510" cy="822" r="2.8" fill="#c4c4c4"/><circle cx="943.2" cy="822" r="2.8" fill="#c4c4c4"/><circle cx="1272" cy="822" r="2.8" fill="#c4c4c4"/>
<text x="949" y="822" font-size="10.5" fill="#1a1a1a" text-anchor="start" dominant-baseline="central" font-weight="normal"  textLength="119" lengthAdjust="spacingAndGlyphs">Nessun entità selezionate.</text>
<rect x="717.5" y="806" width="17" height="30" rx="8.5" fill="#fff" stroke="#555" stroke-width="1"/><path d="M717.5 820.5h17M726 806v14.5" stroke="#555" stroke-width="0.9"/><rect x="724" y="809.5" width="4" height="7" rx="2" fill="#fff" stroke="#555" stroke-width="0.9"/>
<svg x="95" y="155" width="1043" height="577" viewBox="95 155 1043 577" style="position:static;overflow:hidden">
<path d="M423.1 402.3C426.8 402.5 437.2 403.8 445.0 403.6C452.8 403.4 462.5 402.6 470.0 401.0C477.5 399.4 484.2 397.0 490.0 394.0C495.8 391.0 500.7 387.3 505.0 383.0C509.3 378.7 512.3 373.4 516.0 368.0C519.7 362.6 522.3 356.6 527.0 350.5C531.7 344.4 538.0 336.1 544.0 331.3C550.0 326.5 556.1 324.2 563.2 321.7C570.3 319.2 579.9 317.4 586.7 316.4C593.5 315.4 597.0 314.4 604.0 315.6C611.0 316.8 621.3 319.7 629.0 323.5C636.7 327.3 643.6 332.0 650.4 338.4C657.2 344.8 664.4 354.1 669.6 361.9C674.8 369.7 678.9 377.2 681.4 385.4C683.9 393.6 684.4 403.2 684.6 411.0C684.8 418.8 684.0 425.2 682.4 432.3C680.8 439.4 677.1 447.6 675.0 453.6C672.9 459.7 670.8 464.4 669.6 468.6C668.4 472.8 667.2 474.4 667.9 479.0C668.6 483.6 670.5 490.6 673.6 496.0C676.8 501.4 682.8 506.1 686.8 511.2C690.8 516.2 694.8 521.2 697.3 526.3C699.8 531.3 701.0 536.9 702.0 541.5C703.0 546.1 702.8 551.9 703.0 554.0Q704 561.5 710 560.5C725 557 745 551 760 551L792 551M421.6 422.0C424.7 422.2 432.8 423.1 440.0 423.2C447.2 423.2 456.7 423.4 465.0 422.3C473.3 421.2 481.8 420.2 490.0 416.5C498.2 412.8 508.3 404.8 514.0 400.0C519.7 395.2 520.1 393.4 524.0 388.0C527.9 382.6 533.4 373.5 537.6 367.6C541.8 361.7 545.0 356.8 549.3 352.7C553.6 348.6 557.9 345.7 563.2 343.0C568.5 340.3 575.2 338.0 581.3 336.7C587.4 335.4 593.1 334.2 600.0 335.2C606.9 336.2 615.7 339.0 622.7 342.7C629.7 346.4 636.2 351.6 641.9 357.6C647.6 363.7 653.1 371.5 656.8 379.0C660.5 386.5 663.0 394.9 664.3 402.4C665.5 409.9 665.0 417.4 664.3 423.8C663.6 430.2 662.0 435.1 660.0 440.8C658.0 446.5 654.4 452.1 652.5 458.0C650.6 463.9 648.4 469.4 648.7 476.0C649.1 482.6 651.4 491.1 654.6 497.9C657.8 504.7 663.8 510.5 667.9 516.8C672.0 523.1 676.8 530.1 679.3 535.8C681.8 541.5 682.9 546.0 683.0 551.0C683.1 556.0 682.7 561.1 680.2 566.1C677.7 571.1 673.8 577.0 667.9 581.3C662.0 585.6 654.5 592.3 645.0 591.7C635.5 591.1 620.4 582.5 610.8 577.7C601.2 572.9 595.1 566.0 587.3 563.0C579.5 560.0 570.9 558.2 563.9 559.4C556.9 560.6 550.6 564.9 545.0 570.0C539.4 575.1 533.8 584.5 530.0 590.0C526.2 595.5 523.9 599.0 522.0 603.0C520.1 607.0 519.0 611.9 518.4 613.7M537.2 614.4C537.9 612.0 539.4 604.4 541.5 600.0C543.6 595.6 545.0 591.5 550.0 588.0C555.0 584.5 563.5 579.2 571.2 579.2C578.9 579.2 588.5 584.1 596.1 588.0C603.7 591.9 608.1 598.9 616.7 602.7C625.4 606.5 636.6 612.4 648.0 611.0C659.4 609.6 673.8 599.5 685.0 594.5C696.2 589.5 705.5 584.9 715.3 581.3C725.1 577.7 735.8 574.5 743.7 572.7C751.6 571.0 756.6 570.7 762.6 570.8C768.6 570.9 774.5 571.9 780.0 573.5C785.5 575.1 793.2 579.1 795.8 580.2" fill="none" stroke="#ad8549" stroke-width="1"/>
<path d="M409.4 277.5L715.2 261L794.5 550.5L791.9 550.8L713 267L409.8 283.6M738.2 254.5L814 530C820 550 824 570 823.5 582C822 600 816 616 810.2 631.6M779.5 629.7L795.2 580.2L798.4 580.8L782.8 629.7" fill="none" stroke="#c6c6c6" stroke-width="1.05"/>
<g transform="translate(544 297.8) rotate(-27)"><rect x="-15.0" y="-4.0" width="30" height="8" rx="1.2" fill="#7a7a7a" stroke="#cfcfcf" stroke-width="1"/><path d="M-13.0 -3.0l2 6M-10.4 -3.0l2 6M-7.8 -3.0l2 6M-5.2 -3.0l2 6M-2.6 -3.0l2 6M-0.0 -3.0l2 6M2.6 -3.0l2 6M5.2 -3.0l2 6M7.8 -3.0l2 6M10.4 -3.0l2 6M13.0 -3.0l2 6M-13.5 -1.5H13.5M-13.5 1.5H13.5M0 -4.0V4.0" stroke="#c8c8c8" stroke-width="0.6" fill="none"/></g>
<g transform="translate(591.5 287) rotate(-1)"><rect x="-15.5" y="-4.5" width="31" height="9" rx="1.2" fill="#7a7a7a" stroke="#cfcfcf" stroke-width="1"/><path d="M-13.5 -3.5l2 7M-10.9 -3.5l2 7M-8.3 -3.5l2 7M-5.7 -3.5l2 7M-3.1 -3.5l2 7M-0.5 -3.5l2 7M2.1 -3.5l2 7M4.7 -3.5l2 7M7.3 -3.5l2 7M9.9 -3.5l2 7M12.5 -3.5l2 7M-14.0 -1.5H14.0M-14.0 1.5H14.0M0 -4.5V4.5" stroke="#c8c8c8" stroke-width="0.6" fill="none"/></g>
<g transform="translate(640 295.5) rotate(22)"><rect x="-15.0" y="-4.0" width="30" height="8" rx="1.2" fill="#7a7a7a" stroke="#cfcfcf" stroke-width="1"/><path d="M-13.0 -3.0l2 6M-10.4 -3.0l2 6M-7.8 -3.0l2 6M-5.2 -3.0l2 6M-2.6 -3.0l2 6M-0.0 -3.0l2 6M2.6 -3.0l2 6M5.2 -3.0l2 6M7.8 -3.0l2 6M10.4 -3.0l2 6M13.0 -3.0l2 6M-13.5 -1.5H13.5M-13.5 1.5H13.5M0 -4.0V4.0" stroke="#c8c8c8" stroke-width="0.6" fill="none"/></g>
<g transform="translate(681.5 322.8) rotate(42)"><rect x="-15.0" y="-4.0" width="30" height="8" rx="1.2" fill="#7a7a7a" stroke="#cfcfcf" stroke-width="1"/><path d="M-13.0 -3.0l2 6M-10.4 -3.0l2 6M-7.8 -3.0l2 6M-5.2 -3.0l2 6M-2.6 -3.0l2 6M-0.0 -3.0l2 6M2.6 -3.0l2 6M5.2 -3.0l2 6M7.8 -3.0l2 6M10.4 -3.0l2 6M13.0 -3.0l2 6M-13.5 -1.5H13.5M-13.5 1.5H13.5M0 -4.0V4.0" stroke="#c8c8c8" stroke-width="0.6" fill="none"/></g>
<g transform="translate(706.5 365.2) rotate(66)"><rect x="-14.5" y="-4.0" width="29" height="8" rx="1.2" fill="#7a7a7a" stroke="#cfcfcf" stroke-width="1"/><path d="M-12.5 -3.0l2 6M-9.9 -3.0l2 6M-7.3 -3.0l2 6M-4.7 -3.0l2 6M-2.1 -3.0l2 6M0.5 -3.0l2 6M3.1 -3.0l2 6M5.7 -3.0l2 6M8.3 -3.0l2 6M10.9 -3.0l2 6M13.5 -3.0l2 6M-13.0 -1.5H13.0M-13.0 1.5H13.0M0 -4.0V4.0" stroke="#c8c8c8" stroke-width="0.6" fill="none"/></g>
<g transform="translate(713 413.5) rotate(95)"><rect x="-14.5" y="-4.25" width="29" height="8.5" rx="1.2" fill="#7a7a7a" stroke="#cfcfcf" stroke-width="1"/><path d="M-12.5 -3.25l2 6.5M-9.9 -3.25l2 6.5M-7.3 -3.25l2 6.5M-4.7 -3.25l2 6.5M-2.1 -3.25l2 6.5M0.5 -3.25l2 6.5M3.1 -3.25l2 6.5M5.7 -3.25l2 6.5M8.3 -3.25l2 6.5M10.9 -3.25l2 6.5M13.5 -3.25l2 6.5M-13.0 -1.5H13.0M-13.0 1.5H13.0M0 -4.25V4.25" stroke="#c8c8c8" stroke-width="0.6" fill="none"/></g>
<g transform="translate(574.5 543) rotate(4)"><rect x="-15.0" y="-4.25" width="30" height="8.5" rx="1.2" fill="#7a7a7a" stroke="#cfcfcf" stroke-width="1"/><path d="M-13.0 -3.25l2 6.5M-10.4 -3.25l2 6.5M-7.8 -3.25l2 6.5M-5.2 -3.25l2 6.5M-2.6 -3.25l2 6.5M-0.0 -3.25l2 6.5M2.6 -3.25l2 6.5M5.2 -3.25l2 6.5M7.8 -3.25l2 6.5M10.4 -3.25l2 6.5M13.0 -3.25l2 6.5M-13.5 -1.5H13.5M-13.5 1.5H13.5M0 -4.25V4.25" stroke="#c8c8c8" stroke-width="0.6" fill="none"/></g>
<circle cx="661.9" cy="306.9" r="3.6" fill="none" stroke="#e0e0e0" stroke-width="1.2"/><path d="M664.4 303.9l1.5 -1.5" stroke="#ccc" stroke-width="0.8"/>
<circle cx="602.7" cy="545.8" r="3.6" fill="none" stroke="#e0e0e0" stroke-width="1.2"/><path d="M605.2 542.8l1.5 -1.5" stroke="#ccc" stroke-width="0.8"/>
<circle cx="779.8" cy="543" r="3.6" fill="none" stroke="#e0e0e0" stroke-width="1.2"/><path d="M782.3 540l1.5 -1.5" stroke="#ccc" stroke-width="0.8"/>
<path d="M514.3 352.0 514.8 355.2 511.0 356.1 513.3 359.4 511.6 361.9 514.3 363.8 511.8 367.0 511.3 371.3 507.1 373.5 509.0 376.3 506.4 377.7 507.1 380.5 504.9 381.3 503.6 384.1 501.5 382.3 498.3 383.4 496.4 380.5 493.1 382.3 491.1 378.9 489.1 381.8 486.2 381.7 485.7 384.5 483.0 383.8 481.8 386.6 478.3 384.7 474.5 385.7 470.5 384.2 468.4 386.1 466.9 384.1 463.8 385.0 464.1 382.3 461.1 380.7 462.7 377.8 459.9 376.2 461.3 373.0 457.7 372.7 455.8 369.8 452.3 372.1 451.6 368.5 447.6 369.0 449.0 366.3 446.4 364.7 448.5 362.7 446.9 360.5 448.9 356.4 446.0 352.4 449.1 349.9 449.2 346.6 452.5 347.0 452.6 343.5 455.8 343.5 454.9 340.4 456.4 337.4 453.2 335.5 455.6 332.9 453.2 329.8 455.9 329.5 456.2 326.3 459.0 328.1 460.4 325.3 464.8 325.5 466.8 321.7 470.6 322.3 474.9 319.7 478.6 322.7 481.2 320.1 484.3 319.8 485.4 316.8 488.6 317.7 490.7 314.7 491.8 317.4 495.2 316.7 494.6 320.0 497.8 321.3 496.9 324.2 499.4 325.0 500.8 329.0 505.1 329.7 505.3 333.6 507.9 336.1 508.9 340.7 512.3 339.2 513.2 342.3 516.6 341.9 516.8 344.6 518.9 346.5 516.9 347.8 517.6 351.4zM493.0 353.2 494.2 350.7 496.5 351.5 498.0 349.7 499.9 350.3 502.2 349.0 504.1 350.8 506.4 349.5 508.3 351.3 511.1 350.1 511.2 353.0 513.7 354.0 514.0 355.7 514.2 358.4 511.6 358.9 511.5 361.3 510.0 361.6 507.5 363.1 505.7 361.0 503.3 361.9 501.5 360.1 499.0 360.7 498.0 358.3 495.3 358.0 494.3 355.6 491.4 354.4zM490.1 357.9 492.5 357.4 493.4 359.8 496.0 359.0 496.6 361.3 499.1 361.9 499.6 364.3 502.1 364.8 502.4 367.4 504.9 368.5 503.6 370.6 504.9 372.8 504.0 374.0 501.9 376.2 499.4 374.9 496.5 376.4 496.4 373.8 494.1 372.8 493.8 370.4 491.6 369.4 491.7 367.1 489.5 365.3 490.6 362.7 488.4 360.8 489.2 359.0zM483.7 359.7 486.6 361.4 486.0 364.2 487.2 366.6 485.8 368.7 486.7 371.1 485.3 372.4 484.2 375.0 481.4 374.5 479.4 377.2 479.0 374.6 476.6 374.5 475.9 372.3 473.2 371.2 475.2 369.4 474.7 366.9 476.7 365.1 476.2 362.1 478.8 361.8 479.7 359.3 481.7 359.0zM479.1 356.2 478.9 358.9 476.2 359.9 476.0 362.6 473.8 363.6 473.3 366.1 470.7 366.0 469.9 368.1 467.4 368.1 466.9 370.6 465.0 370.3 462.6 371.9 460.4 370.1 457.0 370.6 458.9 368.1 457.3 365.6 458.0 363.6 459.0 361.3 461.5 361.7 462.5 359.6 465.0 359.8 465.7 357.2 468.0 357.8 469.9 356.0 472.3 356.9 474.1 355.1 476.6 356.2 479.1 354.5zM478.7 348.1 476.4 349.2 474.6 347.3 472.4 348.7 470.6 347.0 468.1 348.1 466.9 345.7 464.3 346.4 463.3 343.8 460.7 344.4 459.5 342.1 456.5 342.3 457.0 339.5 455.0 337.8 454.9 335.9 455.9 333.8 458.2 334.1 459.2 331.8 460.9 332.2 463.3 332.2 464.5 334.2 467.0 334.1 467.9 336.7 470.7 336.2 471.4 338.6 473.7 339.2 474.0 341.5 476.4 342.1 476.5 344.6 479.0 345.2 478.8 346.8zM484.6 344.2 482.2 343.3 482.6 340.6 480.2 339.6 480.3 337.5 478.2 335.6 479.5 333.2 478.0 331.1 479.0 328.8 477.6 326.3 479.8 325.7 480.0 323.3 482.6 323.1 483.7 320.3 485.1 322.7 487.7 322.3 489.2 324.3 492.2 324.8 490.6 327.1 492.0 329.3 490.5 331.6 492.4 333.8 490.7 335.7 491.2 338.2 488.9 339.1 489.5 341.7 486.8 342.4 486.7 345.3zM488.5 345.1 487.5 343.0 488.9 341.2 487.9 339.2 489.5 337.7 488.7 335.1 490.9 333.7 490.6 331.3 492.8 329.9 492.6 327.1 494.9 327.2 496.2 325.2 497.9 325.3 500.1 326.5 499.9 329.1 502.5 331.0 500.0 332.1 500.3 334.7 498.1 335.9 498.2 338.3 496.1 339.4 495.5 342.2 492.7 342.5 491.8 344.9 490.0 345.3z" fill="none" stroke="#54922a" stroke-width="0.9"/><path d="M485.7 353.4L502.5 347.6L502.3 347.0L484.9 350.4zM496.0 349.5L500.0 344.1L499.7 343.8L495.0 348.8zM498.3 348.9L503.7 343.1L503.4 342.8L497.5 348.1zM483.9 352.7L495.2 369.7L495.7 369.4L486.7 351.1zM491.6 364.0L492.5 371.5L492.9 371.5L492.8 363.9zM493.9 367.8L500.1 370.4L500.3 370.1L494.4 366.7zM483.8 351.3L478.6 368.9L479.1 369.1L486.8 352.5zM481.3 361.0L482.5 369.6L482.9 369.5L482.5 360.9zM480.5 363.2L482.4 368.5L482.8 368.4L481.7 362.9zM485.0 350.3L463.9 355.4L464.0 356.0L485.6 353.5zM470.8 353.9L463.3 352.1L463.2 352.5L470.4 355.1zM473.1 353.5L466.5 352.2L466.4 352.5L472.8 354.7zM486.4 350.7L471.7 338.7L471.3 339.1L484.2 353.1zM473.5 340.1L467.9 338.4L467.7 338.7L473.1 341.2zM478.6 344.8L475.0 338.1L474.6 338.3L477.5 345.4zM486.7 352.7L493.9 336.4L493.4 336.2L483.9 351.1zM492.5 339.5L492.3 332.6L491.9 332.6L491.3 339.5zM491.4 341.7L492.7 333.1L492.3 333.0L490.2 341.5zM480.1 351.9a5.2 3.7 0 1 0 10.4 0a5.2 3.7 0 1 0 -10.4 0z" fill="#62a62c"/>
<path d="M732.2 475.0 736.2 475.0 735.7 478.4 738.5 480.0 737.3 481.7 738.1 484.7 735.3 485.2 735.0 488.1 732.1 488.5 731.6 492.8 728.2 494.8 725.5 498.7 723.1 497.2 721.3 499.0 716.5 498.7 717.5 501.6 714.6 502.4 715.7 505.7 712.8 506.6 712.1 509.3 710.3 508.5 707.4 510.2 706.3 507.4 702.9 508.0 702.2 504.2 698.3 505.4 694.9 503.4 690.6 505.0 688.8 501.1 685.1 501.6 683.0 499.3 680.8 501.0 678.1 499.2 674.8 501.4 674.0 498.2 670.4 498.3 672.4 495.6 670.0 493.2 672.3 491.0 671.1 488.2 673.4 483.6 669.6 481.5 669.6 477.8 668.2 473.8 670.7 470.3 668.6 466.9 670.0 464.2 667.0 462.0 669.7 460.5 668.7 457.4 671.7 458.1 673.1 455.1 676.0 457.0 677.8 454.3 682.4 454.1 681.9 449.9 684.6 448.4 683.1 444.9 687.2 444.3 690.0 440.8 694.6 440.9 695.0 437.5 697.8 438.7 699.3 435.6 701.2 437.4 704.5 436.7 705.0 439.7 708.0 440.8 708.1 444.2 711.3 444.8 715.5 447.1 717.3 444.0 719.4 446.3 722.3 444.4 722.6 447.1 726.0 447.5 724.6 450.6 728.2 452.7 728.8 457.0 733.2 459.3 731.3 461.3 732.9 463.7 730.3 465.0 731.3 467.5 729.2 471.8 732.8 471.4zM710.1 479.8 711.7 477.9 714.0 478.7 715.7 476.8 717.8 478.1 720.1 476.6 722.1 478.5 724.4 476.9 726.4 478.9 729.2 477.8 729.7 480.2 731.9 481.1 732.3 482.5 731.9 485.2 729.4 486.1 728.3 489.0 726.4 487.2 724.0 488.3 722.1 486.4 719.7 487.5 718.2 485.4 715.5 486.0 714.9 483.4 712.5 483.7 711.7 481.4 709.0 481.0zM708.1 484.2 710.3 483.2 711.9 484.7 714.3 484.1 715.0 486.8 717.7 487.1 718.4 489.8 721.2 490.7 719.9 492.7 721.2 494.8 720.4 496.3 718.4 498.1 715.9 497.6 713.0 499.4 712.8 496.5 710.1 495.8 709.9 492.9 706.9 491.9 707.9 489.4 705.9 487.5 706.9 485.6zM702.7 486.4 705.1 487.4 704.7 490.0 707.1 491.4 705.9 493.8 707.4 496.1 706.1 498.5 707.6 501.5 705.0 501.8 704.6 504.4 702.7 504.7 700.1 504.7 698.8 502.2 695.4 501.7 697.4 499.9 695.9 497.8 697.5 496.0 695.9 494.0 697.5 492.5 697.5 489.6 700.4 488.5 701.0 484.9zM695.7 482.3 695.6 485.5 693.0 486.6 692.0 489.0 689.4 489.1 688.1 491.2 686.1 491.3 683.3 492.3 681.8 491.2 680.4 488.4 681.7 486.6 683.0 484.2 685.6 484.4 687.0 482.2 689.2 482.3 691.3 480.9 693.6 482.3 696.4 480.8zM695.8 475.4 693.8 476.8 691.9 475.2 689.9 476.8 688.4 474.9 685.8 475.4 684.5 473.3 682.0 473.7 680.6 471.6 677.6 471.6 678.6 468.8 676.4 467.1 676.8 465.4 677.6 463.0 680.1 463.3 681.0 461.1 682.6 461.1 685.2 461.0 686.1 463.6 688.9 463.1 689.8 465.7 692.7 465.8 692.5 468.6 695.1 469.7 695.2 472.3 697.5 474.2zM701.1 471.2 698.4 470.0 698.1 467.4 696.0 465.6 696.9 463.2 695.0 461.4 695.8 459.4 696.2 456.3 698.2 454.9 700.7 454.3 702.2 456.3 705.0 456.5 703.6 458.9 705.4 460.9 704.4 463.3 705.9 465.6 703.9 467.1 704.5 469.6 702.9 470.3zM707.6 472.9 706.8 470.5 708.9 468.8 708.0 466.4 709.6 464.8 709.8 462.2 712.6 461.5 712.9 458.9 715.4 458.0 716.2 454.9 718.1 456.6 720.0 454.8 721.9 456.7 724.6 455.4 723.6 458.1 726.0 459.6 725.4 462.2 727.4 464.7 724.6 465.2 723.8 467.6 721.4 468.3 720.6 470.9 718.2 471.0 716.7 473.1 714.3 472.1 712.9 474.4 710.5 473.5 708.2 475.2z" fill="none" stroke="#54922a" stroke-width="0.9"/><path d="M702.5 480.3L724.6 480.6L724.6 480.0L702.7 477.1zM716.4 480.2L721.4 484.4L721.7 484.1L717.2 479.3zM722.5 480.6L727.5 477.0L727.3 476.7L721.8 479.6zM701.2 479.5L713.0 497.0L713.6 496.7L704.0 477.9zM710.5 493.1L715.6 496.6L715.9 496.3L711.2 492.2zM709.0 490.6L714.4 493.1L714.6 492.8L709.6 489.6zM701.2 478.0L693.2 496.1L693.7 496.4L704.0 479.4zM694.3 493.6L688.5 496.9L688.6 497.3L694.9 494.6zM696.4 489.6L689.1 494.7L689.4 495.1L697.0 490.6zM702.6 477.1L684.7 478.9L684.8 479.5L702.6 480.3zM692.3 478.5L685.4 483.7L685.7 484.1L692.9 479.5zM691.6 478.5L685.9 483.8L686.2 484.1L692.4 479.4zM704.1 478.3L698.4 461.6L697.9 461.8L701.1 479.1zM699.0 463.1L693.7 458.6L693.4 458.9L698.2 464.0zM700.5 468.6L693.5 462.8L693.2 463.1L699.7 469.5zM703.8 479.7L717.1 462.2L716.6 461.8L701.4 477.7zM712.9 467.4L719.4 465.2L719.3 464.8L712.6 466.2zM715.5 464.4L720.6 462.0L720.5 461.6L715.0 463.3zM697.4 478.7a5.2 3.7 0 1 0 10.4 0a5.2 3.7 0 1 0 -10.4 0z" fill="#62a62c"/>
<path d="M603.9 449.3 606.5 451.7 603.9 453.5 605.8 456.0 603.4 459.2 606.2 462.8 603.6 463.7 600.6 466.7 596.8 464.2 595.2 466.3 592.0 466.7 591.4 470.5 588.8 469.0 586.7 471.0 583.4 469.7 581.4 473.2 579.8 471.2 575.3 470.5 576.3 465.9 573.7 466.2 570.9 464.6 567.2 466.1 566.3 463.4 563.1 462.0 564.1 458.3 560.2 457.3 561.7 454.9 561.0 450.7 564.9 449.3 564.1 447.3 564.9 444.1 561.6 441.4 563.5 439.5 564.2 436.1 568.2 436.3 567.8 432.9 570.4 432.6 572.6 430.0 575.6 431.9 576.7 429.7 580.3 428.5 580.8 423.5 583.3 424.9 587.3 424.4 588.4 428.2 591.7 427.1 592.8 430.0 596.7 430.3 595.5 434.1 598.1 434.2 600.3 437.1 604.7 435.7 604.9 438.4 606.6 442.0 603.5 444.3 605.2 446.3zM587.1 450.0 588.1 447.6 590.6 447.7 592.0 445.4 594.1 446.6 595.9 444.9 598.0 446.0 600.4 444.9 600.8 447.1 603.2 447.5 603.4 449.3 603.4 451.9 601.2 453.4 600.7 456.7 598.8 455.0 596.7 456.1 594.8 454.4 592.4 455.7 591.1 453.3 588.3 453.1 587.1 451.3zM585.2 454.0 587.9 453.3 589.4 455.1 592.1 455.5 592.6 458.2 595.5 459.3 593.7 461.4 594.6 464.7 591.6 463.8 588.4 465.7 588.2 462.9 585.6 462.1 585.4 459.7 583.8 457.2 584.4 454.7zM580.5 455.0 582.7 457.5 581.7 460.4 582.6 463.0 581.2 465.3 582.0 468.6 579.2 468.6 577.5 471.1 576.6 468.5 573.7 467.2 575.6 465.1 574.9 462.3 576.7 460.4 577.0 457.9 579.3 456.8 580.2 453.7zM577.0 452.1 576.8 454.8 574.6 455.8 573.1 457.8 570.6 457.8 568.9 460.0 567.3 458.1 564.2 458.2 566.1 456.0 565.1 453.0 567.8 453.6 569.2 451.3 571.5 451.7 574.3 450.3 576.3 451.5zM577.3 447.5 575.0 448.8 572.9 447.0 570.3 448.2 569.0 446.1 566.4 446.8 565.4 444.2 562.3 444.4 563.2 441.3 561.3 438.4 563.8 438.5 564.6 436.0 566.5 436.2 569.0 436.3 570.0 438.5 572.4 438.5 573.4 440.5 575.4 441.5 575.3 443.9 577.9 444.6 577.5 446.3zM581.3 444.8 577.7 442.5 578.7 440.4 576.9 438.6 578.1 437.0 578.6 434.5 580.4 434.0 583.5 433.6 584.9 435.5 586.3 437.6 584.5 439.6 585.9 442.0 583.6 443.1 582.8 445.8zM584.2 445.3 582.2 443.1 583.8 441.1 583.2 438.5 585.4 437.0 585.0 434.1 587.5 434.5 589.7 432.4 589.7 435.3 592.4 436.9 589.9 438.2 590.5 440.9 588.4 442.1 587.1 444.8 584.8 445.5z" fill="none" stroke="#54922a" stroke-width="0.9"/><path d="M581.6 451.6L595.7 452.0L595.8 451.4L582.0 448.4zM592.2 451.8L596.6 448.9L596.4 448.6L591.6 450.7zM591.7 451.8L596.8 450.5L596.8 450.1L591.5 450.6zM580.3 450.4L584.6 460.9L585.2 460.8L583.3 449.6zM583.6 458.3L587.1 461.8L587.4 461.6L584.5 457.5zM584.0 459.4L588.7 462.9L589.0 462.6L584.7 458.5zM580.3 449.4L576.8 462.7L577.3 462.9L583.3 450.6zM577.7 459.5L574.5 462.5L574.8 462.9L578.5 460.5zM577.6 459.7L575.1 463.2L575.4 463.5L578.5 460.5zM581.9 448.4L569.2 448.7L569.2 449.3L581.7 451.6zM574.8 448.9L570.9 450.6L571.0 451.0L575.2 450.0zM573.1 448.7L569.7 450.4L569.8 450.8L573.5 449.9zM583.4 449.6L579.6 439.0L579.0 439.1L580.2 450.4zM580.8 443.4L577.2 440.8L577.0 441.1L580.0 444.3zM581.0 444.0L577.7 441.0L577.4 441.3L580.1 444.8zM583.3 450.5L586.7 437.4L586.2 437.1L580.3 449.5zM585.5 441.4L584.8 437.6L584.4 437.6L584.3 441.5zM586.3 439.2L584.7 434.8L584.3 434.9L585.1 439.5zM578.4 450.0a3.4 2.5 0 1 0 6.9 0a3.4 2.5 0 1 0 -6.9 0z" fill="#62a62c"/>
<path d="M616.4 380.0 616.7 381.3 616.8 382.7 617.1 384.1 616.3 385.3 616.6 386.8 613.5 387.3 614.5 389.0 615.5 390.7 614.1 391.6 614.3 393.2 611.5 393.2 611.9 394.9 610.6 395.6 610.6 397.2 609.9 398.3 607.7 398.2 607.4 399.5 606.6 400.6 607.1 403.0 605.7 403.5 603.5 402.8 603.6 405.2 601.4 404.1 601.1 406.1 599.2 405.3 597.9 405.5 597.8 408.5 595.8 407.0 594.6 407.4 594.0 410.1 592.6 410.1 590.9 408.5 589.9 410.8 588.5 409.6 587.2 410.1 585.9 408.5 584.4 410.8 583.2 409.9 581.7 410.6 580.4 410.2 579.5 408.0 578.3 407.9 577.2 406.9 576.1 406.4 575.0 405.7 573.6 405.8 572.0 406.1 571.8 403.7 569.6 404.9 569.2 403.2 568.2 402.4 566.1 402.7 565.9 401.0 565.4 399.8 564.1 399.1 562.7 398.6 563.6 396.3 560.5 396.9 562.4 394.2 559.7 394.2 558.8 393.1 560.7 390.8 558.0 390.5 558.8 388.9 557.8 387.8 559.3 386.1 558.9 384.9 558.3 383.8 555.7 382.7 558.0 381.3 556.2 380.0 555.7 378.6 555.7 377.3 557.8 376.2 557.9 374.9 557.6 373.5 557.2 372.0 559.6 371.4 558.1 369.5 558.4 368.2 558.8 366.9 561.7 366.9 559.8 364.3 562.8 364.7 562.9 363.2 563.0 361.6 563.1 359.9 565.3 360.2 564.9 357.9 566.7 357.9 568.2 357.6 569.2 356.8 570.5 356.5 571.7 356.0 572.7 355.2 573.0 353.1 573.8 351.6 576.1 353.6 577.4 353.5 577.7 350.2 579.4 351.3 580.7 351.4 582.1 351.7 583.2 350.4 584.5 349.5 585.9 350.6 587.1 350.8 588.4 352.0 589.9 349.4 590.8 352.3 592.3 351.1 593.9 350.3 594.5 352.8 596.4 351.4 597.9 351.2 598.7 352.7 600.1 352.8 600.3 355.3 601.9 355.1 602.5 356.5 604.8 355.5 604.8 357.7 606.1 358.1 608.2 357.8 608.9 359.1 610.1 359.8 609.6 361.9 610.5 362.9 611.9 363.6 611.9 365.1 612.0 366.5 612.9 367.5 612.6 369.0 613.8 369.9 616.1 370.5 616.4 371.9 615.7 373.4 615.5 374.8 615.2 376.2 614.6 377.5 615.2 378.7zM596.6 403.2 595.3 403.7 593.9 403.9 592.5 404.2 591.1 404.8 589.5 403.6 588.3 405.0 586.9 403.5 585.5 404.2 584.0 405.1 582.6 404.7 581.6 403.0 579.6 405.0 578.6 403.5 577.3 402.8 576.9 400.4 574.9 401.5 574.2 399.9 572.3 400.4M612.8 381.9 611.0 383.2 611.9 384.7 611.9 386.2 611.8 387.7 609.8 388.5 610.9 390.4 610.4 391.8 609.1 392.8 609.3 394.6 608.4 395.7 606.2 395.9 605.4 397.0 603.5 397.1 604.1 399.8 603.2 401.0 601.1 400.6 600.3 402.0 599.2 402.8M600.9 401.7 599.8 402.8 598.0 402.8 596.9 404.1 595.6 405.2 593.9 405.2 592.4 405.9 590.5 403.7 589.1 404.4 587.6 405.5 586.1 406.3M603.7 363.8 605.8 363.8 605.9 365.5 606.2 367.0 607.2 368.0 608.4 368.9 608.6 370.3 609.1 371.6 609.0 373.0 610.9 374.0 610.9 375.4 611.9 376.7 612.0 378.2 610.8 379.6 613.2 381.1 609.8 382.3 611.1 383.9M607.4 367.1 606.8 369.2 606.3 371.0 608.7 371.5 607.4 373.4 609.4 374.3 609.0 375.9 610.0 377.2 611.5 378.6 611.1 380.2 609.6 381.6 610.8 383.2 610.0 384.6M611.1 373.9 612.8 375.1 613.1 376.6 612.0 378.3 611.1 379.8 613.0 381.3 609.7 382.5 609.9 383.9 611.2 385.6 611.0 387.1 609.0 388.0M605.8 394.4 604.4 395.0 603.7 396.2 604.4 398.9 601.9 398.3 602.1 400.8 600.8 401.5 598.9 401.3 597.1 400.9 597.0 403.9 595.0 402.8 593.6 403.0 592.1 403.0 591.3 405.6 589.6 404.1 588.1 403.5 586.8 404.3 585.4 403.0 583.9 404.6M613.5 380.2 610.5 381.5 612.2 383.1 611.1 384.4 613.1 386.3 612.2 387.6 609.9 388.4 609.5 389.8 608.5 390.9 610.5 393.6 607.6 393.5 607.7 395.4 606.4 396.2M605.2 395.5 606.0 398.0 603.9 397.9 603.4 399.4 601.9 399.8 600.7 400.4 600.1 401.9 598.8 402.4 597.4 402.7 596.7 404.5 595.1 404.5 593.2 403.0 592.2 404.1 591.0 405.1 589.8 406.9 588.4 407.0 586.9 405.8M589.5 355.4 591.0 355.1 592.3 355.7 593.5 356.6 595.4 355.6 596.0 357.8 597.2 358.4 599.3 357.6 599.3 360.3 600.6 360.8 602.8 360.2 602.1 363.1 605.0 362.1 605.6 363.5 605.8 365.2 606.1 366.6 608.4 366.9 609.5 367.9M599.7 358.8 600.5 360.1 601.2 361.4 603.2 361.1 604.9 361.5 603.9 364.3 605.2 365.0 607.7 364.8 608.5 366.1 608.8 367.6 607.4 369.8 610.3 370.1 611.6 371.1 612.2 372.5 611.5 374.2M565.2 365.1 565.4 363.2 567.0 362.5 569.3 362.5 570.1 361.1 570.2 358.7 572.8 359.6 573.4 357.6 575.0 357.4 576.7 357.4M582.6 355.3 584.2 356.1 585.7 356.0 587.3 354.5 588.9 354.1 590.6 353.9M567.0 362.6 568.4 361.7 568.6 359.6 571.0 359.9 572.8 359.7 573.1 357.3 575.2 357.9 576.0 356.0M597.0 393.4 598.1 394.8 599.8 395.5 601.5 396.5 601.9 398.9 604.0 398.7 605.4 400.9M601.3 385.2 603.3 386.2 604.5 386.8 605.6 386.9 606.9 387.8 608.7 389.1 610.5 389.9M594.2 392.3 595.2 392.4 597.9 393.9 598.9 395.2 600.5 394.7 601.5 395.9 603.1 396.4" fill="none" stroke="#54922a" stroke-width="1"/>
<path d="M558.1 489.3 558.2 490.7 557.0 491.9 556.2 493.1 555.2 494.2 557.0 495.9 556.1 497.0 556.6 498.5 555.0 499.4 555.7 501.1 553.7 501.6 554.6 503.6 553.8 504.6 552.2 505.2 551.8 506.5 551.4 507.8 549.4 507.8 549.4 509.6 549.0 511.1 546.9 510.7 547.0 512.9 545.7 513.4 544.9 514.6 542.9 514.0 541.4 513.9 541.3 516.5 540.1 517.1 538.5 516.6 536.9 516.0 535.8 516.7 534.9 518.3 533.4 517.6 532.5 519.9 531.0 518.9 529.6 517.8 528.4 519.3 527.1 518.3 525.7 520.1 524.3 519.9 523.1 518.5 521.8 518.7 520.4 518.5 519.1 518.5 517.6 518.6 517.4 515.3 515.8 515.8 514.3 516.0 513.6 514.5 512.1 514.6 511.8 512.6 509.3 513.9 509.0 512.2 508.8 510.4 506.7 510.8 506.6 509.0 506.0 507.9 504.5 507.4 504.6 505.8 503.7 504.8 501.3 504.8 501.1 503.4 502.5 501.3 499.7 501.1 501.5 499.0 500.1 498.1 498.0 497.4 498.5 495.9 499.3 494.4 498.8 493.2 498.7 491.9 499.4 490.6 496.6 489.3 499.7 488.1 498.6 486.7 497.7 485.3 499.0 484.2 497.4 482.5 500.0 481.8 498.1 479.8 498.9 478.6 500.0 477.6 499.9 476.1 501.8 475.6 501.3 473.8 502.2 472.7 503.6 472.1 504.5 471.2 504.8 469.7 506.4 469.3 508.0 469.2 507.5 466.7 509.5 467.1 510.1 465.7 510.6 464.2 512.8 465.1 514.1 464.9 515.0 464.0 515.5 462.1 517.0 462.3 518.3 462.1 519.4 461.2 520.3 459.3 522.0 461.2 523.2 460.4 524.3 458.8 525.7 459.5 527.1 460.5 528.4 459.9 529.7 459.9 530.8 461.1 532.2 460.5 533.4 461.0 535.0 459.7 535.9 461.6 537.5 460.9 539.1 460.5 540.3 461.1 540.7 463.3 542.2 463.2 542.9 464.7 544.1 465.2 545.3 465.7 547.0 465.7 548.3 466.3 547.9 468.7 548.1 470.2 550.0 470.2 549.8 472.0 550.5 473.0 553.2 472.8 552.1 475.0 554.4 475.2 554.0 476.9 556.2 477.3 556.4 478.7 554.5 480.7 555.2 481.8 557.9 482.5 557.1 484.0 556.7 485.4 558.0 486.6 558.2 488.0zM550.2 493.2 549.2 494.4 550.5 496.2 550.0 497.5 547.9 498.1 548.9 500.1 546.6 500.4 545.9 501.6 546.7 503.8 545.3 504.5 545.5 506.6 543.7 506.9 542.8 508.1 540.5 507.3M534.0 515.2 532.4 515.5 530.8 515.7 529.1 514.3 527.6 515.2 526.0 515.5 524.7 513.0 522.7 515.6 521.1 515.1 520.1 513.1M537.9 511.9 535.7 510.2 535.2 513.2 534.0 514.2 532.0 512.1 531.0 514.7 529.3 511.7 528.0 514.6 526.6 512.5 524.9 514.8 523.8 512.7 522.0 514.2 521.4 510.7 520.1 510.5M534.5 511.5 533.3 512.4 532.0 513.4 530.5 512.4 529.3 515.9 527.7 515.2 526.2 515.8 524.7 514.8 523.4 513.3 522.3 512.0 520.3 513.9 519.6 511.4 517.7 512.3 516.5 511.4 515.1 510.8 514.7 508.8M535.1 467.3 535.9 469.0 537.4 469.2 538.4 470.2 540.4 469.7 541.2 471.0 541.9 472.3 542.9 473.3 544.8 473.4 546.7 473.7 546.2 476.0 546.2 477.6 547.4 478.6 547.8 479.9M549.3 499.6 549.1 501.1 548.5 502.4 547.9 503.7 547.0 504.7 547.6 507.2 545.5 507.2 544.7 508.5 543.7 509.6 542.3 510.2 541.4 511.5 539.4 510.9 538.6 512.5 537.7 514.1 535.3 511.9 534.4 513.9 532.8 513.4 531.3 512.5M532.7 465.6 533.5 468.1 535.0 467.6 535.9 469.2 537.9 468.0 539.5 467.9 539.7 470.4 541.5 470.1 543.5 470.0 543.1 472.6 544.5 473.1 546.1 473.6 547.4 474.4 546.2 477.0 548.4 477.2 547.4 479.3 547.9 480.5M520.4 515.5 519.0 514.7 517.4 514.4 516.1 513.5 515.3 511.6 513.7 511.3 512.9 509.7 510.3 510.7 509.2 509.4 508.1 508.3M545.6 471.9 546.5 473.1 548.1 473.7 548.2 475.6 548.9 476.9 549.9 478.1 548.3 480.4 550.5 481.1 549.0 483.1 550.6 484.1 549.9 485.7 553.1 486.7 549.9 488.4 553.1 489.9 553.1 491.4M549.6 488.9 549.1 490.2 549.2 491.6 548.8 492.9 551.4 494.9 548.5 495.6 549.7 497.5 548.1 498.4 547.1 499.4 547.3 501.1 545.8 501.9 547.3 504.7 544.7 504.5 544.2 506.1 543.1 507.0 542.1 508.1 540.6 508.5M548.6 475.5 550.2 476.3 552.1 477.1 552.0 478.8 553.8 479.8 553.8 481.5 553.2 483.3 552.1 485.0 554.0 486.2 553.7 487.8 555.2 489.3M520.1 463.5 521.3 462.0 522.8 461.5 524.7 463.5 526.0 461.1 527.6 461.2 529.2 461.3 530.6 463.0 532.0 463.4 533.4 464.0M515.8 468.0 516.6 466.5 518.1 466.6 518.9 464.5 520.1 463.7 521.5 462.8 523.4 465.0 524.6 463.9 526.1 464.5 527.5 462.1 529.0 462.4M519.6 463.4 521.4 463.8 523.0 463.8 524.2 461.7 525.9 462.0 527.5 462.7 529.1 461.9 530.6 462.7 532.2 462.5 533.3 464.9 534.8 465.1M541.1 495.5 542.9 495.4 543.7 498.7 545.9 497.7 547.3 499.4 550.0 501.6 550.6 503.6M536.4 502.4 539.2 503.3 538.4 506.4 540.4 506.4 541.4 507.9 542.9 509.2 544.1 509.9M530.6 500.0 533.0 501.5 532.9 500.9 536.4 503.9 537.0 503.7 538.3 506.6 540.6 506.5" fill="none" stroke="#54922a" stroke-width="1"/>
<path d="M665.4 552.8 664.8 554.0 666.3 555.5 664.3 556.4 665.4 558.0 664.5 559.1 663.2 559.9 664.0 561.7 662.0 562.1 662.5 563.8 660.8 564.1 660.1 565.1 660.0 566.8 659.9 568.6 657.4 567.7 656.6 568.7 656.2 570.5 655.5 572.0 653.7 571.5 652.3 571.4 651.6 573.6 649.6 571.0 648.8 573.8 647.3 572.1 646.0 571.7 644.8 571.5 643.5 572.0 641.9 573.4 641.1 571.1 639.5 572.0 638.2 571.7 637.3 570.4 635.9 570.3 635.7 568.3 634.7 567.5 633.4 567.1 631.4 567.4 631.1 565.8 630.6 564.6 629.1 564.1 628.8 562.7 628.6 561.4 626.7 560.8 626.5 559.4 627.5 557.8 626.2 556.7 626.1 555.4 624.8 554.2 625.3 552.8 626.7 551.5 624.6 550.0 627.6 549.1 626.9 547.7 626.3 546.1 628.6 545.6 628.1 544.0 630.0 543.5 628.9 541.4 629.5 540.1 630.8 539.5 631.0 537.8 633.2 538.2 633.4 536.4 634.7 535.9 635.9 535.3 637.2 535.0 637.9 533.3 639.1 532.5 640.8 533.6 642.0 532.7 643.6 534.4 644.6 532.2 646.0 532.3 647.4 531.3 648.7 531.9 649.8 533.9 651.1 533.8 652.6 533.4 653.1 535.7 654.8 535.0 655.5 536.4 656.4 537.2 657.3 538.1 659.8 537.1 659.3 539.5 660.4 540.1 661.6 540.8 663.6 541.0 662.2 543.5 663.8 544.0 664.6 545.1 666.1 546.0 666.3 547.4 666.8 548.7 665.1 550.3 665.7 551.5zM662.0 548.2 662.4 549.5 662.8 550.7 662.9 552.1 663.8 553.5 664.1 554.9 662.7 556.1 661.5 557.2 662.5 558.9 661.8 560.1 661.8 561.7 662.2 563.7 660.6 564.4 659.1 565.0M660.2 562.5 658.8 563.6 657.9 565.1 656.4 566.0 654.3 565.7 652.9 566.5 651.1 566.1 650.3 568.4 648.3 566.8 646.9 566.9M656.4 542.3 657.3 543.5 658.6 544.4 659.2 545.7 660.7 546.7 660.1 548.6 663.4 549.4M659.0 561.5 658.2 562.8 656.5 563.3 657.1 566.3 656.0 567.7 653.6 567.0 652.2 567.7M651.5 538.2 653.8 537.0 653.9 539.8 654.8 541.0 658.1 539.4 658.2 541.7 658.1 543.7M663.5 559.1 662.4 560.7 661.0 562.0 658.7 562.6 657.9 564.1 656.2 564.7M653.3 568.0 651.9 568.2 651.2 570.7 649.8 571.6 648.2 571.4 646.7 571.4 645.2 571.4 643.7 571.0 642.6 568.9 641.0 569.6 639.8 568.6M648.6 537.6 650.6 536.5 652.6 536.1 653.4 538.5 655.8 537.9 657.4 538.9M643.3 567.7 641.9 567.3 640.4 566.8 638.3 567.5 636.3 567.4 635.0 566.2 634.6 564.1 633.0 563.2M652.4 570.3 650.7 570.4 649.0 570.6 647.3 569.9 645.8 568.8 644.1 570.9 642.7 569.1M651.5 568.0 650.6 570.4 648.9 569.9 647.2 568.1 645.8 568.0 644.4 568.0 642.5 570.5 641.1 569.7 640.4 567.0 638.1 568.6 636.4 568.3 635.7 566.5 635.3 564.7M641.2 535.0 643.4 535.5 645.4 535.7 647.4 534.5M638.9 536.9 640.3 536.2 641.9 535.6 643.5 535.4 645.1 534.2 646.8 535.2 648.5 534.9M632.9 541.2 633.9 539.8 634.6 537.9 636.8 538.1 637.6 536.0 639.7 536.4 641.2 535.8M650.3 558.5 650.7 559.8 653.3 560.4 654.3 562.1 654.8 562.3 657.2 564.4 659.2 565.0M652.4 561.1 653.8 563.2 656.4 563.4 657.8 564.9 657.4 566.2 659.9 568.9 660.8 568.8M648.5 564.4 649.5 566.1 651.0 567.6 652.6 568.3 655.0 569.0 656.2 570.1 657.6 572.8" fill="none" stroke="#54922a" stroke-width="1"/>
<g opacity="0.72"><circle cx="453.1" cy="450.5" r="8.4" fill="#4c8c25"/><path d="M453.9 456.4L454.4 460.4M448.3 454.2L445.2 456.6M447.6 448.2L443.9 446.7M452.3 444.6L451.8 440.6M457.9 446.8L461.0 444.4M458.6 452.8L462.3 454.3" stroke="#4c8c25" stroke-width="2"/></g><path d="M454.5 452.7 456.4 452.5 457.8 453.4 459.4 456.0 458.0 456.4 456.9 457.8 456.1 456.3 454.3 455.6 454.9 454.0zM452.0 452.7 453.1 454.1 453.0 455.6 451.7 458.2 449.6 457.0 449.3 455.5 449.9 454.3 450.9 453.1zM450.4 450.6 449.4 452.2 448.0 453.0 444.8 453.2 444.9 450.9 446.2 449.8 447.6 449.8 449.3 449.8zM451.6 448.4 449.9 448.6 448.7 447.8 447.0 445.5 448.8 444.4 450.4 444.8 451.1 445.9 451.8 447.2zM454.0 448.4 452.9 446.8 453.1 445.1 454.1 442.2 456.2 443.2 456.6 444.8 456.0 446.1 455.2 447.7zM455.8 450.7 456.8 449.3 458.3 448.9 461.3 449.2 460.9 451.4 459.5 452.3 458.1 452.1 456.7 451.6z" fill="#000"/><path d="M462.8 450.5 463.2 452.7 462.2 454.5 461.5 456.7 459.6 457.6 458.1 459.2 456.1 459.6 454.2 460.8 452.1 460.5 449.9 460.3 448.3 458.9 446.3 458.0 445.4 456.1 443.7 454.7 443.4 452.6 442.7 450.4 443.6 448.5 444.0 446.4 445.3 444.8 446.2 442.8 448.1 441.9 449.9 440.6 452.1 440.9 454.2 440.4 456.1 441.3 458.3 441.5 459.7 443.1 461.5 444.5 461.9 446.5 462.9 448.4z" fill="none" stroke="#62a62c" stroke-width="1.1"/>
<g opacity="0.72"><circle cx="482.4" cy="447" r="8.4" fill="#4c8c25"/><path d="M479.3 441.9L477.3 438.4M485.3 441.8L487.3 438.3M488.4 446.9L492.4 446.8M485.5 452.1L487.5 455.6M479.5 452.2L477.5 455.7M476.4 447.1L472.4 447.2" stroke="#4c8c25" stroke-width="2"/></g><path d="M480.0 445.8 478.6 446.8 477.0 446.7 474.4 445.2 475.5 444.1 475.9 442.4 477.3 443.3 479.1 443.2 479.1 444.8zM482.8 444.9 481.3 443.6 481.0 442.0 481.3 439.1 483.5 439.5 484.3 440.9 484.0 442.2 483.7 443.9zM485.0 445.9 485.0 444.3 486.0 443.5 488.6 442.3 489.3 444.3 488.5 445.6 487.3 446.0zM484.7 448.3 486.2 447.4 487.7 447.6 490.1 449.0 489.1 450.8 487.5 451.0 486.3 450.3 485.1 449.4zM482.2 449.5 483.8 450.5 484.2 452.0 484.0 454.9 481.7 454.7 480.8 453.3 481.0 452.0 481.3 450.4zM480.4 448.1 480.4 449.9 479.4 451.1 477.0 452.6 476.0 450.7 476.5 449.2 477.7 448.6 479.2 447.8z" fill="#000"/><path d="M492.2 447.0 492.6 449.2 491.4 450.9 490.7 453.1 488.8 454.1 487.5 455.8 485.5 456.4 483.5 457.4 481.4 456.8 479.2 456.7 477.6 455.3 475.5 454.6 474.4 452.8 472.9 451.2 472.7 449.1 472.2 447.0 473.0 445.0 473.1 442.9 474.4 441.2 475.4 439.2 477.4 438.5 479.3 437.4 481.4 437.5 483.5 436.9 485.4 437.6 487.7 437.9 488.9 439.7 490.7 441.0 491.0 443.1 492.3 444.9z" fill="none" stroke="#62a62c" stroke-width="1.1"/>
<g opacity="0.72"><circle cx="509.8" cy="436.7" r="8.4" fill="#4c8c25"/><path d="M510.5 442.7L511.0 446.6M505.0 440.3L501.8 442.7M504.3 434.3L500.6 432.7M509.1 430.7L508.6 426.8M514.6 433.1L517.8 430.7M515.3 439.1L519.0 440.7" stroke="#4c8c25" stroke-width="2"/></g><path d="M511.0 439.0 512.9 439.0 514.1 440.1 515.6 442.6 513.6 443.6 512.1 443.0 511.5 441.7 510.8 440.2zM508.8 438.9 509.6 440.3 509.6 441.8 508.3 444.3 506.3 443.2 506.0 441.7 506.7 440.6 507.6 439.3zM507.5 436.8 506.3 438.4 504.7 439.1 503.2 439.5 502.3 439.1 501.4 436.1 503.1 436.0 504.7 435.1 506.0 436.3zM508.8 434.8 507.1 434.5 505.9 433.4 504.5 430.9 506.5 430.1 507.9 430.7 508.4 431.9 509.0 433.5zM511.2 434.7 510.3 433.0 510.6 431.4 512.3 429.0 514.2 430.4 514.4 432.0 513.6 433.2 512.4 434.3zM512.2 436.6 513.0 435.1 514.5 434.7 517.2 434.5 517.2 436.5 516.1 437.6 514.7 437.6 513.1 437.5z" fill="#000"/><path d="M519.8 436.7 520.0 438.9 518.7 440.6 518.0 442.7 516.2 443.8 515.0 445.6 512.9 446.1 510.8 447.0 508.8 446.4 506.7 446.3 505.0 445.0 502.9 444.4 501.8 442.5 500.3 440.9 500.3 438.8 499.8 436.7 500.3 434.7 500.3 432.5 501.8 430.9 502.9 428.9 504.9 428.3 506.7 427.1 508.8 427.1 510.9 426.4 512.9 427.2 515.0 427.7 516.2 429.5 518.0 430.8 518.6 432.8 519.9 434.6z" fill="none" stroke="#62a62c" stroke-width="1.1"/>
<g opacity="0.72"><circle cx="640.8" cy="415.2" r="8.4" fill="#4c8c25"/><path d="M646.4 417.5L650.1 419.0M641.6 421.1L642.1 425.1M636.1 418.9L632.9 421.3M635.2 412.9L631.5 411.4M640.0 409.3L639.5 405.3M645.5 411.5L648.7 409.1" stroke="#4c8c25" stroke-width="2"/></g><path d="M643.3 415.0 644.0 413.4 645.4 412.9 648.2 412.6 648.3 414.9 647.1 416.1 645.7 416.1 644.2 415.9zM642.1 416.9 644.1 416.6 645.5 417.5 647.5 419.8 645.6 421.1 643.9 420.9 643.0 419.8 642.2 418.2zM639.5 416.9 640.4 418.6 639.9 420.1 638.4 422.6 636.4 421.2 636.3 419.6 637.1 418.4 638.3 417.2zM638.7 415.3 638.0 417.2 636.4 417.9 633.6 418.3 633.3 415.9 634.4 414.7 635.8 414.7 637.6 414.7zM639.3 413.3 637.6 413.5 636.2 412.8 634.5 410.6 636.1 409.4 637.7 409.6 638.4 410.8 639.3 412.1zM642.0 412.9 641.0 411.4 641.0 409.9 642.2 407.2 644.4 408.4 644.7 410.0 644.1 411.2 643.1 412.5z" fill="#000"/><path d="M650.6 415.1 650.7 417.4 649.5 419.0 649.0 421.2 647.4 422.5 646.0 424.2 643.9 424.6 641.8 425.3 639.8 424.7 637.6 424.9 635.9 423.6 633.8 422.9 632.8 421.1 631.5 419.3 631.5 417.2 630.7 415.2 631.2 413.2 631.3 410.9 632.7 409.4 634.0 407.6 636.0 406.9 637.7 405.6 639.8 405.5 641.9 404.8 643.8 405.8 646.0 406.4 647.2 408.1 649.1 409.2 649.8 411.2 651.0 413.1z" fill="none" stroke="#62a62c" stroke-width="1.1"/>
<g opacity="0.72"><circle cx="632.9" cy="442.6" r="8.4" fill="#4c8c25"/><path d="M638.7 444.2L642.5 445.3M634.4 448.4L635.4 452.3M628.6 446.8L625.8 449.6M627.1 441.0L623.3 439.9M631.4 436.8L630.4 432.9M637.2 438.4L640.0 435.6" stroke="#4c8c25" stroke-width="2"/></g><path d="M635.1 442.6 636.1 440.9 637.6 440.3 640.5 440.0 640.5 442.5 639.3 443.5 637.9 443.5 636.2 443.4zM634.0 444.2 636.0 444.1 637.4 445.1 639.1 447.5 637.1 448.7 635.5 448.5 634.8 447.2 633.9 445.7zM631.8 444.8 632.6 446.3 632.4 447.8 631.1 450.5 629.2 449.3 628.9 447.7 629.7 446.6 630.6 445.2zM630.4 442.8 629.8 444.6 628.4 445.4 625.4 445.8 625.2 443.2 626.4 442.1 627.8 442.0 629.4 442.1zM631.2 440.8 629.5 441.1 628.0 440.5 626.0 438.3 627.8 436.9 629.5 437.1 630.4 438.1 631.1 439.5zM633.8 440.5 632.5 439.1 632.6 437.5 633.5 434.7 635.6 435.6 636.2 437.1 635.7 438.4 634.8 439.8z" fill="#000"/><path d="M642.5 442.5 642.8 444.7 641.6 446.5 641.2 448.6 639.6 450.0 638.1 451.7 635.9 451.7 633.9 452.5 631.9 452.2 629.7 452.5 627.9 451.3 625.9 450.3 625.1 448.3 623.7 446.7 623.6 444.6 622.6 442.6 623.2 440.6 623.5 438.3 625.1 437.0 626.2 435.1 628.1 434.3 629.7 432.8 631.8 432.7 634.0 432.3 635.9 433.3 638.0 433.9 639.4 435.4 641.3 436.5 641.9 438.5 643.1 440.5z" fill="none" stroke="#62a62c" stroke-width="1.1"/>
<g opacity="0.72"><circle cx="626.5" cy="473" r="8.4" fill="#4c8c25"/><path d="M632.3 471.5L636.2 470.6M630.7 477.3L633.5 480.2M624.9 478.8L623.8 482.6M620.7 474.5L616.8 475.4M622.3 468.7L619.5 465.8M628.1 467.2L629.2 463.4" stroke="#4c8c25" stroke-width="2"/></g><path d="M628.6 471.2 628.0 469.5 628.6 468.2 630.9 466.2 632.3 468.1 632.1 469.8 631.0 470.7 629.7 471.3zM628.4 474.1 630.1 473.1 631.8 473.2 634.4 474.5 633.3 476.5 631.7 476.9 630.6 476.1 629.0 475.2zM626.6 475.6 628.3 476.2 628.8 477.7 629.2 480.6 627.0 480.6 626.0 479.4 625.9 478.1 626.0 476.5zM624.8 474.6 625.3 476.4 624.5 477.9 622.5 480.0 620.9 478.3 621.0 476.7 622.1 475.8 623.5 474.7zM624.6 471.9 622.7 472.9 620.8 472.7 619.3 472.4 618.6 471.5 618.5 469.9 619.3 468.8 621.0 468.6 622.3 469.3 623.9 470.5zM626.2 470.3 624.5 469.7 623.7 468.5 623.3 465.4 624.8 465.8 626.4 465.0 626.5 466.6 627.7 468.1 626.5 469.2z" fill="#000"/><path d="M636.0 473.0 636.4 475.1 635.4 477.0 635.0 479.2 633.2 480.3 631.6 481.9 629.5 482.1 627.5 483.0 625.5 482.8 623.2 483.0 621.6 481.6 619.6 480.6 618.8 478.6 617.3 477.1 616.9 475.0 616.1 473.0 616.8 471.0 617.1 468.8 618.8 467.5 619.8 465.5 621.6 464.6 623.3 463.0 625.4 463.3 627.6 462.8 629.4 463.9 631.5 464.3 633.0 465.8 635.1 466.8 635.5 468.9 636.4 470.9z" fill="none" stroke="#62a62c" stroke-width="1.1"/>
<g opacity="0.72"><circle cx="632.5" cy="506.6" r="8.4" fill="#4c8c25"/><path d="M634.1 500.8L635.2 497.0M638.3 505.1L642.2 504.1M636.7 510.9L639.5 513.8M630.9 512.4L629.8 516.2M626.7 508.1L622.8 509.1M628.3 502.3L625.5 499.4" stroke="#4c8c25" stroke-width="2"/></g><path d="M632.5 503.8 630.9 502.9 630.3 501.5 630.0 498.4 632.2 498.5 633.4 499.8 633.4 501.2 633.1 502.9zM634.4 504.7 633.6 503.1 634.2 501.8 636.1 499.6 637.8 501.3 637.7 502.9 636.7 503.8 635.4 504.6zM634.5 507.7 636.3 506.9 638.0 507.1 640.6 508.6 639.4 510.5 637.7 511.0 636.5 510.1 635.2 509.0zM632.7 508.8 634.4 509.7 635.3 511.2 635.5 514.2 633.0 514.4 631.9 513.2 631.7 511.7 632.0 510.0zM630.8 508.3 631.3 509.9 630.6 511.3 628.7 513.3 627.2 511.8 627.4 510.2 628.4 509.3 629.6 508.4zM630.5 505.9 628.9 507.1 627.2 507.2 624.4 506.3 625.2 503.9 626.8 503.4 628.2 503.8 629.6 504.8z" fill="#000"/><path d="M642.1 506.6 642.6 508.8 641.7 510.7 640.9 512.8 639.0 513.7 637.5 515.3 635.5 515.7 633.6 516.9 631.5 516.5 629.2 516.6 627.7 515.0 625.8 514.1 624.8 512.2 623.0 510.8 622.8 508.7 622.1 506.6 623.0 504.6 623.4 502.5 624.7 500.9 625.6 498.9 627.5 497.9 629.3 496.7 631.4 497.0 633.6 496.6 635.5 497.5 637.6 497.7 639.1 499.2 640.9 500.6 641.4 502.6 642.4 504.5z" fill="none" stroke="#62a62c" stroke-width="1.1"/>
<g opacity="0.72"><circle cx="528.7" cy="543.7" r="8.4" fill="#4c8c25"/><path d="M525.8 549.0L523.9 552.5M522.7 543.8L518.7 543.9M525.6 538.6L523.5 535.2M531.6 538.4L533.5 534.9M534.7 543.6L538.7 543.5M531.8 548.8L533.9 552.2" stroke="#4c8c25" stroke-width="2"/></g><path d="M528.5 546.2 530.0 547.2 530.5 548.7 530.3 551.7 528.8 551.2 527.2 551.5 527.3 549.9 526.5 548.3 528.0 547.5zM526.2 545.1 526.3 546.9 525.3 548.1 522.6 549.6 521.6 547.6 522.3 546.0 523.6 545.4 525.1 544.8zM526.5 542.4 524.8 543.5 523.0 543.2 521.6 542.8 520.9 541.9 521.8 539.0 523.3 539.8 525.2 539.7 525.5 541.4zM528.7 541.6 527.2 540.3 526.6 538.7 526.6 535.8 528.9 535.8 530.0 537.1 529.8 538.5 529.6 540.4zM530.7 543.1 531.2 541.2 532.6 540.2 535.4 539.1 536.0 541.4 535.2 542.9 533.8 543.2 532.1 543.4zM530.8 544.8 532.3 543.8 533.9 544.0 536.4 545.3 535.3 547.1 533.8 547.5 532.6 546.8 531.2 545.9z" fill="#000"/><path d="M538.5 543.7 538.9 545.9 537.7 547.6 537.0 549.8 535.1 550.8 533.7 552.4 531.7 553.1 529.8 554.2 527.7 553.5 525.5 553.4 524.0 552.0 521.9 551.2 520.9 549.4 519.2 547.9 519.0 545.8 518.5 543.7 519.4 541.7 519.4 539.6 520.8 538.0 521.8 536.0 523.7 535.1 525.6 534.0 527.7 534.1 529.8 533.6 531.7 534.3 533.9 534.7 535.3 536.3 537.0 537.7 537.4 539.8 538.5 541.6z" fill="none" stroke="#62a62c" stroke-width="1.1"/>
<g opacity="0.72"><circle cx="507" cy="563.4" r="8.4" fill="#4c8c25"/><path d="M508.4 569.2L509.3 573.1M502.6 567.5L499.7 570.2M501.3 561.6L497.4 560.5M505.6 557.6L504.7 553.7M511.4 559.3L514.3 556.6M512.7 565.2L516.6 566.3" stroke="#4c8c25" stroke-width="2"/></g><path d="M508.2 565.4 510.1 565.3 511.5 566.2 512.9 568.7 510.9 569.9 509.3 569.4 508.6 568.2 507.9 566.6zM506.3 565.4 507.4 566.9 507.5 568.6 506.7 571.2 504.7 570.6 504.1 569.1 504.6 567.8 505.4 566.3zM504.9 563.4 503.6 565.0 501.8 565.8 498.7 565.9 498.8 563.5 500.1 562.3 501.6 562.4 503.5 562.7zM505.9 561.4 503.8 561.3 502.5 559.9 500.9 557.4 502.8 556.3 504.5 556.8 505.1 558.2 506.0 559.9zM507.9 561.0 506.7 559.6 506.6 557.9 507.7 555.1 509.9 556.0 510.5 557.6 509.9 558.9 509.0 560.3zM509.5 562.7 509.8 560.9 511.1 560.1 514.0 559.2 514.5 561.5 513.5 562.9 512.2 563.3 510.6 563.3z" fill="#000"/><path d="M517.0 563.4 517.2 565.6 515.8 567.3 515.1 569.3 513.4 570.5 512.1 572.3 510.1 572.9 508.0 573.7 506.0 573.1 503.8 573.0 502.2 571.7 500.1 571.0 499.1 569.2 497.4 567.6 497.4 565.5 497.0 563.4 497.7 561.4 497.6 559.2 499.0 557.6 500.1 555.6 502.1 555.0 503.9 553.9 506.0 553.9 508.1 553.1 510.0 553.9 512.2 554.4 513.4 556.2 515.2 557.5 515.7 559.5 517.0 561.3z" fill="none" stroke="#62a62c" stroke-width="1.1"/>
<g opacity="0.72"><circle cx="493.2" cy="589.5" r="8.4" fill="#4c8c25"/><path d="M489.3 594.1L486.7 597.1M487.3 588.4L483.4 587.7M491.2 583.8L489.9 580.1M497.1 584.9L499.7 581.9M499.1 590.6L503.0 591.3M495.2 595.2L496.5 598.9" stroke="#4c8c25" stroke-width="2"/></g><path d="M492.7 591.4 493.9 593.0 493.9 594.8 493.3 597.7 491.1 597.0 490.4 595.5 490.7 594.0 491.5 592.4zM490.9 589.8 489.9 591.5 488.4 592.2 485.3 592.7 485.1 590.2 486.4 589.0 487.9 588.8 489.7 588.9zM491.3 587.7 489.7 588.2 488.4 587.6 486.4 585.6 488.0 584.1 489.6 584.3 490.5 585.3zM494.2 587.2 492.9 585.8 493.0 584.1 494.1 581.4 496.5 582.4 496.9 584.0 496.3 585.2 495.4 586.7zM495.7 588.6 496.0 586.8 497.1 585.6 500.0 584.5 500.7 586.6 499.8 588.1 498.5 588.6 496.8 589.0zM494.9 591.5 496.8 591.2 498.3 592.0 500.4 594.2 498.7 595.7 497.0 595.4 496.0 594.3 495.1 592.8z" fill="#000"/><path d="M503.1 589.5 503.2 591.7 501.9 593.4 501.3 595.4 499.7 596.7 498.4 598.6 496.3 598.9 494.2 599.7 492.2 599.0 490.1 599.1 488.3 598.0 486.1 597.3 485.2 595.4 483.8 593.6 483.9 591.5 483.1 589.5 483.7 587.5 483.7 585.3 485.1 583.7 486.4 581.8 488.4 581.3 490.1 579.9 492.2 579.7 494.3 579.1 496.2 580.1 498.4 580.6 499.6 582.4 501.4 583.6 502.1 585.5 503.4 587.4z" fill="none" stroke="#62a62c" stroke-width="1.1"/>
<path d="M419 538.5H460M439.5 518.5V559" stroke="#a80000" stroke-width="1.05"/><circle cx="439.5" cy="538.5" r="5.3" fill="none" stroke="#a00000" stroke-width="1"/>
</svg>
</svg>
</body></html>
